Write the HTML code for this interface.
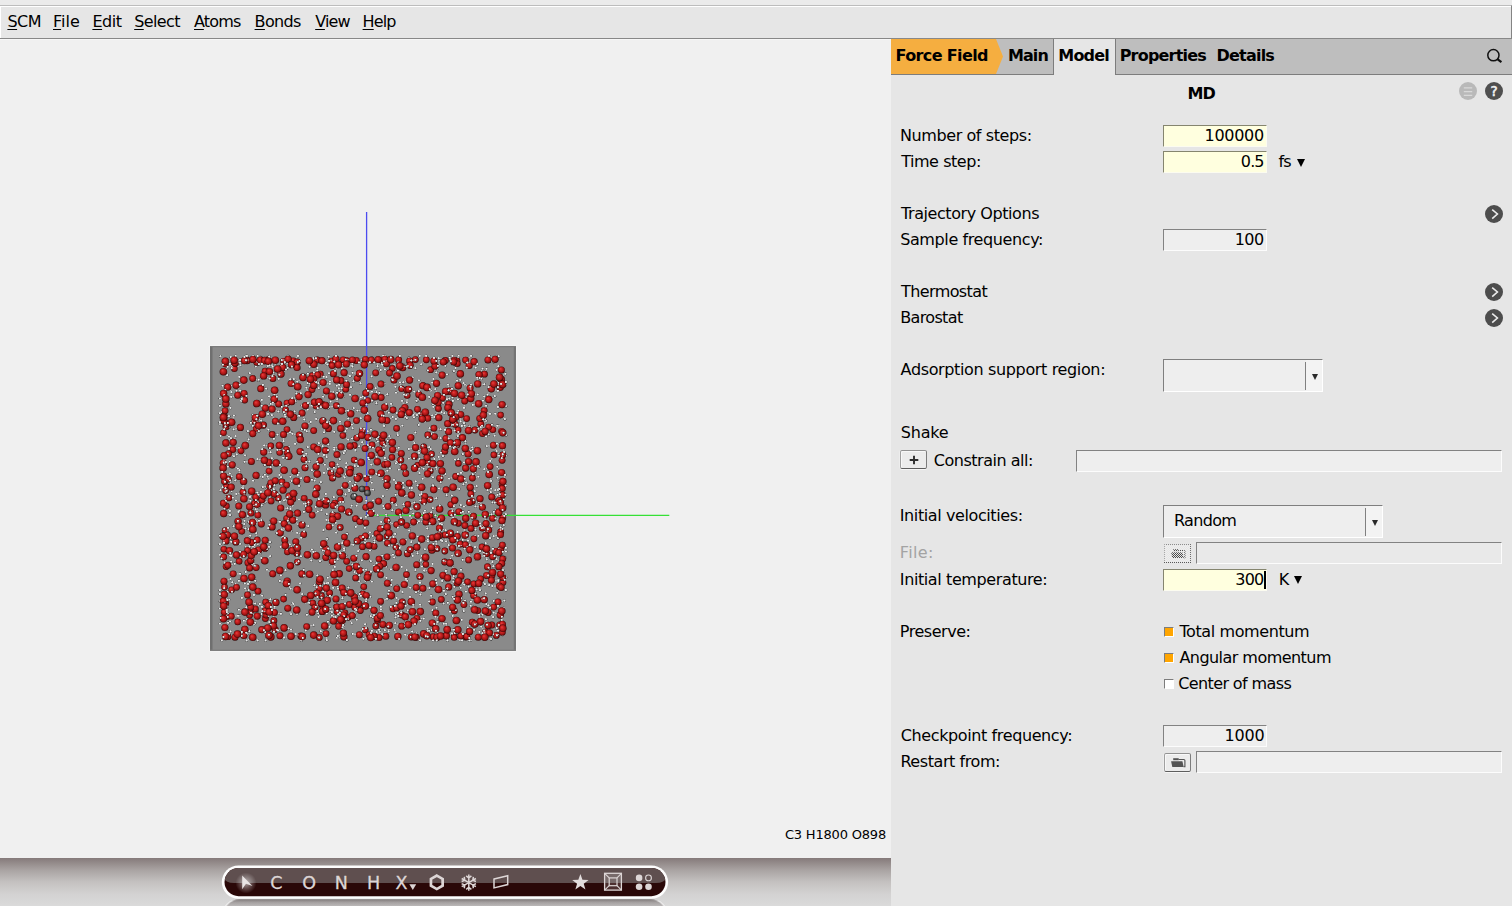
<!DOCTYPE html>
<html lang="en">
<head>
<meta charset="utf-8">
<title>AMSinput - Force Field MD</title>
<style>
html,body{margin:0;padding:0;}
body{width:1512px;height:906px;overflow:hidden;position:relative;background:#ebebeb;
  font-family:"DejaVu Sans","Liberation Sans",sans-serif;font-size:16px;color:#000;line-height:19px;}
.abs{position:absolute;}
/* menu bar */
#menubar{position:absolute;left:0;top:5px;width:1511px;height:32px;background:#e6e6e6;border-top:1px solid #bdbdbd;border-bottom:1px solid #888888;border-right:1px solid #848484;box-shadow:inset 1px 1px 0 #ffffff;box-sizing:content-box;}
#menubar span{position:absolute;top:6px;white-space:nowrap;}
#menubar u{text-decoration:underline;text-underline-offset:2px;text-decoration-thickness:1px;}
/* viewer */
#viewer{position:absolute;left:0;top:39px;width:891px;height:819px;background:#f0f0f0;box-shadow:inset 0 1px 0 #f7f7f7;}
#bottombar{position:absolute;left:0;top:858px;width:891px;height:48px;background:linear-gradient(#857a7a 0%,#a9a3a2 25%,#c4c1c0 50%,#d3d2d2 75%,#dadada 100%);}
#fm{position:absolute;right:5px;top:786px;font-size:13px;white-space:nowrap;}
/* right panel */
#panel{position:absolute;left:891px;top:39px;width:621px;height:867px;background:#e6e6e6;}
#tabbar{position:absolute;left:891px;top:39px;width:621px;height:35px;background:#bebebe;border-bottom:1px solid #7d7d7d;}
#ff{position:absolute;left:0;top:0;width:112px;height:35px;background:#f5ae40;clip-path:polygon(0 0,105px 0,112px 17.5px,105px 35px,0 35px);font-weight:bold;}
#ff span{position:absolute;left:4.5px;top:7px;white-space:nowrap;}
.tab{position:absolute;top:0;height:35px;font-weight:bold;white-space:nowrap;box-sizing:border-box;}
.tab.sel{background:#e6e6e6;height:36px;}
.tab span{position:absolute;top:7px;}
.lbl{position:absolute;left:900px;white-space:nowrap;}
.dis{color:#a3a3a3;}
.inp{position:absolute;left:1163px;width:102px;height:20px;border:1px solid;border-color:#828282 #fcfcfc #fcfcfc #828282;background:#eeeeee;}
.inp.y{background:#ffffdf;border-color:#85856f #fcfcf0 #fcfcf0 #85856f;}
.inp span{position:absolute;right:2px;top:-0.5px;white-space:nowrap;}
.txt{position:absolute;white-space:nowrap;}
.combo{position:absolute;left:1163px;height:31px;border:1px solid;border-color:#7f7f7f #ffffff #ffffff #7f7f7f;background:#eeeeee;}
.combo i{position:absolute;right:16px;top:2px;bottom:1px;width:1px;background:#808080;}
.combo b{position:absolute;right:0;top:0;bottom:0;width:16px;background:#f3f3f3;}
.combo em{position:absolute;right:4.5px;top:14px;width:0;height:0;border-left:3.8px solid transparent;border-right:3.8px solid transparent;border-top:6.2px solid #2a2a2a;}
.combo span{position:absolute;left:11px;top:5px;white-space:nowrap;}
.btn{position:absolute;width:25px;height:17px;border:1px solid;border-color:#929292 #7c7c7c #5e5e5e #a0a0a0;border-radius:2px;background:#ececec;box-shadow:inset 1px 1px 0 #f8f8f8,0 1px 0 #f6f6f6,-1px 0 0 #ededed;}
.cb{position:absolute;left:1164px;width:8px;height:8px;border:1px solid;border-color:#7c7c7c #ffffff #ffffff #7c7c7c;background:#ffa500;}
.cb.off{background:#ffffff;}
.go{position:absolute;left:1485px;width:18px;height:18px;}
.dd{position:absolute;width:0;height:0;border-left:4px solid transparent;border-right:4px solid transparent;border-top:8px solid #000;}
</style>
</head>
<body>
<div id="menubar">
  <span id="m1" style="left:7.4px;letter-spacing:-0.45px"><u>S</u>CM</span>
  <span id="m2" style="left:53.0px;letter-spacing:0.06px"><u>F</u>ile</span>
  <span id="m3" style="left:92.4px;letter-spacing:-0.42px"><u>E</u>dit</span>
  <span id="m4" style="left:134.2px;letter-spacing:-0.60px"><u>S</u>elect</span>
  <span id="m5" style="left:194.0px;letter-spacing:-0.84px"><u>A</u>toms</span>
  <span id="m6" style="left:254.6px;letter-spacing:-0.67px"><u>B</u>onds</span>
  <span id="m7" style="left:315.2px;letter-spacing:-0.90px"><u>V</u>iew</span>
  <span id="m8" style="left:362.6px;letter-spacing:-0.90px"><u>H</u>elp</span>
</div>

<div id="viewer">
  <!--MOLECULE-->
<svg id="mol" class="abs" style="left:0;top:0" width="891" height="819" viewBox="0 39 891 819">
<defs><radialGradient id="og" cx="0.5" cy="0.5" r="0.52" fx="0.36" fy="0.33"><stop offset="0" stop-color="#e84040"/><stop offset="0.35" stop-color="#cc2323"/><stop offset="0.7" stop-color="#a01515"/><stop offset="0.9" stop-color="#5a0808"/><stop offset="1" stop-color="#1e0202"/></radialGradient><radialGradient id="hg" cx="0.5" cy="0.5" r="0.55" fx="0.36" fy="0.33"><stop offset="0" stop-color="#f4f4f4"/><stop offset="0.5" stop-color="#dcdcdc"/><stop offset="0.8" stop-color="#8a8a8a"/><stop offset="1" stop-color="#1a1a1a"/></radialGradient><radialGradient id="cg" cx="0.5" cy="0.5" r="0.52" fx="0.36" fy="0.33"><stop offset="0" stop-color="#9a9a9a"/><stop offset="0.5" stop-color="#5a5a5a"/><stop offset="1" stop-color="#161616"/></radialGradient></defs>
<rect x="209.5" y="345.5" width="307" height="306" fill="#f8f8f8"/>
<rect x="210" y="346" width="306" height="305" fill="#8a8a8a"/>
<rect x="210" y="346" width="2.5" height="305" fill="#6f6f6f"/>
<rect x="513.8" y="346" width="2.2" height="305" fill="#747474"/>
<rect x="210" y="346" width="306" height="1.2" fill="#7b7b7b"/>
<rect x="210" y="649.6" width="306" height="1.4" fill="#7e7e7e"/>
<path d="M366.6 212V515.5" stroke="#4c4cf0" stroke-width="1.3" fill="none"/>
<path d="M366.6 515.4H669.3" stroke="#35e035" stroke-width="1.2" fill="none"/>
<path d="M331.6 361L335 360.8M331.6 361L330.1 358.8M382.7 443.1L384.2 444.5M382.7 443.1L380.2 441M363.8 586.8L363.2 588.9M363.8 586.8L361.5 584.1M366.7 478.8L369.3 480.8M366.7 478.8L368.4 475.9M315.9 406.1L315.3 409.2M315.9 406.1L315.6 406.9M457 360.9L457.9 358.5M457 360.9L454.7 362.8M225.3 364.1L228.7 364.9M225.3 364.1L225.2 362.2M361.2 538.2L363.2 536.6M361.2 538.2L358.5 539.4M407.2 395.5L407.1 399M407.2 395.5L407.6 394.6M337.1 611.7L335.7 610.4M337.1 611.7L334.5 613.7M283.5 361.2L286.8 360.6M283.5 361.2L283.5 363.7M354.2 460.1L356.9 460M354.2 460.1L354.6 463.2M332.2 464.6L330 466.9M332.2 464.6L334.9 464.6M279.7 452.5L280.3 452.9M279.7 452.5L280.9 449.3M336.3 362.4L333.2 363.9M336.3 362.4L337.2 361.3M362.8 593.9L361.3 594M362.8 593.9L362.4 590.7M393 608.9L394.7 606M393 608.9L395.4 611.2M407.8 504.4L411.2 503.5M407.8 504.4L407.9 506.1M457 445L459.8 443M457 445L456 446M454.4 636.5L456.3 636.1M454.4 636.5L453.9 633.2M442.5 398.1L446 398.4M442.5 398.1L441.7 401.1M292.9 498.9L292.8 502.3M292.9 498.9L291 498.6M239.1 561.3L240.3 558M239.1 561.3L239.6 562.3M304.2 498.3L304.2 501.1M304.2 498.3L301.6 498.9M241.8 531.3L241.6 527.8M241.8 531.3L242 532.2M287 429.5L289.3 431.2M287 429.5L286.3 431.6M225.8 603.3L222.9 602.4M225.8 603.3L226.6 604.9M329 527L328.7 523.6M329 527L326.2 528.6M497.9 501.2L497.3 498.5M497.9 501.2L500.8 500.4M401.6 388.8L398.9 390.8M401.6 388.8L400.9 385.7M454.2 637.5L452.9 635.3M454.2 637.5L457.2 638.7M467.5 581.9L468.9 585M467.5 581.9L464 582.4M492.8 429.7L493.7 432.8M492.8 429.7L495.7 427.8M457.3 363.7L457.6 360.6M457.3 363.7L456.5 365.9M430.3 470.9L428.9 467.7M430.3 470.9L427.8 473.2M391.9 457.4L389 459.1M391.9 457.4L394.5 459.7M340.7 499.8L343.1 497.5M340.7 499.8L341.9 500.9M396.6 428.4L399.6 427.1M396.6 428.4L397.3 431.9M367.8 400.5L370.1 400.5M367.8 400.5L369.8 401M500.6 415.1L498 414.5M500.6 415.1L502.8 417.2M425.8 564.4L423.2 562.9M425.8 564.4L425.2 567.8M342.9 435.6L345.6 437.6M342.9 435.6L344.2 433.5M344.4 537L345.8 535.4M344.4 537L343.4 540.1M349.2 568.6L350.8 567.8M349.2 568.6L350.9 566.6M493.9 454.9L492.1 457.9M493.9 454.9L496.5 455.3M416.9 618.2L420.4 618.4M416.9 618.2L416.4 614.8M268.4 359.6L270.5 359.6M268.4 359.6L268.3 362.9M270.8 445.9L270.4 447.1M270.8 445.9L267.5 445.7M395.9 547.3L398.2 545.6M395.9 547.3L392.8 546M396.6 524.6L393.2 523.6M396.6 524.6L397.9 524.5M365.3 630L365.2 627.2M365.3 630L363.6 632.5M226.8 616.7L224.2 614.4M226.8 616.7L227.3 616.8M226.4 506.1L228.2 508.6M226.4 506.1L226.3 503.4M312.7 603.1L312.9 602.3M312.7 603.1L309.3 602.9M286.4 449.4L285 450M286.4 449.4L283.7 448M234.4 368.7L237.4 367M234.4 368.7L232.2 366.4M406.7 525.5L408.1 526.1M406.7 525.5L408 528.1M392.3 368.4L394 367M392.3 368.4L393.4 366.6M287 403L286.5 406.4M287 403L290.4 402.6M387 536.2L386.8 535.1M387 536.2L389.4 534.2M346.3 360.3L344.7 362.1M346.3 360.3L345.3 361.9M237.7 621.9L238.6 618.9M237.7 621.9L238.1 621.4M249.6 615.3L248.5 612.1M249.6 615.3L248.4 617.4M458.4 463.4L456.7 461.5M458.4 463.4L458.4 461.4M458.1 429.9L460 428M458.1 429.9L458.1 433.1M482.3 528.2L483 527.7M482.3 528.2L484.1 531.1M250.5 611.8L248.9 613M250.5 611.8L253.9 611.5M223.5 432.8L226.3 434.7M223.5 432.8L222.1 434.4M500.8 549.3L500.5 549.9M500.8 549.3L503.4 550.5M379 559.1L381.4 561.2M379 559.1L380.7 557.4M246.5 359.5L243.4 359.7M246.5 359.5L246.4 357.7M369 634.7L366.2 636.8M369 634.7L367.6 631.5M223.9 549.2L222.1 552.1M223.9 549.2L222 546.7M502 484.3L500.1 487.2M502 484.3L500.8 482.9M283.6 599.1L284.6 597M283.6 599.1L284.6 597.5M502.7 559L500.5 556.4M502.7 559L504 558.4M366.7 489.4L370 489.5M366.7 489.4L366.7 491.6M256.8 362.4L258.6 359.7M256.8 362.4L256.4 364.5M430.6 369.7L434.1 369.1M430.6 369.7L429.3 370.1M471 528.4L473.5 527.1M471 528.4L469 530.4M396.7 608L396.3 611.3M396.7 608L393.8 607.5M438.4 408.5L437.4 411.6M438.4 408.5L435.8 406.4M466.6 418.6L465.3 420.9M466.6 418.6L463.8 417.8M360.3 610.5L357.2 608.9M360.3 610.5L362.5 608M485.6 632.1L483.4 629.4M485.6 632.1L483.6 634.9M285.6 409.8L285.6 413.2M285.6 409.8L286.1 409.7M348.1 617.3L344.8 618.3M348.1 617.3L349.9 620.3M340.6 395.3L339.8 391.9M340.6 395.3L342.1 396.1M372.1 444.9L370 445.1M372.1 444.9L375 443.3M226.2 566.5L226.3 567.6M226.2 566.5L228.7 564.1M472.3 622.2L474.8 623.4M472.3 622.2L470 624.9M464.7 401L464.4 404.5M464.7 401L462.5 399.7M381.2 397.5L378.9 394.9M381.2 397.5L384.3 395.9M254.9 421.2L253.9 418.2M254.9 421.2L253.9 423.6M287.2 452.8L288.1 449.9M287.2 452.8L287.6 451.9M387.1 556.8L386.2 559.7M387.1 556.8L390.1 555.8M434.5 436.6L437.6 437.5M434.5 436.6L433.7 433.5M380.6 601.4L383.9 600.1M380.6 601.4L380.8 604.1M272.2 434.5L274.9 434.6M272.2 434.5L273.1 436.7M491.9 575.6L490.2 575.1M491.9 575.6L491 572.9M426.3 359.8L423.8 362.1M426.3 359.8L426.3 357.9M356.7 438.1L354.7 438.3M356.7 438.1L354.5 438.4M306.7 626.6L310.1 625.9M306.7 626.6L306.3 628.6M284.8 540.2L283.6 538.7M284.8 540.2L287.3 542.4M319.3 588.6L320.1 591.5M319.3 588.6L316.9 587M484.5 374.2L485.5 371.6M484.5 374.2L482.9 376.5M319.3 637.4L322.2 636M319.3 637.4L316.7 635.9M445.4 360.5L442.1 359.4M445.4 360.5L445.4 363.2M460.2 544L461.5 542M460.2 544L457.2 545.3M320.3 460.4L322.2 457.7M320.3 460.4L322.6 462.6M313.7 430.6L310.2 431M313.7 430.6L314.3 430.4M269.1 471.1L267 472.9M269.1 471.1L269.2 467.9M458.4 523.3L456.1 520.8M458.4 523.3L461.1 521.6M320.3 374.1L323.5 375.7M320.3 374.1L318.4 376.2M282 481.9L283 485.3M282 481.9L279 481.9M502.9 582.4L504.5 579.9M502.9 582.4L500.7 581.1M343.1 359.8L343 362.6M343.1 359.8L339.8 359M501.6 431.3L499.5 428.6M501.6 431.3L502.3 431M329.6 592.9L326.5 592.1M329.6 592.9L328.8 594.7M243 492.1L239.7 493.1M243 492.1L242.7 489.8M265.1 371.2L267 371.8M265.1 371.2L267.4 370.4M271.1 500.9L267.8 501.2M271.1 500.9L270.6 499.2M430.2 515.8L430.4 519.2M430.2 515.8L430.7 514.1M484.2 410.6L485.2 408.2M484.2 410.6L487.1 412.3M231.2 616.2L234.7 616M231.2 616.2L230.6 618.9M380.6 574.8L381.2 571.5M380.6 574.8L383.6 576.4M223.4 503.2L224.9 500M223.4 503.2L225.9 505.3M232.8 449.6L236 448.6M232.8 449.6L233.3 449.7M336.4 405.7L333 406.4M336.4 405.7L336.9 402.5M344.9 613L346.4 616.1M344.9 613L341.6 613.7M464.9 525.5L464.5 528.9M464.9 525.5L461.8 524.4M269.6 486.1L266.3 486.6M269.6 486.1L271.1 489.3M502.8 455L504.4 455.4M502.8 455L499.6 454M356.5 420.6L358.7 419.5M356.5 420.6L354.2 422.7M330.9 473.2L331.1 473.2M330.9 473.2L327.5 473.1M499.4 586.2L495.9 586.1M499.4 586.2L500.4 582.8M415.4 359.6L417.6 357.8M415.4 359.6L412.2 358.7M256.2 567.6L255.8 566.8M256.2 567.6L254 565.5M496.3 635.4L494.6 634.9M496.3 635.4L498 632.4M465.6 360.1L467 363.2M465.6 360.1L468.4 358.1M475 430L472.2 428.3M475 430L477.2 427.5M457.4 536.4L457.5 534.2M457.4 536.4L454.9 538.7M312.2 515.1L315.1 513.4M312.2 515.1L312.8 515.6M265.7 602.2L265.9 603.4M265.7 602.2L264.7 605M241 450.8L243.1 453.1M241 450.8L238.9 452.7M457.2 583.2L455.8 585M457.2 583.2L459 585.5M480.6 578.9L482.8 581.6M480.6 578.9L479.3 579.5M428.5 462.4L426.5 460.2M428.5 462.4L431.4 462.7M396.7 588.6L397 587.3M396.7 588.6L399.7 590.4M454.1 360.3L452.3 360M454.1 360.3L453.3 358.2" stroke="#d84040" stroke-width="0.8" fill="none"/>
<path d="M335 360.8L338.4 360.7M330.1 358.8L328.7 356.7M384.2 444.5L385.8 445.9M380.2 441L377.7 439M363.2 588.9L362.7 591.1M361.5 584.1L359.3 581.5M369.3 480.8L371.8 482.8M368.4 475.9L370 472.9M315.3 409.2L314.7 412.2M315.6 406.9L315.3 407.7M457.9 358.5L458.7 356M454.7 362.8L452.3 364.6M228.7 364.9L232.1 365.7M225.2 362.2L225 360.3M363.2 536.6L365.3 535M358.5 539.4L355.8 540.7M407.1 399L406.9 402.5M407.6 394.6L407.9 393.6M335.7 610.4L334.4 609.1M334.5 613.7L331.9 615.7M286.8 360.6L290.2 360M283.5 363.7L283.6 366.2M356.9 460L359.6 459.8M354.6 463.2L354.9 466.2M330 466.9L327.8 469.2M334.9 464.6L337.7 464.5M280.3 452.9L280.9 453.2M280.9 449.3L282.1 446.1M333.2 363.9L330.1 365.5M337.2 361.3L338 360.2M361.3 594L359.7 594.1M362.4 590.7L361.9 587.4M394.7 606L396.5 603M395.4 611.2L397.9 613.4M411.2 503.5L414.5 502.6M407.9 506.1L407.9 507.8M459.8 443L462.6 441M456 446L455 446.9M456.3 636.1L458.1 635.8M453.9 633.2L453.5 629.9M446 398.4L449.4 398.6M441.7 401.1L440.8 404.2M292.8 502.3L292.7 505.8M291 498.6L289.1 498.3M240.3 558L241.5 554.8M239.6 562.3L240.1 563.3M304.2 501.1L304.2 503.8M301.6 498.9L299.1 499.6M241.6 527.8L241.3 524.3M242 532.2L242.2 533.1M289.3 431.2L291.7 432.9M286.3 431.6L285.6 433.8M222.9 602.4L220 601.4M226.6 604.9L227.4 606.5M328.7 523.6L328.3 520.3M326.2 528.6L323.5 530.2M497.3 498.5L496.8 495.7M500.8 500.4L503.7 499.6M398.9 390.8L396.1 392.8M400.9 385.7L400.1 382.5M452.9 635.3L451.6 633.1M457.2 638.7L460.1 640M468.9 585L470.3 588.1M464 582.4L460.6 582.8M493.7 432.8L494.7 435.8M495.7 427.8L498.7 426M457.6 360.6L458 357.5M456.5 365.9L455.6 368.1M428.9 467.7L427.4 464.6M427.8 473.2L425.2 475.5M389 459.1L386.2 460.9M394.5 459.7L397.1 462M343.1 497.5L345.6 495.3M341.9 500.9L343.2 502M399.6 427.1L402.5 425.7M397.3 431.9L397.9 435.3M370.1 400.5L372.4 400.4M369.8 401L371.7 401.4M498 414.5L495.4 413.8M502.8 417.2L505 419.2M423.2 562.9L420.7 561.4M425.2 567.8L424.6 571.2M345.6 437.6L348.3 439.7M344.2 433.5L345.5 431.3M345.8 535.4L347.2 533.9M343.4 540.1L342.3 543.2M350.8 567.8L352.4 567.1M350.9 566.6L352.5 564.6M492.1 457.9L490.4 461M496.5 455.3L499.2 455.8M420.4 618.4L423.8 618.7M416.4 614.8L415.8 611.4M270.5 359.6L272.6 359.6M268.3 362.9L268.1 366.3M270.4 447.1L270 448.3M267.5 445.7L264.3 445.5M398.2 545.6L400.5 544M392.8 546L389.7 544.7M393.2 523.6L389.9 522.6M397.9 524.5L399.2 524.5M365.2 627.2L365.2 624.4M363.6 632.5L362 635M224.2 614.4L221.6 612.1M227.3 616.8L227.7 617M228.2 508.6L230 511.1M226.3 503.4L226.2 500.8M312.9 602.3L313.1 601.5M309.3 602.9L305.9 602.7M285 450L283.7 450.5M283.7 448L281 446.6M237.4 367L240.5 365.3M232.2 366.4L230 364M408.1 526.1L409.5 526.7M408 528.1L409.3 530.6M394 367L395.7 365.6M393.4 366.6L394.5 364.7M286.5 406.4L286 409.9M290.4 402.6L293.7 402.2M386.8 535.1L386.6 534M389.4 534.2L391.9 532.2M344.7 362.1L343.2 364M345.3 361.9L344.4 363.5M238.6 618.9L239.6 615.9M238.1 621.4L238.4 620.8M248.5 612.1L247.4 608.9M248.4 617.4L247.1 619.5M456.7 461.5L455.1 459.6M458.4 461.4L458.4 459.4M460 428L462 426.1M458.1 433.1L458 436.3M483 527.7L483.8 527.1M484.1 531.1L486 533.9M248.9 613L247.4 614.1M253.9 611.5L257.2 611.3M226.3 434.7L229.1 436.7M222.1 434.4L220.6 436M500.5 549.9L500.2 550.5M503.4 550.5L506 551.6M381.4 561.2L383.8 563.2M380.7 557.4L382.4 555.8M243.4 359.7L240.2 359.9M246.4 357.7L246.3 356M366.2 636.8L363.5 638.9M367.6 631.5L366.2 628.3M222.1 552.1L220.2 555M222 546.7L220 544.3M500.1 487.2L498.2 490.1M500.8 482.9L499.6 481.5M284.6 597L285.6 594.9M284.6 597.5L285.6 595.8M500.5 556.4L498.2 553.8M504 558.4L505.3 557.8M370 489.5L373.3 489.7M366.7 491.6L366.7 493.7M258.6 359.7L260.4 357M256.4 364.5L255.9 366.6M434.1 369.1L437.5 368.6M429.3 370.1L427.9 370.5M473.5 527.1L476 525.9M469 530.4L467 532.4M396.3 611.3L395.9 614.5M393.8 607.5L390.9 607M437.4 411.6L436.3 414.7M435.8 406.4L433.1 404.2M465.3 420.9L464.1 423.2M463.8 417.8L461 417M357.2 608.9L354 607.4M362.5 608L364.7 605.5M483.4 629.4L481.3 626.7M483.6 634.9L481.7 637.7M285.6 413.2L285.6 416.6M286.1 409.7L286.6 409.7M344.8 618.3L341.4 619.2M349.9 620.3L351.7 623.3M339.8 391.9L338.9 388.5M342.1 396.1L343.5 396.8M370 445.1L367.9 445.3M375 443.3L377.9 441.6M226.3 567.6L226.5 568.7M228.7 564.1L231.3 561.7M474.8 623.4L477.3 624.5M470 624.9L467.8 627.6M464.4 404.5L464.1 408M462.5 399.7L460.2 398.5M378.9 394.9L376.6 392.3M384.3 395.9L387.4 394.4M253.9 418.2L252.8 415.1M253.9 423.6L252.9 425.9M288.1 449.9L288.9 447M287.6 451.9L287.9 451.1M386.2 559.7L385.2 562.5M390.1 555.8L393.1 554.8M437.6 437.5L440.7 438.3M433.7 433.5L433 430.4M383.9 600.1L387.2 598.9M380.8 604.1L380.9 606.8M274.9 434.6L277.6 434.7M273.1 436.7L274 438.9M490.2 575.1L488.4 574.7M491 572.9L490 570.2M423.8 362.1L421.3 364.4M426.3 357.9L426.3 356M354.7 438.3L352.7 438.4M354.5 438.4L352.2 438.6M310.1 625.9L313.6 625.2M306.3 628.6L305.8 630.6M283.6 538.7L282.4 537.2M287.3 542.4L289.9 544.5M320.1 591.5L320.8 594.4M316.9 587L314.5 585.4M485.5 371.6L486.6 368.9M482.9 376.5L481.4 378.7M322.2 636L325.1 634.6M316.7 635.9L314 634.3M442.1 359.4L438.8 358.4M445.4 363.2L445.4 365.9M461.5 542L462.8 540M457.2 545.3L454.2 546.7M322.2 457.7L324.1 455.1M322.6 462.6L324.9 464.8M310.2 431L306.8 431.4M314.3 430.4L315 430.1M267 472.9L264.9 474.8M269.2 467.9L269.3 464.7M456.1 520.8L453.7 518.2M461.1 521.6L463.8 519.9M323.5 375.7L326.6 377.2M318.4 376.2L316.5 378.2M283 485.3L284.1 488.6M279 481.9L276 481.8M504.5 579.9L506 577.5M500.7 581.1L498.5 579.9M343 362.6L342.9 365.5M339.8 359L336.4 358.1M499.5 428.6L497.4 425.9M502.3 431L503.1 430.7M326.5 592.1L323.4 591.3M328.8 594.7L328.1 596.6M239.7 493.1L236.4 494.1M242.7 489.8L242.4 487.5M267 371.8L269 372.4M267.4 370.4L269.7 369.5M267.8 501.2L264.6 501.6M270.6 499.2L270.1 497.5M430.4 519.2L430.6 522.6M430.7 514.1L431.3 512.4M485.2 408.2L486.2 405.9M487.1 412.3L490.1 414M234.7 616L238.2 615.9M230.6 618.9L230 621.6M381.2 571.5L381.8 568.1M383.6 576.4L386.6 578M224.9 500L226.5 496.9M225.9 505.3L228.4 507.5M236 448.6L239.1 447.7M233.3 449.7L233.8 449.9M333 406.4L329.6 407M336.9 402.5L337.3 399.3M346.4 616.1L347.8 619.3M341.6 613.7L338.3 614.3M464.5 528.9L464 532.3M461.8 524.4L458.7 523.3M266.3 486.6L262.9 487.2M271.1 489.3L272.5 492.4M504.4 455.4L506 455.7M499.6 454L496.4 452.9M358.7 419.5L360.9 418.4M354.2 422.7L351.9 424.7M331.1 473.2L331.3 473.2M327.5 473.1L324.1 473M495.9 586.1L492.4 586.1M500.4 582.8L501.3 579.4M417.6 357.8L419.8 356M412.2 358.7L409 357.8M255.8 566.8L255.4 566M254 565.5L251.8 563.4M494.6 634.9L493 634.4M498 632.4L499.7 629.5M467 363.2L468.4 366.2M468.4 358.1L471.2 356M472.2 428.3L469.4 426.6M477.2 427.5L479.3 425.1M457.5 534.2L457.6 532M454.9 538.7L452.4 541M315.1 513.4L317.9 511.6M312.8 515.6L313.4 516M265.9 603.4L266 604.6M264.7 605L263.8 607.8M243.1 453.1L245.2 455.5M238.9 452.7L236.8 454.5M455.8 585L454.4 586.9M459 585.5L460.7 587.9M482.8 581.6L485 584.2M479.3 579.5L478 580M426.5 460.2L424.4 458M431.4 462.7L434.2 463M397 587.3L397.3 585.9M399.7 590.4L402.6 592.2M452.3 360L450.5 359.6M453.3 358.2L452.5 356" stroke="#d8d8d8" stroke-width="0.7" fill="none"/>
<g fill="url(#hg)"><circle cx="362.7" cy="591.1" r="1.3"/><circle cx="371.8" cy="482.8" r="1.3"/><circle cx="315.3" cy="407.7" r="1.3"/><circle cx="458.7" cy="356" r="1.3"/><circle cx="452.3" cy="364.6" r="1.3"/><circle cx="225" cy="360.3" r="1.3"/><circle cx="365.3" cy="535" r="1.3"/><circle cx="355.8" cy="540.7" r="1.3"/><circle cx="334.4" cy="609.1" r="1.3"/><circle cx="290.2" cy="360" r="1.3"/><circle cx="354.9" cy="466.2" r="1.3"/><circle cx="327.8" cy="469.2" r="1.3"/><circle cx="337.7" cy="464.5" r="1.3"/><circle cx="280.9" cy="453.2" r="1.3"/><circle cx="361.9" cy="587.4" r="1.3"/><circle cx="396.5" cy="603" r="1.3"/><circle cx="407.9" cy="507.8" r="1.3"/><circle cx="458.1" cy="635.8" r="1.3"/><circle cx="292.7" cy="505.8" r="1.3"/><circle cx="240.1" cy="563.3" r="1.3"/><circle cx="304.2" cy="503.8" r="1.3"/><circle cx="242.2" cy="533.1" r="1.3"/><circle cx="291.7" cy="432.9" r="1.3"/><circle cx="328.3" cy="520.3" r="1.3"/><circle cx="323.5" cy="530.2" r="1.3"/><circle cx="496.8" cy="495.7" r="1.3"/><circle cx="396.1" cy="392.8" r="1.3"/><circle cx="400.1" cy="382.5" r="1.3"/><circle cx="470.3" cy="588.1" r="1.3"/><circle cx="458" cy="357.5" r="1.3"/><circle cx="455.6" cy="368.1" r="1.3"/><circle cx="386.2" cy="460.9" r="1.3"/><circle cx="345.6" cy="495.3" r="1.3"/><circle cx="402.5" cy="425.7" r="1.3"/><circle cx="371.7" cy="401.4" r="1.3"/><circle cx="495.4" cy="413.8" r="1.3"/><circle cx="505" cy="419.2" r="1.3"/><circle cx="420.7" cy="561.4" r="1.3"/><circle cx="348.3" cy="439.7" r="1.3"/><circle cx="347.2" cy="533.9" r="1.3"/><circle cx="342.3" cy="543.2" r="1.3"/><circle cx="352.4" cy="567.1" r="1.3"/><circle cx="268.1" cy="366.3" r="1.3"/><circle cx="264.3" cy="445.5" r="1.3"/><circle cx="399.2" cy="524.5" r="1.3"/><circle cx="365.2" cy="624.4" r="1.3"/><circle cx="362" cy="635" r="1.3"/><circle cx="313.1" cy="601.5" r="1.3"/><circle cx="281" cy="446.6" r="1.3"/><circle cx="409.5" cy="526.7" r="1.3"/><circle cx="394.5" cy="364.7" r="1.3"/><circle cx="386.6" cy="534" r="1.3"/><circle cx="344.4" cy="363.5" r="1.3"/><circle cx="238.4" cy="620.8" r="1.3"/><circle cx="458.4" cy="459.4" r="1.3"/><circle cx="462" cy="426.1" r="1.3"/><circle cx="458" cy="436.3" r="1.3"/><circle cx="486" cy="533.9" r="1.3"/><circle cx="229.1" cy="436.7" r="1.3"/><circle cx="506" cy="551.6" r="1.3"/><circle cx="382.4" cy="555.8" r="1.3"/><circle cx="240.2" cy="359.9" r="1.3"/><circle cx="499.6" cy="481.5" r="1.3"/><circle cx="285.6" cy="595.8" r="1.3"/><circle cx="505.3" cy="557.8" r="1.3"/><circle cx="373.3" cy="489.7" r="1.3"/><circle cx="260.4" cy="357" r="1.3"/><circle cx="255.9" cy="366.6" r="1.3"/><circle cx="395.9" cy="614.5" r="1.3"/><circle cx="436.3" cy="414.7" r="1.3"/><circle cx="461" cy="417" r="1.3"/><circle cx="286.6" cy="409.7" r="1.3"/><circle cx="343.5" cy="396.8" r="1.3"/><circle cx="226.5" cy="568.7" r="1.3"/><circle cx="477.3" cy="624.5" r="1.3"/><circle cx="460.2" cy="398.5" r="1.3"/><circle cx="288.9" cy="447" r="1.3"/><circle cx="380.9" cy="606.8" r="1.3"/><circle cx="277.6" cy="434.7" r="1.3"/><circle cx="490" cy="570.2" r="1.3"/><circle cx="352.7" cy="438.4" r="1.3"/><circle cx="282.4" cy="537.2" r="1.3"/><circle cx="289.9" cy="544.5" r="1.3"/><circle cx="320.8" cy="594.4" r="1.3"/><circle cx="314.5" cy="585.4" r="1.3"/><circle cx="462.8" cy="540" r="1.3"/><circle cx="454.2" cy="546.7" r="1.3"/><circle cx="324.1" cy="455.1" r="1.3"/><circle cx="315" cy="430.1" r="1.3"/><circle cx="264.9" cy="474.8" r="1.3"/><circle cx="269.3" cy="464.7" r="1.3"/><circle cx="463.8" cy="519.9" r="1.3"/><circle cx="276" cy="481.8" r="1.3"/><circle cx="328.1" cy="596.6" r="1.3"/><circle cx="269.7" cy="369.5" r="1.3"/><circle cx="270.1" cy="497.5" r="1.3"/><circle cx="490.1" cy="414" r="1.3"/><circle cx="230" cy="621.6" r="1.3"/><circle cx="228.4" cy="507.5" r="1.3"/><circle cx="233.8" cy="449.9" r="1.3"/><circle cx="337.3" cy="399.3" r="1.3"/><circle cx="458.7" cy="523.3" r="1.3"/><circle cx="262.9" cy="487.2" r="1.3"/><circle cx="506" cy="455.7" r="1.3"/><circle cx="496.4" cy="452.9" r="1.3"/><circle cx="360.9" cy="418.4" r="1.3"/><circle cx="351.9" cy="424.7" r="1.3"/><circle cx="331.3" cy="473.2" r="1.3"/><circle cx="419.8" cy="356" r="1.3"/><circle cx="409" cy="357.8" r="1.3"/><circle cx="251.8" cy="563.4" r="1.3"/><circle cx="479.3" cy="425.1" r="1.3"/><circle cx="457.6" cy="532" r="1.3"/><circle cx="452.4" cy="541" r="1.3"/><circle cx="313.4" cy="516" r="1.3"/><circle cx="266" cy="604.6" r="1.3"/><circle cx="245.2" cy="455.5" r="1.3"/><circle cx="454.4" cy="586.9" r="1.3"/><circle cx="478" cy="580" r="1.3"/><circle cx="424.4" cy="458" r="1.3"/><circle cx="434.2" cy="463" r="1.3"/><circle cx="397.3" cy="585.9" r="1.3"/><circle cx="450.5" cy="359.6" r="1.3"/></g>
<g fill="url(#og)"><circle cx="331.6" cy="361" r="3.3"/><circle cx="382.7" cy="443.1" r="3.3"/><circle cx="363.8" cy="586.8" r="3.3"/><circle cx="366.7" cy="478.8" r="3.3"/><circle cx="315.9" cy="406.1" r="3.3"/><circle cx="457" cy="360.9" r="3.3"/><circle cx="225.3" cy="364.1" r="3.3"/><circle cx="361.2" cy="538.2" r="3.3"/><circle cx="407.2" cy="395.5" r="3.3"/><circle cx="337.1" cy="611.7" r="3.3"/><circle cx="283.5" cy="361.2" r="3.3"/><circle cx="354.2" cy="460.1" r="3.3"/><circle cx="332.2" cy="464.6" r="3.3"/><circle cx="279.7" cy="452.5" r="3.3"/><circle cx="336.3" cy="362.4" r="3.3"/><circle cx="362.8" cy="593.9" r="3.3"/><circle cx="393" cy="608.9" r="3.3"/><circle cx="407.8" cy="504.4" r="3.3"/><circle cx="457" cy="445" r="3.3"/><circle cx="454.4" cy="636.5" r="3.3"/><circle cx="442.5" cy="398.1" r="3.3"/><circle cx="292.9" cy="498.9" r="3.3"/><circle cx="239.1" cy="561.3" r="3.3"/><circle cx="304.2" cy="498.3" r="3.3"/><circle cx="241.8" cy="531.3" r="3.3"/><circle cx="287" cy="429.5" r="3.3"/><circle cx="225.8" cy="603.3" r="3.3"/><circle cx="329" cy="527" r="3.3"/><circle cx="497.9" cy="501.2" r="3.3"/><circle cx="401.6" cy="388.8" r="3.3"/><circle cx="454.2" cy="637.5" r="3.3"/><circle cx="467.5" cy="581.9" r="3.3"/><circle cx="492.8" cy="429.7" r="3.3"/><circle cx="457.3" cy="363.7" r="3.3"/><circle cx="430.3" cy="470.9" r="3.3"/><circle cx="391.9" cy="457.4" r="3.3"/><circle cx="340.7" cy="499.8" r="3.3"/><circle cx="396.6" cy="428.4" r="3.3"/><circle cx="367.8" cy="400.5" r="3.3"/><circle cx="500.6" cy="415.1" r="3.3"/><circle cx="425.8" cy="564.4" r="3.3"/><circle cx="342.9" cy="435.6" r="3.3"/><circle cx="344.4" cy="537" r="3.3"/><circle cx="349.2" cy="568.6" r="3.3"/><circle cx="493.9" cy="454.9" r="3.3"/><circle cx="416.9" cy="618.2" r="3.3"/><circle cx="268.4" cy="359.6" r="3.3"/><circle cx="270.8" cy="445.9" r="3.3"/><circle cx="395.9" cy="547.3" r="3.3"/><circle cx="396.6" cy="524.6" r="3.3"/><circle cx="365.3" cy="630" r="3.3"/><circle cx="226.8" cy="616.7" r="3.3"/><circle cx="226.4" cy="506.1" r="3.3"/><circle cx="312.7" cy="603.1" r="3.3"/><circle cx="286.4" cy="449.4" r="3.3"/><circle cx="234.4" cy="368.7" r="3.3"/><circle cx="406.7" cy="525.5" r="3.3"/><circle cx="392.3" cy="368.4" r="3.3"/><circle cx="287" cy="403" r="3.3"/><circle cx="387" cy="536.2" r="3.3"/><circle cx="346.3" cy="360.3" r="3.3"/><circle cx="237.7" cy="621.9" r="3.3"/><circle cx="249.6" cy="615.3" r="3.3"/><circle cx="458.4" cy="463.4" r="3.3"/><circle cx="458.1" cy="429.9" r="3.3"/><circle cx="482.3" cy="528.2" r="3.3"/><circle cx="250.5" cy="611.8" r="3.3"/><circle cx="223.5" cy="432.8" r="3.3"/><circle cx="500.8" cy="549.3" r="3.3"/><circle cx="379" cy="559.1" r="3.3"/><circle cx="246.5" cy="359.5" r="3.3"/><circle cx="369" cy="634.7" r="3.3"/><circle cx="223.9" cy="549.2" r="3.3"/><circle cx="502" cy="484.3" r="3.3"/><circle cx="283.6" cy="599.1" r="3.3"/><circle cx="502.7" cy="559" r="3.4"/><circle cx="366.7" cy="489.4" r="3.4"/><circle cx="256.8" cy="362.4" r="3.4"/><circle cx="430.6" cy="369.7" r="3.4"/><circle cx="471" cy="528.4" r="3.4"/><circle cx="396.7" cy="608" r="3.4"/><circle cx="438.4" cy="408.5" r="3.4"/><circle cx="466.6" cy="418.6" r="3.4"/><circle cx="360.3" cy="610.5" r="3.4"/><circle cx="485.6" cy="632.1" r="3.4"/><circle cx="285.6" cy="409.8" r="3.4"/><circle cx="348.1" cy="617.3" r="3.4"/><circle cx="340.6" cy="395.3" r="3.4"/><circle cx="372.1" cy="444.9" r="3.4"/><circle cx="226.2" cy="566.5" r="3.4"/><circle cx="472.3" cy="622.2" r="3.4"/><circle cx="464.7" cy="401" r="3.4"/><circle cx="381.2" cy="397.5" r="3.4"/><circle cx="254.9" cy="421.2" r="3.4"/><circle cx="287.2" cy="452.8" r="3.4"/><circle cx="387.1" cy="556.8" r="3.4"/><circle cx="434.5" cy="436.6" r="3.4"/><circle cx="380.6" cy="601.4" r="3.4"/><circle cx="272.2" cy="434.5" r="3.4"/><circle cx="491.9" cy="575.6" r="3.4"/><circle cx="426.3" cy="359.8" r="3.4"/><circle cx="356.7" cy="438.1" r="3.4"/><circle cx="306.7" cy="626.6" r="3.4"/><circle cx="284.8" cy="540.2" r="3.4"/><circle cx="319.3" cy="588.6" r="3.4"/><circle cx="484.5" cy="374.2" r="3.4"/><circle cx="319.3" cy="637.4" r="3.4"/><circle cx="445.4" cy="360.5" r="3.4"/><circle cx="460.2" cy="544" r="3.4"/><circle cx="320.3" cy="460.4" r="3.4"/><circle cx="313.7" cy="430.6" r="3.4"/><circle cx="269.1" cy="471.1" r="3.4"/><circle cx="458.4" cy="523.3" r="3.4"/><circle cx="320.3" cy="374.1" r="3.4"/><circle cx="282" cy="481.9" r="3.4"/><circle cx="502.9" cy="582.4" r="3.4"/><circle cx="343.1" cy="359.8" r="3.4"/><circle cx="501.6" cy="431.3" r="3.4"/><circle cx="329.6" cy="592.9" r="3.4"/><circle cx="243" cy="492.1" r="3.4"/><circle cx="265.1" cy="371.2" r="3.4"/><circle cx="271.1" cy="500.9" r="3.4"/><circle cx="430.2" cy="515.8" r="3.4"/><circle cx="484.2" cy="410.6" r="3.4"/><circle cx="231.2" cy="616.2" r="3.4"/><circle cx="380.6" cy="574.8" r="3.4"/><circle cx="223.4" cy="503.2" r="3.4"/><circle cx="232.8" cy="449.6" r="3.4"/><circle cx="336.4" cy="405.7" r="3.4"/><circle cx="344.9" cy="613" r="3.4"/><circle cx="464.9" cy="525.5" r="3.4"/><circle cx="269.6" cy="486.1" r="3.4"/><circle cx="502.8" cy="455" r="3.4"/><circle cx="356.5" cy="420.6" r="3.4"/><circle cx="330.9" cy="473.2" r="3.4"/><circle cx="499.4" cy="586.2" r="3.4"/><circle cx="415.4" cy="359.6" r="3.4"/><circle cx="256.2" cy="567.6" r="3.4"/><circle cx="496.3" cy="635.4" r="3.4"/><circle cx="465.6" cy="360.1" r="3.4"/><circle cx="475" cy="430" r="3.4"/><circle cx="457.4" cy="536.4" r="3.4"/><circle cx="312.2" cy="515.1" r="3.4"/><circle cx="265.7" cy="602.2" r="3.4"/><circle cx="241" cy="450.8" r="3.4"/><circle cx="457.2" cy="583.2" r="3.4"/><circle cx="480.6" cy="578.9" r="3.4"/><circle cx="428.5" cy="462.4" r="3.4"/><circle cx="396.7" cy="588.6" r="3.4"/><circle cx="454.1" cy="360.3" r="3.4"/></g>
<g fill="url(#hg)"><circle cx="338.4" cy="360.7" r="1.3"/><circle cx="328.7" cy="356.7" r="1.3"/><circle cx="385.8" cy="445.9" r="1.3"/><circle cx="377.7" cy="439" r="1.3"/><circle cx="359.3" cy="581.5" r="1.3"/><circle cx="370" cy="472.9" r="1.3"/><circle cx="314.7" cy="412.2" r="1.3"/><circle cx="232.1" cy="365.7" r="1.3"/><circle cx="406.9" cy="402.5" r="1.3"/><circle cx="407.9" cy="393.6" r="1.3"/><circle cx="331.9" cy="615.7" r="1.3"/><circle cx="283.6" cy="366.2" r="1.3"/><circle cx="359.6" cy="459.8" r="1.3"/><circle cx="282.1" cy="446.1" r="1.3"/><circle cx="330.1" cy="365.5" r="1.3"/><circle cx="338" cy="360.2" r="1.3"/><circle cx="359.7" cy="594.1" r="1.3"/><circle cx="397.9" cy="613.4" r="1.3"/><circle cx="414.5" cy="502.6" r="1.3"/><circle cx="462.6" cy="441" r="1.3"/><circle cx="455" cy="446.9" r="1.3"/><circle cx="453.5" cy="629.9" r="1.3"/><circle cx="449.4" cy="398.6" r="1.3"/><circle cx="440.8" cy="404.2" r="1.3"/><circle cx="289.1" cy="498.3" r="1.3"/><circle cx="241.5" cy="554.8" r="1.3"/><circle cx="299.1" cy="499.6" r="1.3"/><circle cx="241.3" cy="524.3" r="1.3"/><circle cx="285.6" cy="433.8" r="1.3"/><circle cx="220" cy="601.4" r="1.3"/><circle cx="227.4" cy="606.5" r="1.3"/><circle cx="503.7" cy="499.6" r="1.3"/><circle cx="451.6" cy="633.1" r="1.3"/><circle cx="460.1" cy="640" r="1.3"/><circle cx="460.6" cy="582.8" r="1.3"/><circle cx="494.7" cy="435.8" r="1.3"/><circle cx="498.7" cy="426" r="1.3"/><circle cx="427.4" cy="464.6" r="1.3"/><circle cx="425.2" cy="475.5" r="1.3"/><circle cx="397.1" cy="462" r="1.3"/><circle cx="343.2" cy="502" r="1.3"/><circle cx="397.9" cy="435.3" r="1.3"/><circle cx="372.4" cy="400.4" r="1.3"/><circle cx="424.6" cy="571.2" r="1.3"/><circle cx="345.5" cy="431.3" r="1.3"/><circle cx="352.5" cy="564.6" r="1.3"/><circle cx="490.4" cy="461" r="1.3"/><circle cx="499.2" cy="455.8" r="1.3"/><circle cx="423.8" cy="618.7" r="1.3"/><circle cx="415.8" cy="611.4" r="1.3"/><circle cx="272.6" cy="359.6" r="1.3"/><circle cx="270" cy="448.3" r="1.3"/><circle cx="400.5" cy="544" r="1.3"/><circle cx="389.7" cy="544.7" r="1.3"/><circle cx="389.9" cy="522.6" r="1.3"/><circle cx="221.6" cy="612.1" r="1.3"/><circle cx="227.7" cy="617" r="1.3"/><circle cx="230" cy="511.1" r="1.3"/><circle cx="226.2" cy="500.8" r="1.3"/><circle cx="305.9" cy="602.7" r="1.3"/><circle cx="283.7" cy="450.5" r="1.3"/><circle cx="240.5" cy="365.3" r="1.3"/><circle cx="230" cy="364" r="1.3"/><circle cx="409.3" cy="530.6" r="1.3"/><circle cx="395.7" cy="365.6" r="1.3"/><circle cx="286" cy="409.9" r="1.3"/><circle cx="293.7" cy="402.2" r="1.3"/><circle cx="391.9" cy="532.2" r="1.3"/><circle cx="343.2" cy="364" r="1.3"/><circle cx="239.6" cy="615.9" r="1.3"/><circle cx="247.4" cy="608.9" r="1.3"/><circle cx="247.1" cy="619.5" r="1.3"/><circle cx="455.1" cy="459.6" r="1.3"/><circle cx="483.8" cy="527.1" r="1.3"/><circle cx="247.4" cy="614.1" r="1.3"/><circle cx="257.2" cy="611.3" r="1.3"/><circle cx="220.6" cy="436" r="1.3"/><circle cx="500.2" cy="550.5" r="1.3"/><circle cx="383.8" cy="563.2" r="1.3"/><circle cx="246.3" cy="356" r="1.3"/><circle cx="363.5" cy="638.9" r="1.3"/><circle cx="366.2" cy="628.3" r="1.3"/><circle cx="220.2" cy="555" r="1.3"/><circle cx="220" cy="544.3" r="1.3"/><circle cx="498.2" cy="490.1" r="1.3"/><circle cx="285.6" cy="594.9" r="1.3"/><circle cx="498.2" cy="553.8" r="1.3"/><circle cx="366.7" cy="493.7" r="1.3"/><circle cx="437.5" cy="368.6" r="1.3"/><circle cx="427.9" cy="370.5" r="1.3"/><circle cx="476" cy="525.9" r="1.3"/><circle cx="467" cy="532.4" r="1.3"/><circle cx="390.9" cy="607" r="1.3"/><circle cx="433.1" cy="404.2" r="1.3"/><circle cx="464.1" cy="423.2" r="1.3"/><circle cx="354" cy="607.4" r="1.3"/><circle cx="364.7" cy="605.5" r="1.3"/><circle cx="481.3" cy="626.7" r="1.3"/><circle cx="481.7" cy="637.7" r="1.3"/><circle cx="285.6" cy="416.6" r="1.3"/><circle cx="341.4" cy="619.2" r="1.3"/><circle cx="351.7" cy="623.3" r="1.3"/><circle cx="338.9" cy="388.5" r="1.3"/><circle cx="367.9" cy="445.3" r="1.3"/><circle cx="377.9" cy="441.6" r="1.3"/><circle cx="231.3" cy="561.7" r="1.3"/><circle cx="467.8" cy="627.6" r="1.3"/><circle cx="464.1" cy="408" r="1.3"/><circle cx="376.6" cy="392.3" r="1.3"/><circle cx="387.4" cy="394.4" r="1.3"/><circle cx="252.8" cy="415.1" r="1.3"/><circle cx="252.9" cy="425.9" r="1.3"/><circle cx="287.9" cy="451.1" r="1.3"/><circle cx="385.2" cy="562.5" r="1.3"/><circle cx="393.1" cy="554.8" r="1.3"/><circle cx="440.7" cy="438.3" r="1.3"/><circle cx="433" cy="430.4" r="1.3"/><circle cx="387.2" cy="598.9" r="1.3"/><circle cx="274" cy="438.9" r="1.3"/><circle cx="488.4" cy="574.7" r="1.3"/><circle cx="421.3" cy="364.4" r="1.3"/><circle cx="426.3" cy="356" r="1.3"/><circle cx="352.2" cy="438.6" r="1.3"/><circle cx="313.6" cy="625.2" r="1.3"/><circle cx="305.8" cy="630.6" r="1.3"/><circle cx="486.6" cy="368.9" r="1.3"/><circle cx="481.4" cy="378.7" r="1.3"/><circle cx="325.1" cy="634.6" r="1.3"/><circle cx="314" cy="634.3" r="1.3"/><circle cx="438.8" cy="358.4" r="1.3"/><circle cx="445.4" cy="365.9" r="1.3"/><circle cx="324.9" cy="464.8" r="1.3"/><circle cx="306.8" cy="431.4" r="1.3"/><circle cx="453.7" cy="518.2" r="1.3"/><circle cx="326.6" cy="377.2" r="1.3"/><circle cx="316.5" cy="378.2" r="1.3"/><circle cx="284.1" cy="488.6" r="1.3"/><circle cx="506" cy="577.5" r="1.3"/><circle cx="498.5" cy="579.9" r="1.3"/><circle cx="342.9" cy="365.5" r="1.3"/><circle cx="336.4" cy="358.1" r="1.3"/><circle cx="497.4" cy="425.9" r="1.3"/><circle cx="503.1" cy="430.7" r="1.3"/><circle cx="323.4" cy="591.3" r="1.3"/><circle cx="236.4" cy="494.1" r="1.3"/><circle cx="242.4" cy="487.5" r="1.3"/><circle cx="269" cy="372.4" r="1.3"/><circle cx="264.6" cy="501.6" r="1.3"/><circle cx="430.6" cy="522.6" r="1.3"/><circle cx="431.3" cy="512.4" r="1.3"/><circle cx="486.2" cy="405.9" r="1.3"/><circle cx="238.2" cy="615.9" r="1.3"/><circle cx="381.8" cy="568.1" r="1.3"/><circle cx="386.6" cy="578" r="1.3"/><circle cx="226.5" cy="496.9" r="1.3"/><circle cx="239.1" cy="447.7" r="1.3"/><circle cx="329.6" cy="407" r="1.3"/><circle cx="347.8" cy="619.3" r="1.3"/><circle cx="338.3" cy="614.3" r="1.3"/><circle cx="464" cy="532.3" r="1.3"/><circle cx="272.5" cy="492.4" r="1.3"/><circle cx="324.1" cy="473" r="1.3"/><circle cx="492.4" cy="586.1" r="1.3"/><circle cx="501.3" cy="579.4" r="1.3"/><circle cx="255.4" cy="566" r="1.3"/><circle cx="493" cy="634.4" r="1.3"/><circle cx="499.7" cy="629.5" r="1.3"/><circle cx="468.4" cy="366.2" r="1.3"/><circle cx="471.2" cy="356" r="1.3"/><circle cx="469.4" cy="426.6" r="1.3"/><circle cx="317.9" cy="511.6" r="1.3"/><circle cx="263.8" cy="607.8" r="1.3"/><circle cx="236.8" cy="454.5" r="1.3"/><circle cx="460.7" cy="587.9" r="1.3"/><circle cx="485" cy="584.2" r="1.3"/><circle cx="402.6" cy="592.2" r="1.3"/><circle cx="452.5" cy="356" r="1.3"/></g>
<path d="M492.6 556.7L489.6 555.1M492.6 556.7L492.5 559.5M454.3 610.8L453.5 613.4M454.3 610.8L452.2 611.3M257.8 515.1L256.8 517.8M257.8 515.1L256.8 512.3M465.8 637L468.3 638.7M465.8 637L466.5 637.6M445.1 534.9L446.9 534.6M445.1 534.9L445.6 538.2M417.5 409.3L415.5 412.2M417.5 409.3L417 408.6M393.3 500.2L392.8 501.5M393.3 500.2L394.9 502.8M325.8 548.4L323.5 547.8M325.8 548.4L324.9 551.5M427.8 435L427.7 436.1M427.8 435L428.7 431.6M273.9 620.7L273.6 617.2M273.9 620.7L274.8 621.3M226.4 486.6L224.5 487M226.4 486.6L229.1 488.9M387.4 543.1L388.3 544.3M387.4 543.1L388.9 540M225.1 410.8L226.5 407.6M225.1 410.8L223.3 411.5M326 633.6L326.5 636.9M326 633.6L323.4 632.5M441.3 599.4L443.6 596.8M441.3 599.4L442.5 601.5M502.8 517.8L504.4 516.1M502.8 517.8L501.4 515.3M432.4 602L431.8 598.9M432.4 602L430.9 601.8M450.9 504.6L451.7 507.9M450.9 504.6L453.2 503.5M393 410L392.1 407M393 410L395.1 411.6M431.5 454.1L428.8 455.7M431.5 454.1L433 456.6M444.7 562L447.6 560.6M444.7 562L444.8 561M375.7 372.8L378.2 371.5M375.7 372.8L373.7 374.7M472.4 478L472.7 476.2M472.4 478L475.4 477.4M422.3 414.6L423.9 417.7M422.3 414.6L419.7 414.9M291.2 362.1L294.3 363.6M291.2 362.1L290 360.8M502.6 495L500.9 492.1M502.6 495L500 497.1M502.1 460.3L501.9 459.3M502.1 460.3L502.4 457.3M225.7 490.5L227.3 493.6M225.7 490.5L223.1 490.4M265.4 618.5L267.4 620.3M265.4 618.5L263.5 616.3M322.8 606.6L323.9 603.5M322.8 606.6L319.9 605.8M312.3 375.7L314.9 373.3M312.3 375.7L310.1 374.8M493.6 607.1L490.7 606.3M493.6 607.1L492.8 606.3M502.4 545.1L500.6 547.2M502.4 545.1L504.2 546.5M224.5 481.5L226.5 480.1M224.5 481.5L225 485M332.1 365.6L334.6 363.5M332.1 365.6L329.1 364.3M345.3 485.3L347.3 487.6M345.3 485.3L347.7 483.4M297.4 562.1L297.1 558.8M297.4 562.1L298 561.8M430 499.6L433.2 499M430 499.6L428.1 500.3M375.8 626L377.8 628.9M375.8 626L375.8 625.6M304 459.4L306.8 460.5M304 459.4L305.2 456.6M257.2 540L256.1 540.6M257.2 540L256.8 536.6M300.8 635.9L297.4 635.2M300.8 635.9L301.2 638.2M362.5 546.7L363.8 544.6M362.5 546.7L360.4 548.9M398.5 552.9L396.8 549.9M398.5 552.9L396.4 555.2M340.2 527.4L338.2 530.1M340.2 527.4L340 527.4M472.2 501.4L475.6 501.8M472.2 501.4L472.1 498.8M500.7 532L501.6 530.4M500.7 532L499.4 535.1M401.7 626.2L398.6 624.7M401.7 626.2L403.4 626M468.6 559.9L465.7 559.9M468.6 559.9L469.3 556.5M233.2 573.8L232 574M233.2 573.8L236.7 573.9M355.7 577.9L357.5 576.6M355.7 577.9L355.2 575.1M355.5 518.7L353.5 516M355.5 518.7L356.9 519.9M365.9 522.8L365.5 525.4M365.9 522.8L366 519.9M362.3 431.1L361.6 429.8M362.3 431.1L359.8 433.5M365.8 507.3L366.1 504.1M365.8 507.3L366.7 509.4M502.8 577.4L502.1 574.9M502.8 577.4L503.3 575.8M231.6 589.8L233.7 587.1M231.6 589.8L228.9 589.4M225.2 530.6L224.7 529.9M225.2 530.6L225.6 534M406.5 574.6L406.6 572.4M406.5 574.6L406.8 577.8M473.9 538.8L474.5 537.3M473.9 538.8L476.2 537.4M321.4 595.7L321 595.1M321.4 595.7L319.4 593.4M444.8 551L444.3 551.2M444.8 551L446.8 548.2M224.3 612.2L222.1 610.4M224.3 612.2L225.6 611.2M239.3 476.7L239.4 473.5M239.3 476.7L237.4 478.6M228.2 479.2L225.2 477.3M228.2 479.2L229.9 477.8M265 548.4L262.6 550.9M265 548.4L265.9 548.8M371.8 472.1L374.5 473.1M371.8 472.1L371.3 474.8M247.5 594.9L246.4 591.7M247.5 594.9L244.7 596.5M482.5 433.6L484.3 435.1M482.5 433.6L481.6 430.5M293.2 360.8L290.2 359.5M293.2 360.8L295.7 358.5M389.5 373L391.3 375.1M389.5 373L387.3 371.3M354.3 445.5L354.8 448.1M354.3 445.5L356.8 445.9M228 636.7L227.8 635.5M228 636.7L229.3 634.1M417.7 465.5L418.6 462.2M417.7 465.5L420.7 467.1M470.9 493.9L472.9 492.6M470.9 493.9L472.2 497.1M405.8 473.5L405.3 472.1M405.8 473.5L405.8 470.7M334.9 503.2L334.5 500.2M334.9 503.2L337.7 502.6M312 389.6L310.6 386.4M312 389.6L315.4 388.9M463.9 604.6L464.5 602.7M463.9 604.6L463.8 607.9M251.6 542.5L254.7 543.3M251.6 542.5L250.3 540M490.1 466.6L487.3 468M490.1 466.6L489.8 467.6M252.7 378.5L251.3 376M252.7 378.5L255.6 379.5M382 360.2L383.5 358.1M382 360.2L379 359.4M236.5 587.3L234.5 584.9M236.5 587.3L234.3 589.5M244.7 400.1L244.5 396.6M244.7 400.1L243 400.5M482.1 547L483.1 549.8M482.1 547L478.6 547.1M417.8 515.3L420.9 514.3M417.8 515.3L415.5 514.4M413.6 522L415.6 522.4M413.6 522L411.9 519M346.7 561.3L346.3 558.4M346.7 561.3L349.2 560.5M433.9 428.2L437.3 428.8M433.9 428.2L432.6 431.2M229.1 497.8L227.4 494.7M229.1 497.8L231 497.8M339.9 492.4L342.8 493.4M339.9 492.4L341 490M224.5 587.1L226.3 589.5M224.5 587.1L222.3 588.6M486.6 553.7L483.4 552.5M486.6 553.7L486.7 556.6M303.7 534.5L303.9 533M303.7 534.5L300.5 533.7M223.7 557L224.4 560M223.7 557L222.7 557.7M345.7 389.2L343.6 390.9M345.7 389.2L348.4 388.3M286.6 485.1L289.3 483.1M286.6 485.1L284 484.4M227.9 565.2L227.1 565.7M227.9 565.2L231.3 564.5M387 520.6L386.1 519.8M387 520.6L386.7 517.7M477.8 610.6L480 612.5M477.8 610.6L476 608.6M455.7 476.5L456.8 475.3M455.7 476.5L452.4 477.6M401.8 615L403.8 617.9M401.8 615L398.7 616.2M473.9 583.9L471.3 585.3M473.9 583.9L474.3 586M488.7 427.1L490.3 426M488.7 427.1L488.6 430.6M247.6 550.5L246.8 548.9M247.6 550.5L250.5 548.9M258 591.2L256.1 593.2M258 591.2L260.2 593.5M460.7 636L460.2 636.4M460.7 636L461.4 638.3M480.8 423.9L483.5 422.4M480.8 423.9L479.7 426.4M287.4 551.8L290.3 550.4M287.4 551.8L287.2 550.4M248 562.8L249.2 559.7M248 562.8L250.3 563.8M365.5 359.4L367.8 359.1M365.5 359.4L362.3 359.5M482.4 507.3L478.9 506.9M482.4 507.3L483.1 509.8M423.7 447.1L426.5 447.2M423.7 447.1L421.2 448.9M333.4 373.7L333.3 370.5M333.4 373.7L331.3 373.6M400.7 460.1L401.5 457.3M400.7 460.1L398.3 461.8M270.9 482.9L269.3 479.8M270.9 482.9L270.4 484.4M294.8 471.3L292.7 474.1M294.8 471.3L296.8 472M235 637.2L232 635.6M235 637.2L236.6 635.2M452.5 548L455.2 550.2M452.5 548L453.7 544.9M450.4 535.6L453.2 537.7M450.4 535.6L449.4 535.1M309.2 502.4L307.4 503M309.2 502.4L307.5 504.3M254.5 503.5L256.4 502.3M254.5 503.5L256.8 505.5M502.2 488.6L503.9 491.6M502.2 488.6L498.8 489.4M275.2 629.6L273.8 629M275.2 629.6L273.8 627.2M432.3 537.7L430.3 537.1M432.3 537.7L430 538.9M478.3 637.2L481.5 638.5M478.3 637.2L478.9 634.6M325.8 557.4L323 559.3M325.8 557.4L325.3 554.3M384.6 464.5L384.8 461.3M384.6 464.5L387.1 466.4M251 513.1L249.4 514.7M251 513.1L249.5 509.9M465.4 544.8L462.2 545.4M465.4 544.8L467.5 545M275.3 480.7L274.9 483.1M275.3 480.7L278.2 479M382.9 624.4L381.1 627.1M382.9 624.4L382.3 624.1M362.9 402.9L360.2 401.4M362.9 402.9L363.9 400.5M257.3 504.6L260.1 504M257.3 504.6L257.1 508.1M238.8 506.1L237.4 503.4M238.8 506.1L239 508.6M381.9 438.1L383.1 441.4M381.9 438.1L379.3 438.7M501.2 587.4L503.6 588.7M501.2 587.4L499.3 590.1M251.4 461.4L251.5 460.5M251.4 461.4L248 461.7M451.1 513.3L452.2 515.6M451.1 513.3L453 514M378.6 501.3L380.9 498.8M378.6 501.3L375.9 500.9M386.9 420.5L384.3 418.5M386.9 420.5L389.9 418.8M322.5 404.6L323.9 405M322.5 404.6L325.2 405M377 533.6L374.8 534.8M377 533.6L377.7 530.3M491.4 580.2L490.3 582.7M491.4 580.2L494.9 580.6M501.4 369.9L499.9 368.1M501.4 369.9L499 370M491.8 625.1L490.6 626.3M491.8 625.1L489.5 626.3M444.7 451.2L443.9 453.7M444.7 451.2L442.9 452M307 479.6L304.1 479M307 479.6L309.6 479.7M297.3 362.1L298.2 365.4M297.3 362.1L298.4 361.6" stroke="#d84040" stroke-width="0.8" fill="none"/>
<path d="M489.6 555.1L486.5 553.5M492.5 559.5L492.3 562.4M453.5 613.4L452.7 616M452.2 611.3L450.1 611.7M256.8 517.8L255.8 520.5M256.8 512.3L255.7 509.4M468.3 638.7L470.7 640.5M466.5 637.6L467.2 638.2M446.9 534.6L448.8 534.3M445.6 538.2L446.2 541.5M415.5 412.2L413.5 415M417 408.6L416.6 407.9M392.8 501.5L392.3 502.7M394.9 502.8L396.5 505.3M323.5 547.8L321.1 547.1M324.9 551.5L324 554.7M427.7 436.1L427.6 437.2M428.7 431.6L429.6 428.3M273.6 617.2L273.4 613.8M274.8 621.3L275.8 622M224.5 487L222.6 487.3M229.1 488.9L231.7 491.1M388.3 544.3L389.2 545.5M388.9 540L390.5 536.9M226.5 407.6L227.9 404.5M223.3 411.5L221.4 412.2M326.5 636.9L326.9 640.3M323.4 632.5L320.9 631.4M443.6 596.8L445.9 594.2M442.5 601.5L443.7 603.6M504.4 516.1L506 514.3M501.4 515.3L500.1 512.8M431.8 598.9L431.3 595.9M430.9 601.8L429.3 601.5M451.7 507.9L452.5 511.3M453.2 503.5L455.5 502.4M392.1 407L391.2 404M395.1 411.6L397.1 413.3M428.8 455.7L426 457.3M433 456.6L434.5 459.1M447.6 560.6L450.5 559.2M444.8 561L444.9 560.1M378.2 371.5L380.8 370.1M373.7 374.7L371.7 376.5M472.7 476.2L472.9 474.4M475.4 477.4L478.5 476.8M423.9 417.7L425.5 420.8M419.7 414.9L417.1 415.2M294.3 363.6L297.3 365.2M290 360.8L288.7 359.6M500.9 492.1L499.3 489.1M500 497.1L497.5 499.2M501.9 459.3L501.8 458.2M502.4 457.3L502.8 454.4M227.3 493.6L228.9 496.6M223.1 490.4L220.5 490.3M267.4 620.3L269.4 622.2M263.5 616.3L261.7 614.2M323.9 603.5L325.1 600.3M319.9 605.8L317 605.1M314.9 373.3L317.4 370.9M310.1 374.8L307.9 373.8M490.7 606.3L487.8 605.4M492.8 606.3L492 605.4M500.6 547.2L498.7 549.4M504.2 546.5L506 548M226.5 480.1L228.5 478.6M225 485L225.5 488.4M334.6 363.5L337 361.5M329.1 364.3L326.1 363.1M347.3 487.6L349.2 489.9M347.7 483.4L350 481.6M297.1 558.8L296.9 555.5M298 561.8L298.6 561.4M433.2 499L436.4 498.4M428.1 500.3L426.2 501M377.8 628.9L379.8 631.7M375.8 625.6L375.7 625.2M306.8 460.5L309.5 461.6M305.2 456.6L306.4 453.8M256.1 540.6L254.9 541.1M256.8 536.6L256.3 533.2M297.4 635.2L294 634.4M301.2 638.2L301.5 640.5M363.8 544.6L365 542.6M360.4 548.9L358.3 551.2M396.8 549.9L395 546.9M396.4 555.2L394.3 557.5M338.2 530.1L336.2 532.7M340 527.4L339.7 527.5M475.6 501.8L479 502.2M472.1 498.8L472 496.1M501.6 530.4L502.5 528.9M499.4 535.1L498.1 538.2M398.6 624.7L395.4 623.3M403.4 626L405.1 625.9M465.7 559.9L462.7 559.9M469.3 556.5L469.9 553.1M232 574L230.7 574.2M236.7 573.9L240.2 573.9M357.5 576.6L359.4 575.4M355.2 575.1L354.7 572.3M353.5 516L351.4 513.4M356.9 519.9L358.4 521.1M365.5 525.4L365 527.9M366 519.9L366.1 516.9M361.6 429.8L360.9 428.5M359.8 433.5L357.3 435.9M366.1 504.1L366.4 500.8M366.7 509.4L367.6 511.5M502.1 574.9L501.3 572.3M503.3 575.8L503.8 574.1M233.7 587.1L235.8 584.4M228.9 589.4L226.1 589M224.7 529.9L224.3 529.3M225.6 534L226 537.5M406.6 572.4L406.7 570.2M406.8 577.8L407.1 580.9M474.5 537.3L475.2 535.7M476.2 537.4L478.5 536M321 595.1L320.6 594.6M319.4 593.4L317.3 591M444.3 551.2L443.8 551.5M446.8 548.2L448.7 545.3M222.1 610.4L220 608.6M225.6 611.2L227 610.1M239.4 473.5L239.5 470.3M237.4 478.6L235.4 480.5M225.2 477.3L222.2 475.5M229.9 477.8L231.7 476.5M262.6 550.9L260.2 553.5M265.9 548.8L266.9 549.2M374.5 473.1L377.1 474.1M371.3 474.8L370.7 477.5M246.4 591.7L245.2 588.5M244.7 596.5L242 598M484.3 435.1L486.2 436.6M481.6 430.5L480.8 427.3M290.2 359.5L287.2 358.2M295.7 358.5L298.1 356.1M391.3 375.1L393 377.2M387.3 371.3L385 369.5M354.8 448.1L355.3 450.8M356.8 445.9L359.3 446.4M227.8 635.5L227.7 634.2M229.3 634.1L230.7 631.5M418.6 462.2L419.5 458.8M420.7 467.1L423.7 468.8M472.9 492.6L474.8 491.3M472.2 497.1L473.6 500.3M405.3 472.1L404.7 470.7M405.8 470.7L405.8 468M334.5 500.2L334 497.3M337.7 502.6L340.5 502M310.6 386.4L309.2 383.3M315.4 388.9L318.8 388.3M464.5 602.7L465.2 600.7M463.8 607.9L463.8 611.2M254.7 543.3L257.9 544M250.3 540L249.1 537.5M487.3 468L484.4 469.3M489.8 467.6L489.5 468.6M251.3 376L249.9 373.4M255.6 379.5L258.5 380.4M383.5 358.1L384.9 356M379 359.4L376 358.6M234.5 584.9L232.4 582.4M234.3 589.5L232.1 591.7M244.5 396.6L244.4 393.2M243 400.5L241.3 400.9M483.1 549.8L484.2 552.6M478.6 547.1L475.1 547.2M420.9 514.3L424 513.2M415.5 514.4L413.3 513.6M415.6 522.4L417.5 522.8M411.9 519L410.1 516M346.3 558.4L346 555.5M349.2 560.5L351.7 559.7M437.3 428.8L440.7 429.4M432.6 431.2L431.3 434.2M227.4 494.7L225.6 491.7M231 497.8L232.9 497.7M342.8 493.4L345.6 494.4M341 490L342.1 487.6M226.3 589.5L228 591.9M222.3 588.6L220 590.2M483.4 552.5L480.2 551.2M486.7 556.6L486.8 559.5M303.9 533L304.2 531.5M300.5 533.7L297.3 533M224.4 560L225.2 563.1M222.7 557.7L221.6 558.5M343.6 390.9L341.4 392.6M348.4 388.3L351.1 387.3M289.3 483.1L291.9 481.2M284 484.4L281.3 483.7M227.1 565.7L226.3 566.3M231.3 564.5L234.8 563.9M386.1 519.8L385.2 518.9M386.7 517.7L386.3 514.7M480 612.5L482.3 614.3M476 608.6L474.3 606.7M456.8 475.3L458 474.1M452.4 477.6L449.2 478.7M403.8 617.9L405.8 620.7M398.7 616.2L395.6 617.5M471.3 585.3L468.7 586.7M474.3 586L474.6 588.2M490.3 426L492 424.8M488.6 430.6L488.5 434M246.8 548.9L245.9 547.4M250.5 548.9L253.5 547.3M256.1 593.2L254.1 595.1M260.2 593.5L262.3 595.8M460.2 636.4L459.7 636.8M461.4 638.3L462.2 640.5M483.5 422.4L486.1 420.9M479.7 426.4L478.5 428.8M290.3 550.4L293.2 549.1M287.2 550.4L287.1 549M249.2 559.7L250.4 556.6M250.3 563.8L252.6 564.8M367.8 359.1L370.1 358.8M362.3 359.5L359.2 359.6M478.9 506.9L475.5 506.5M483.1 509.8L483.9 512.2M426.5 447.2L429.3 447.3M421.2 448.9L418.8 450.7M333.3 370.5L333.1 367.3M331.3 373.6L329.1 373.4M401.5 457.3L402.3 454.5M398.3 461.8L395.9 463.5M269.3 479.8L267.7 476.7M270.4 484.4L270 486M292.7 474.1L290.5 476.9M296.8 472L298.8 472.7M232 635.6L229 634M236.6 635.2L238.2 633.2M455.2 550.2L457.9 552.3M453.7 544.9L454.9 541.8M453.2 537.7L456 539.7M449.4 535.1L448.4 534.5M307.4 503L305.7 503.6M307.5 504.3L305.8 506.3M256.4 502.3L258.3 501.1M256.8 505.5L259 507.4M503.9 491.6L505.5 494.7M498.8 489.4L495.4 490.3M273.8 629L272.3 628.4M273.8 627.2L272.3 624.9M430.3 537.1L428.3 536.5M430 538.9L427.8 540.1M481.5 638.5L484.7 639.7M478.9 634.6L479.5 632M323 559.3L320.1 561.2M325.3 554.3L324.8 551.2M384.8 461.3L385 458.1M387.1 466.4L389.6 468.2M249.4 514.7L247.8 516.4M249.5 509.9L248 506.8M462.2 545.4L459 546M467.5 545L469.7 545.2M274.9 483.1L274.5 485.4M278.2 479L281.2 477.3M381.1 627.1L379.2 629.9M382.3 624.1L381.6 623.8M360.2 401.4L357.5 399.9M363.9 400.5L364.8 398.1M260.1 504L262.9 503.4M257.1 508.1L256.9 511.6M237.4 503.4L236 500.6M239 508.6L239.2 511.1M383.1 441.4L384.3 444.6M379.3 438.7L376.8 439.2M503.6 588.7L506 590.1M499.3 590.1L497.4 592.9M251.5 460.5L251.5 459.6M248 461.7L244.6 461.9M452.2 515.6L453.3 518M453 514L454.9 514.7M380.9 498.8L383.1 496.3M375.9 500.9L373.2 500.5M384.3 418.5L381.8 416.5M389.9 418.8L392.8 417.1M323.9 405L325.4 405.4M325.2 405L327.8 405.4M374.8 534.8L372.7 536M377.7 530.3L378.4 527M490.3 582.7L489.3 585.2M494.9 580.6L498.4 581M499.9 368.1L498.4 366.3M499 370L496.6 370M490.6 626.3L489.4 627.4M489.5 626.3L487.2 627.5M443.9 453.7L443.1 456.2M442.9 452L441 452.7M304.1 479L301.2 478.3M309.6 479.7L312.1 479.9M298.2 365.4L299.2 368.7M298.4 361.6L299.5 361.2" stroke="#d8d8d8" stroke-width="0.7" fill="none"/>
<g fill="url(#hg)"><circle cx="452.7" cy="616" r="1.3"/><circle cx="470.7" cy="640.5" r="1.3"/><circle cx="446.2" cy="541.5" r="1.3"/><circle cx="416.6" cy="407.9" r="1.3"/><circle cx="396.5" cy="505.3" r="1.3"/><circle cx="324" cy="554.7" r="1.3"/><circle cx="275.8" cy="622" r="1.3"/><circle cx="221.4" cy="412.2" r="1.3"/><circle cx="500.1" cy="512.8" r="1.3"/><circle cx="431.3" cy="595.9" r="1.3"/><circle cx="434.5" cy="459.1" r="1.3"/><circle cx="444.9" cy="560.1" r="1.3"/><circle cx="380.8" cy="370.1" r="1.3"/><circle cx="371.7" cy="376.5" r="1.3"/><circle cx="478.5" cy="476.8" r="1.3"/><circle cx="417.1" cy="415.2" r="1.3"/><circle cx="297.3" cy="365.2" r="1.3"/><circle cx="288.7" cy="359.6" r="1.3"/><circle cx="497.5" cy="499.2" r="1.3"/><circle cx="502.8" cy="454.4" r="1.3"/><circle cx="220.5" cy="490.3" r="1.3"/><circle cx="269.4" cy="622.2" r="1.3"/><circle cx="261.7" cy="614.2" r="1.3"/><circle cx="325.1" cy="600.3" r="1.3"/><circle cx="492" cy="605.4" r="1.3"/><circle cx="349.2" cy="489.9" r="1.3"/><circle cx="296.9" cy="555.5" r="1.3"/><circle cx="306.4" cy="453.8" r="1.3"/><circle cx="336.2" cy="532.7" r="1.3"/><circle cx="479" cy="502.2" r="1.3"/><circle cx="462.7" cy="559.9" r="1.3"/><circle cx="230.7" cy="574.2" r="1.3"/><circle cx="354.7" cy="572.3" r="1.3"/><circle cx="365" cy="527.9" r="1.3"/><circle cx="366.1" cy="516.9" r="1.3"/><circle cx="366.4" cy="500.8" r="1.3"/><circle cx="367.6" cy="511.5" r="1.3"/><circle cx="501.3" cy="572.3" r="1.3"/><circle cx="235.8" cy="584.4" r="1.3"/><circle cx="226.1" cy="589" r="1.3"/><circle cx="475.2" cy="535.7" r="1.3"/><circle cx="317.3" cy="591" r="1.3"/><circle cx="231.7" cy="476.5" r="1.3"/><circle cx="370.7" cy="477.5" r="1.3"/><circle cx="245.2" cy="588.5" r="1.3"/><circle cx="287.2" cy="358.2" r="1.3"/><circle cx="298.1" cy="356.1" r="1.3"/><circle cx="393" cy="377.2" r="1.3"/><circle cx="385" cy="369.5" r="1.3"/><circle cx="355.3" cy="450.8" r="1.3"/><circle cx="230.7" cy="631.5" r="1.3"/><circle cx="405.8" cy="468" r="1.3"/><circle cx="340.5" cy="502" r="1.3"/><circle cx="465.2" cy="600.7" r="1.3"/><circle cx="463.8" cy="611.2" r="1.3"/><circle cx="257.9" cy="544" r="1.3"/><circle cx="249.1" cy="537.5" r="1.3"/><circle cx="489.5" cy="468.6" r="1.3"/><circle cx="249.9" cy="373.4" r="1.3"/><circle cx="258.5" cy="380.4" r="1.3"/><circle cx="232.4" cy="582.4" r="1.3"/><circle cx="417.5" cy="522.8" r="1.3"/><circle cx="351.7" cy="559.7" r="1.3"/><circle cx="431.3" cy="434.2" r="1.3"/><circle cx="342.1" cy="487.6" r="1.3"/><circle cx="228" cy="591.9" r="1.3"/><circle cx="297.3" cy="533" r="1.3"/><circle cx="225.2" cy="563.1" r="1.3"/><circle cx="291.9" cy="481.2" r="1.3"/><circle cx="281.3" cy="483.7" r="1.3"/><circle cx="226.3" cy="566.3" r="1.3"/><circle cx="385.2" cy="518.9" r="1.3"/><circle cx="395.6" cy="617.5" r="1.3"/><circle cx="474.6" cy="588.2" r="1.3"/><circle cx="245.9" cy="547.4" r="1.3"/><circle cx="254.1" cy="595.1" r="1.3"/><circle cx="459.7" cy="636.8" r="1.3"/><circle cx="486.1" cy="420.9" r="1.3"/><circle cx="478.5" cy="428.8" r="1.3"/><circle cx="293.2" cy="549.1" r="1.3"/><circle cx="250.4" cy="556.6" r="1.3"/><circle cx="483.9" cy="512.2" r="1.3"/><circle cx="333.1" cy="367.3" r="1.3"/><circle cx="298.8" cy="472.7" r="1.3"/><circle cx="454.9" cy="541.8" r="1.3"/><circle cx="305.8" cy="506.3" r="1.3"/><circle cx="259" cy="507.4" r="1.3"/><circle cx="272.3" cy="628.4" r="1.3"/><circle cx="427.8" cy="540.1" r="1.3"/><circle cx="484.7" cy="639.7" r="1.3"/><circle cx="385" cy="458.1" r="1.3"/><circle cx="389.6" cy="468.2" r="1.3"/><circle cx="381.6" cy="623.8" r="1.3"/><circle cx="357.5" cy="399.9" r="1.3"/><circle cx="262.9" cy="503.4" r="1.3"/><circle cx="236" cy="500.6" r="1.3"/><circle cx="239.2" cy="511.1" r="1.3"/><circle cx="384.3" cy="444.6" r="1.3"/><circle cx="506" cy="590.1" r="1.3"/><circle cx="251.5" cy="459.6" r="1.3"/><circle cx="453.3" cy="518" r="1.3"/><circle cx="325.4" cy="405.4" r="1.3"/><circle cx="372.7" cy="536" r="1.3"/><circle cx="378.4" cy="527" r="1.3"/><circle cx="496.6" cy="370" r="1.3"/><circle cx="487.2" cy="627.5" r="1.3"/><circle cx="443.1" cy="456.2" r="1.3"/><circle cx="301.2" cy="478.3" r="1.3"/><circle cx="312.1" cy="479.9" r="1.3"/><circle cx="299.2" cy="368.7" r="1.3"/></g>
<g fill="url(#og)"><circle cx="492.6" cy="556.7" r="3.4"/><circle cx="454.3" cy="610.8" r="3.4"/><circle cx="257.8" cy="515.1" r="3.4"/><circle cx="465.8" cy="637" r="3.4"/><circle cx="445.1" cy="534.9" r="3.4"/><circle cx="417.5" cy="409.3" r="3.4"/><circle cx="393.3" cy="500.2" r="3.4"/><circle cx="325.8" cy="548.4" r="3.4"/><circle cx="427.8" cy="435" r="3.4"/><circle cx="273.9" cy="620.7" r="3.4"/><circle cx="226.4" cy="486.6" r="3.4"/><circle cx="387.4" cy="543.1" r="3.4"/><circle cx="225.1" cy="410.8" r="3.4"/><circle cx="326" cy="633.6" r="3.4"/><circle cx="441.3" cy="599.4" r="3.4"/><circle cx="502.8" cy="517.8" r="3.4"/><circle cx="432.4" cy="602" r="3.4"/><circle cx="450.9" cy="504.6" r="3.4"/><circle cx="393" cy="410" r="3.4"/><circle cx="431.5" cy="454.1" r="3.4"/><circle cx="444.7" cy="562" r="3.4"/><circle cx="375.7" cy="372.8" r="3.4"/><circle cx="472.4" cy="478" r="3.4"/><circle cx="422.3" cy="414.6" r="3.4"/><circle cx="291.2" cy="362.1" r="3.4"/><circle cx="502.6" cy="495" r="3.4"/><circle cx="502.1" cy="460.3" r="3.4"/><circle cx="225.7" cy="490.5" r="3.4"/><circle cx="265.4" cy="618.5" r="3.4"/><circle cx="322.8" cy="606.6" r="3.4"/><circle cx="312.3" cy="375.7" r="3.4"/><circle cx="493.6" cy="607.1" r="3.4"/><circle cx="502.4" cy="545.1" r="3.4"/><circle cx="224.5" cy="481.5" r="3.4"/><circle cx="332.1" cy="365.6" r="3.4"/><circle cx="345.3" cy="485.3" r="3.4"/><circle cx="297.4" cy="562.1" r="3.4"/><circle cx="430" cy="499.6" r="3.4"/><circle cx="375.8" cy="626" r="3.4"/><circle cx="304" cy="459.4" r="3.4"/><circle cx="257.2" cy="540" r="3.4"/><circle cx="300.8" cy="635.9" r="3.4"/><circle cx="362.5" cy="546.7" r="3.4"/><circle cx="398.5" cy="552.9" r="3.4"/><circle cx="340.2" cy="527.4" r="3.4"/><circle cx="472.2" cy="501.4" r="3.4"/><circle cx="500.7" cy="532" r="3.4"/><circle cx="401.7" cy="626.2" r="3.4"/><circle cx="468.6" cy="559.9" r="3.4"/><circle cx="233.2" cy="573.8" r="3.4"/><circle cx="355.7" cy="577.9" r="3.4"/><circle cx="355.5" cy="518.7" r="3.4"/><circle cx="365.9" cy="522.8" r="3.4"/><circle cx="362.3" cy="431.1" r="3.4"/><circle cx="365.8" cy="507.3" r="3.4"/><circle cx="502.8" cy="577.4" r="3.4"/><circle cx="231.6" cy="589.8" r="3.4"/><circle cx="225.2" cy="530.6" r="3.4"/><circle cx="406.5" cy="574.6" r="3.4"/><circle cx="473.9" cy="538.8" r="3.4"/><circle cx="321.4" cy="595.7" r="3.4"/><circle cx="444.8" cy="551" r="3.4"/><circle cx="224.3" cy="612.2" r="3.4"/><circle cx="239.3" cy="476.7" r="3.4"/><circle cx="228.2" cy="479.2" r="3.4"/><circle cx="265" cy="548.4" r="3.4"/><circle cx="371.8" cy="472.1" r="3.4"/><circle cx="247.5" cy="594.9" r="3.4"/><circle cx="482.5" cy="433.6" r="3.4"/><circle cx="293.2" cy="360.8" r="3.4"/><circle cx="389.5" cy="373" r="3.4"/><circle cx="354.3" cy="445.5" r="3.4"/><circle cx="228" cy="636.7" r="3.4"/><circle cx="417.7" cy="465.5" r="3.4"/><circle cx="470.9" cy="493.9" r="3.4"/><circle cx="405.8" cy="473.5" r="3.4"/><circle cx="334.9" cy="503.2" r="3.4"/><circle cx="312" cy="389.6" r="3.4"/><circle cx="463.9" cy="604.6" r="3.4"/><circle cx="251.6" cy="542.5" r="3.4"/><circle cx="490.1" cy="466.6" r="3.4"/><circle cx="252.7" cy="378.5" r="3.4"/><circle cx="382" cy="360.2" r="3.4"/><circle cx="236.5" cy="587.3" r="3.4"/><circle cx="244.7" cy="400.1" r="3.4"/><circle cx="482.1" cy="547" r="3.4"/><circle cx="417.8" cy="515.3" r="3.4"/><circle cx="413.6" cy="522" r="3.4"/><circle cx="346.7" cy="561.3" r="3.4"/><circle cx="433.9" cy="428.2" r="3.4"/><circle cx="229.1" cy="497.8" r="3.4"/><circle cx="339.9" cy="492.4" r="3.4"/><circle cx="224.5" cy="587.1" r="3.4"/><circle cx="486.6" cy="553.7" r="3.4"/><circle cx="303.7" cy="534.5" r="3.4"/><circle cx="223.7" cy="557" r="3.4"/><circle cx="345.7" cy="389.2" r="3.4"/><circle cx="286.6" cy="485.1" r="3.4"/><circle cx="227.9" cy="565.2" r="3.4"/><circle cx="387" cy="520.6" r="3.4"/><circle cx="477.8" cy="610.6" r="3.4"/><circle cx="455.7" cy="476.5" r="3.4"/><circle cx="401.8" cy="615" r="3.4"/><circle cx="473.9" cy="583.9" r="3.4"/><circle cx="488.7" cy="427.1" r="3.4"/><circle cx="247.6" cy="550.5" r="3.4"/><circle cx="258" cy="591.2" r="3.4"/><circle cx="460.7" cy="636" r="3.4"/><circle cx="480.8" cy="423.9" r="3.4"/><circle cx="287.4" cy="551.8" r="3.4"/><circle cx="248" cy="562.8" r="3.5"/><circle cx="365.5" cy="359.4" r="3.5"/><circle cx="482.4" cy="507.3" r="3.5"/><circle cx="423.7" cy="447.1" r="3.5"/><circle cx="333.4" cy="373.7" r="3.5"/><circle cx="400.7" cy="460.1" r="3.5"/><circle cx="270.9" cy="482.9" r="3.5"/><circle cx="294.8" cy="471.3" r="3.5"/><circle cx="235" cy="637.2" r="3.5"/><circle cx="452.5" cy="548" r="3.5"/><circle cx="450.4" cy="535.6" r="3.5"/><circle cx="309.2" cy="502.4" r="3.5"/><circle cx="254.5" cy="503.5" r="3.5"/><circle cx="502.2" cy="488.6" r="3.5"/><circle cx="275.2" cy="629.6" r="3.5"/><circle cx="432.3" cy="537.7" r="3.5"/><circle cx="478.3" cy="637.2" r="3.5"/><circle cx="325.8" cy="557.4" r="3.5"/><circle cx="384.6" cy="464.5" r="3.5"/><circle cx="251" cy="513.1" r="3.5"/><circle cx="465.4" cy="544.8" r="3.5"/><circle cx="275.3" cy="480.7" r="3.5"/><circle cx="382.9" cy="624.4" r="3.5"/><circle cx="362.9" cy="402.9" r="3.5"/><circle cx="257.3" cy="504.6" r="3.5"/><circle cx="238.8" cy="506.1" r="3.5"/><circle cx="381.9" cy="438.1" r="3.5"/><circle cx="501.2" cy="587.4" r="3.5"/><circle cx="251.4" cy="461.4" r="3.5"/><circle cx="451.1" cy="513.3" r="3.5"/><circle cx="378.6" cy="501.3" r="3.5"/><circle cx="386.9" cy="420.5" r="3.5"/><circle cx="322.5" cy="404.6" r="3.5"/><circle cx="377" cy="533.6" r="3.5"/><circle cx="491.4" cy="580.2" r="3.5"/><circle cx="501.4" cy="369.9" r="3.5"/><circle cx="491.8" cy="625.1" r="3.5"/><circle cx="444.7" cy="451.2" r="3.5"/><circle cx="307" cy="479.6" r="3.5"/><circle cx="297.3" cy="362.1" r="3.5"/></g>
<g fill="url(#hg)"><circle cx="486.5" cy="553.5" r="1.3"/><circle cx="492.3" cy="562.4" r="1.3"/><circle cx="450.1" cy="611.7" r="1.3"/><circle cx="255.8" cy="520.5" r="1.3"/><circle cx="255.7" cy="509.4" r="1.3"/><circle cx="467.2" cy="638.2" r="1.3"/><circle cx="448.8" cy="534.3" r="1.3"/><circle cx="413.5" cy="415" r="1.3"/><circle cx="392.3" cy="502.7" r="1.3"/><circle cx="321.1" cy="547.1" r="1.3"/><circle cx="427.6" cy="437.2" r="1.3"/><circle cx="429.6" cy="428.3" r="1.3"/><circle cx="273.4" cy="613.8" r="1.3"/><circle cx="222.6" cy="487.3" r="1.3"/><circle cx="231.7" cy="491.1" r="1.3"/><circle cx="389.2" cy="545.5" r="1.3"/><circle cx="390.5" cy="536.9" r="1.3"/><circle cx="227.9" cy="404.5" r="1.3"/><circle cx="326.9" cy="640.3" r="1.3"/><circle cx="320.9" cy="631.4" r="1.3"/><circle cx="445.9" cy="594.2" r="1.3"/><circle cx="443.7" cy="603.6" r="1.3"/><circle cx="506" cy="514.3" r="1.3"/><circle cx="429.3" cy="601.5" r="1.3"/><circle cx="452.5" cy="511.3" r="1.3"/><circle cx="455.5" cy="502.4" r="1.3"/><circle cx="391.2" cy="404" r="1.3"/><circle cx="397.1" cy="413.3" r="1.3"/><circle cx="426" cy="457.3" r="1.3"/><circle cx="450.5" cy="559.2" r="1.3"/><circle cx="472.9" cy="474.4" r="1.3"/><circle cx="425.5" cy="420.8" r="1.3"/><circle cx="499.3" cy="489.1" r="1.3"/><circle cx="501.8" cy="458.2" r="1.3"/><circle cx="228.9" cy="496.6" r="1.3"/><circle cx="317" cy="605.1" r="1.3"/><circle cx="317.4" cy="370.9" r="1.3"/><circle cx="307.9" cy="373.8" r="1.3"/><circle cx="487.8" cy="605.4" r="1.3"/><circle cx="498.7" cy="549.4" r="1.3"/><circle cx="506" cy="548" r="1.3"/><circle cx="228.5" cy="478.6" r="1.3"/><circle cx="225.5" cy="488.4" r="1.3"/><circle cx="337" cy="361.5" r="1.3"/><circle cx="326.1" cy="363.1" r="1.3"/><circle cx="350" cy="481.6" r="1.3"/><circle cx="298.6" cy="561.4" r="1.3"/><circle cx="436.4" cy="498.4" r="1.3"/><circle cx="426.2" cy="501" r="1.3"/><circle cx="379.8" cy="631.7" r="1.3"/><circle cx="375.7" cy="625.2" r="1.3"/><circle cx="309.5" cy="461.6" r="1.3"/><circle cx="254.9" cy="541.1" r="1.3"/><circle cx="256.3" cy="533.2" r="1.3"/><circle cx="294" cy="634.4" r="1.3"/><circle cx="301.5" cy="640.5" r="1.3"/><circle cx="365" cy="542.6" r="1.3"/><circle cx="358.3" cy="551.2" r="1.3"/><circle cx="395" cy="546.9" r="1.3"/><circle cx="394.3" cy="557.5" r="1.3"/><circle cx="339.7" cy="527.5" r="1.3"/><circle cx="472" cy="496.1" r="1.3"/><circle cx="502.5" cy="528.9" r="1.3"/><circle cx="498.1" cy="538.2" r="1.3"/><circle cx="395.4" cy="623.3" r="1.3"/><circle cx="405.1" cy="625.9" r="1.3"/><circle cx="469.9" cy="553.1" r="1.3"/><circle cx="240.2" cy="573.9" r="1.3"/><circle cx="359.4" cy="575.4" r="1.3"/><circle cx="351.4" cy="513.4" r="1.3"/><circle cx="358.4" cy="521.1" r="1.3"/><circle cx="360.9" cy="428.5" r="1.3"/><circle cx="357.3" cy="435.9" r="1.3"/><circle cx="503.8" cy="574.1" r="1.3"/><circle cx="224.3" cy="529.3" r="1.3"/><circle cx="226" cy="537.5" r="1.3"/><circle cx="406.7" cy="570.2" r="1.3"/><circle cx="407.1" cy="580.9" r="1.3"/><circle cx="478.5" cy="536" r="1.3"/><circle cx="320.6" cy="594.6" r="1.3"/><circle cx="443.8" cy="551.5" r="1.3"/><circle cx="448.7" cy="545.3" r="1.3"/><circle cx="220" cy="608.6" r="1.3"/><circle cx="227" cy="610.1" r="1.3"/><circle cx="239.5" cy="470.3" r="1.3"/><circle cx="235.4" cy="480.5" r="1.3"/><circle cx="222.2" cy="475.5" r="1.3"/><circle cx="260.2" cy="553.5" r="1.3"/><circle cx="266.9" cy="549.2" r="1.3"/><circle cx="377.1" cy="474.1" r="1.3"/><circle cx="242" cy="598" r="1.3"/><circle cx="486.2" cy="436.6" r="1.3"/><circle cx="480.8" cy="427.3" r="1.3"/><circle cx="359.3" cy="446.4" r="1.3"/><circle cx="227.7" cy="634.2" r="1.3"/><circle cx="419.5" cy="458.8" r="1.3"/><circle cx="423.7" cy="468.8" r="1.3"/><circle cx="474.8" cy="491.3" r="1.3"/><circle cx="473.6" cy="500.3" r="1.3"/><circle cx="404.7" cy="470.7" r="1.3"/><circle cx="334" cy="497.3" r="1.3"/><circle cx="309.2" cy="383.3" r="1.3"/><circle cx="318.8" cy="388.3" r="1.3"/><circle cx="484.4" cy="469.3" r="1.3"/><circle cx="384.9" cy="356" r="1.3"/><circle cx="376" cy="358.6" r="1.3"/><circle cx="232.1" cy="591.7" r="1.3"/><circle cx="244.4" cy="393.2" r="1.3"/><circle cx="241.3" cy="400.9" r="1.3"/><circle cx="484.2" cy="552.6" r="1.3"/><circle cx="475.1" cy="547.2" r="1.3"/><circle cx="424" cy="513.2" r="1.3"/><circle cx="413.3" cy="513.6" r="1.3"/><circle cx="410.1" cy="516" r="1.3"/><circle cx="346" cy="555.5" r="1.3"/><circle cx="440.7" cy="429.4" r="1.3"/><circle cx="225.6" cy="491.7" r="1.3"/><circle cx="232.9" cy="497.7" r="1.3"/><circle cx="345.6" cy="494.4" r="1.3"/><circle cx="220" cy="590.2" r="1.3"/><circle cx="480.2" cy="551.2" r="1.3"/><circle cx="486.8" cy="559.5" r="1.3"/><circle cx="304.2" cy="531.5" r="1.3"/><circle cx="221.6" cy="558.5" r="1.3"/><circle cx="341.4" cy="392.6" r="1.3"/><circle cx="351.1" cy="387.3" r="1.3"/><circle cx="234.8" cy="563.9" r="1.3"/><circle cx="386.3" cy="514.7" r="1.3"/><circle cx="482.3" cy="614.3" r="1.3"/><circle cx="474.3" cy="606.7" r="1.3"/><circle cx="458" cy="474.1" r="1.3"/><circle cx="449.2" cy="478.7" r="1.3"/><circle cx="405.8" cy="620.7" r="1.3"/><circle cx="468.7" cy="586.7" r="1.3"/><circle cx="492" cy="424.8" r="1.3"/><circle cx="488.5" cy="434" r="1.3"/><circle cx="253.5" cy="547.3" r="1.3"/><circle cx="262.3" cy="595.8" r="1.3"/><circle cx="462.2" cy="640.5" r="1.3"/><circle cx="287.1" cy="549" r="1.3"/><circle cx="252.6" cy="564.8" r="1.3"/><circle cx="370.1" cy="358.8" r="1.3"/><circle cx="359.2" cy="359.6" r="1.3"/><circle cx="475.5" cy="506.5" r="1.3"/><circle cx="429.3" cy="447.3" r="1.3"/><circle cx="418.8" cy="450.7" r="1.3"/><circle cx="329.1" cy="373.4" r="1.3"/><circle cx="402.3" cy="454.5" r="1.3"/><circle cx="395.9" cy="463.5" r="1.3"/><circle cx="267.7" cy="476.7" r="1.3"/><circle cx="270" cy="486" r="1.3"/><circle cx="290.5" cy="476.9" r="1.3"/><circle cx="229" cy="634" r="1.3"/><circle cx="238.2" cy="633.2" r="1.3"/><circle cx="457.9" cy="552.3" r="1.3"/><circle cx="456" cy="539.7" r="1.3"/><circle cx="448.4" cy="534.5" r="1.3"/><circle cx="305.7" cy="503.6" r="1.3"/><circle cx="258.3" cy="501.1" r="1.3"/><circle cx="505.5" cy="494.7" r="1.3"/><circle cx="495.4" cy="490.3" r="1.3"/><circle cx="272.3" cy="624.9" r="1.3"/><circle cx="428.3" cy="536.5" r="1.3"/><circle cx="479.5" cy="632" r="1.3"/><circle cx="320.1" cy="561.2" r="1.3"/><circle cx="324.8" cy="551.2" r="1.3"/><circle cx="247.8" cy="516.4" r="1.3"/><circle cx="248" cy="506.8" r="1.3"/><circle cx="459" cy="546" r="1.3"/><circle cx="469.7" cy="545.2" r="1.3"/><circle cx="274.5" cy="485.4" r="1.3"/><circle cx="281.2" cy="477.3" r="1.3"/><circle cx="379.2" cy="629.9" r="1.3"/><circle cx="364.8" cy="398.1" r="1.3"/><circle cx="256.9" cy="511.6" r="1.3"/><circle cx="376.8" cy="439.2" r="1.3"/><circle cx="497.4" cy="592.9" r="1.3"/><circle cx="244.6" cy="461.9" r="1.3"/><circle cx="454.9" cy="514.7" r="1.3"/><circle cx="383.1" cy="496.3" r="1.3"/><circle cx="373.2" cy="500.5" r="1.3"/><circle cx="381.8" cy="416.5" r="1.3"/><circle cx="392.8" cy="417.1" r="1.3"/><circle cx="327.8" cy="405.4" r="1.3"/><circle cx="489.3" cy="585.2" r="1.3"/><circle cx="498.4" cy="581" r="1.3"/><circle cx="498.4" cy="366.3" r="1.3"/><circle cx="489.4" cy="627.4" r="1.3"/><circle cx="441" cy="452.7" r="1.3"/><circle cx="299.5" cy="361.2" r="1.3"/></g>
<path d="M453.7 361.9L452.3 361.7M453.7 361.9L451.7 359.9M473.5 516.3L474 518.8M473.5 516.3L471.2 514.1M498 602L496 601.5M498 602L501.3 601.4M305 467.8L305.7 464.8M305 467.8L305.7 467.1M333.2 505.6L330.8 503.1M333.2 505.6L335.2 505.6M255.3 609L253.1 609.2M255.3 609L257.6 606.5M291.7 401.7L289 403.8M291.7 401.7L293.6 401.6M487.5 566.8L490 564.4M487.5 566.8L488.3 568.1M280 635.8L278.5 632.9M280 635.8L281.7 637.2M326.4 390.9L324.8 393.8M326.4 390.9L329.8 391.6M439.5 535.5L441.2 532.6M439.5 535.5L440.2 537.7M227.5 535L224 535.5M227.5 535L227.8 531.5M374 546.3L372 548.5M374 546.3L374.2 543.4M394 380.1L394.8 383.5M394 380.1L393 379.9M353.8 558.2L355.1 557M353.8 558.2L355.7 560.9M466.8 636.5L468.2 638.5M466.8 636.5L468.1 637.3M338.6 474.3L341.3 475.4M338.6 474.3L338.7 470.8M486.6 575.4L486.6 576.5M486.6 575.4L489.9 575.1M368.9 545.4L370.4 546.1M368.9 545.4L367.2 542.4M377.4 620.1L380.2 618.5M377.4 620.1L376.2 617.8M244.1 393.4L245.3 394.7M244.1 393.4L243 396.3M393.6 540.9L395.2 542.3M393.6 540.9L394.5 537.5M228.5 453.8L231.3 455.1M228.5 453.8L226.2 456.4M365.1 448.5L367.7 447.8M365.1 448.5L363.7 445.4M407.5 553.7L406.7 552.8M407.5 553.7L410.6 552.2M243.5 554.3L240.6 555.8M243.5 554.3L243.6 555.4M443.3 362L440.6 363.9M443.3 362L443 361.9M338.8 626.3L336.3 624M338.8 626.3L341.8 624.6M343.6 614.9L342.4 611.6M343.6 614.9L343.9 615.6M424.8 496.4L427.8 498.1M424.8 496.4L422.6 498.5M439.4 528.1L439.8 526.1M439.4 528.1L442.6 529.3M336 598.9L335.5 602.4M336 598.9L333 597.4M287.8 608.2L290.4 605.8M287.8 608.2L289.5 611.3M499.7 625L500.3 628.3M499.7 625L501.8 624.5M325.5 450.6L326.1 453.9M325.5 450.6L326.8 450.4M495.9 551.4L495.2 553.9M495.9 551.4L499.3 551.6M265.2 540.3L267.7 541.2M265.2 540.3L264.2 543.3M359.9 521.6L360.5 519.9M359.9 521.6L357.9 524.3M237.7 395.2L237.2 393M237.7 395.2L234.5 396.1M398.6 359.8L401 362.3M398.6 359.8L399.3 357.9M332.5 477.9L333.4 477.7M332.5 477.9L332.2 474.5M317.1 487.9L319 485.1M317.1 487.9L316.5 489.1M385.8 636.3L384.2 635.8M385.8 636.3L385.4 633.4M422.9 588.3L426.2 588.2M422.9 588.3L421.7 591.4M436.8 548.5L436.5 545M436.8 548.5L434.5 549.6M346.5 384.5L344.6 382.3M346.5 384.5L344 386.5M337 454.6L338.4 457M337 454.6L335.6 452.2M370.1 386.6L368.4 387.7M370.1 386.6L369.1 388.8M366.3 595.4L366.2 598.3M366.3 595.4L368.3 596.1M445.9 438.5L446.2 435.2M445.9 438.5L448.6 440.1M272.7 573.8L269.8 571.8M272.7 573.8L273.2 574.9M493.4 445.2L490.1 445.7M493.4 445.2L495 448.2M418.8 394.4L417.9 397.8M418.8 394.4L416.6 393.1M458.8 511.7L459.9 508.5M458.8 511.7L459.9 512.2M446.1 489.8L446.4 492.6M446.1 489.8L442.6 489.2M317.1 360.1L317.8 359.3M317.1 360.1L315.5 363.2M491.8 497L491.3 494.6M491.8 497L494.7 495.9M297 367.6L293.7 367.2M297 367.6L297.4 364.9M247.1 360.7L247.1 358.4M247.1 360.7L249.6 361.6M314.9 607.6L314 607.9M314.9 607.6L316.7 610.6M470.1 388.1L470.6 386.4M470.1 388.1L467.5 386.4M295.8 541.7L297.1 543.9M295.8 541.7L298.6 539.7M388 506.5L386.1 507.5M388 506.5L385.7 506.3M349.4 604.5L352.3 603.4M349.4 604.5L347.4 605.8M371.4 360L372.8 361.3M371.4 360L368.4 361.8M488.2 612.4L490.8 614.8M488.2 612.4L489.2 610M425.9 521.9L422.5 521.6M425.9 521.9L426.7 525.3M327.9 552.9L325.4 551.7M327.9 552.9L329.7 555.2M272.9 378.5L273.1 375.5M272.9 378.5L275.8 378.7M356.4 360.5L354.4 362.3M356.4 360.5L359.4 362.3M469.5 502.6L469.2 501.7M469.5 502.6L466.7 504.6M409.1 483.3L409.4 485.7M409.1 483.3L412.5 482.4M365.5 535.9L367.3 536.6M365.5 535.9L367.7 534.2M411.3 637L408.4 635.9M411.3 637L413.9 635.2M250.7 607.2L248.2 609.5M250.7 607.2L250.7 604.9M455.3 424.2L453.3 424.5M455.3 424.2L453.2 424.8M278.7 403.9L276.3 401.7M278.7 403.9L280.2 405.4M256.4 429L253.4 430.4M256.4 429L255.4 425.9M352.3 615.5L349.4 617.4M352.3 615.5L354.6 617.6M402.3 602L403 601.9M402.3 602L399.4 600M317.6 375L320.7 375.9M317.6 375L317.6 371.5M387.4 583.2L389.6 581.6M387.4 583.2L389.4 584.2M365.8 393.1L364.2 394.9M365.8 393.1L369 392.4M469.2 365.4L468 366.6M469.2 365.4L472.5 366.6M275.4 421.2L273.7 418.3M275.4 421.2L276.7 422.4M492.6 518.3L493.3 515.1M492.6 518.3L489.9 517.8M488 359.9L490.9 361M488 359.9L488.7 360.7M332.3 561.4L331.2 562.7M332.3 561.4L333.6 564.2M401.3 453.4L398.1 452.6M401.3 453.4L401 456.8M381 384.1L382.8 383.9M381 384.1L378.3 386.3M416.2 587.5L417.3 589.2M416.2 587.5L416.2 590M473.7 595.4L472.3 598.6M473.7 595.4L474.6 594.5M249.6 568L252.1 566.7M249.6 568L247.7 570M403.9 467.3L402.2 465.9M403.9 467.3L401.4 468.5M501.7 563.4L499.2 561.4M501.7 563.4L500.5 566.7M359.4 634.7L356.1 634.4M359.4 634.7L361.1 631.9M352.3 359.9L349.1 359.7M352.3 359.9L352.3 362.8M423.7 501.2L421.9 498.3M423.7 501.2L424.1 502.6M499.1 500.5L499.5 497.4M499.1 500.5L495.8 501.5M357.3 378.2L355.4 379.8M357.3 378.2L359 380.8M416.3 637.3L414.3 634.4M416.3 637.3L419.6 636.1M433.2 636.8L434.5 637.5M433.2 636.8L435.6 638M385 359.2L388.5 359.3M385 359.2L384.2 357.6M302.1 413.1L303.2 416.4M302.1 413.1L304.9 411.4M224.4 416.4L222.2 414.9M224.4 416.4L224.3 419.6M500.5 534.6L497.1 535.4M500.5 534.6L500.5 531.1M431.9 550.3L428.4 549.9M431.9 550.3L433.3 548.3M402.9 541.9L401.4 545M402.9 541.9L404.4 541M435.8 613.1L434.2 611.7M435.8 613.1L436.2 610.5M409.6 361L412.6 360.5M409.6 361L410.5 360.8M378.2 359.6L377.9 363M378.2 359.6L375 358.7M283.5 434.5L286.8 433.5M283.5 434.5L283.5 437.9M226.1 426.8L223 425.4M226.1 426.8L227.6 427.1M488.7 530.1L490.2 528.2M488.7 530.1L485.4 529.1M224 581.2L227.3 580.2M224 581.2L224.2 584.7M261.8 500L263.3 501.1M261.8 500L261.8 502.8M427.7 418.3L426.3 420M427.7 418.3L431 417.7M416.7 564.7L419.4 565.7M416.7 564.7L416.1 567.5M410.8 437.5L412.6 440.4M410.8 437.5L413.1 435.1M319.4 581.9L318 584.6M319.4 581.9L322.8 582.7M410.2 365.3L410.7 366.2M410.2 365.3L412.8 366.8M435 366.1L435.8 364.8M435 366.1L435.7 363.5M499 552.6L496 550.7M499 552.6L500.1 553.4M416.8 547.2L414.4 547.7M416.8 547.2L417.2 550.3M354.9 488.2L353.8 487.2M354.9 488.2L352.1 489.7M301.9 573.9L302.8 571.9M301.9 573.9L304.9 575.3M255.8 497.2L257.2 499.5M255.8 497.2L255.8 498.7M226 540.9L225.8 537.4M226 540.9L228.7 541.4M323.1 382.5L322 384.1M323.1 382.5L326.5 383.2M266.1 614.8L262.8 614.7M266.1 614.8L267.9 613M344.1 372.7L341.7 375.2M344.1 372.7L347.1 374.5M280.2 532.8L282.5 535.4M280.2 532.8L278.5 533M313.8 447L315.6 449.8M313.8 447L310.8 447.1M431.1 570.6L431.9 567.3M431.1 570.6L427.7 570.5M422.8 385.7L420.9 383.1M422.8 385.7L420.8 388.6M290.7 502.1L287.8 501.1M290.7 502.1L290.6 505.6M433.9 361L437.2 361M433.9 361L434 359.6M398.9 485L396.5 482.5M398.9 485L400.1 484.6M328.4 428.4L331.4 430.2M328.4 428.4L329.2 425.1M355.1 607.2L354.9 610.3M355.1 607.2L355.1 608.1M443 575.3L442.7 578.2M443 575.3L444.8 573.1M286.9 518.5L290.1 519.9M286.9 518.5L287.1 515.4M432.8 583.8L434.4 581.8M432.8 583.8L434.4 586.9M438.2 402.6L435.8 404.8M438.2 402.6L440.8 402.7M465.7 468.1L464.9 465.3M465.7 468.1L463.4 470.6M439.8 478.3L442.7 476.2M439.8 478.3L440.3 480.3M265.3 408.1L263.5 407M265.3 408.1L268.1 406M367.9 437.3L371.1 437.4M367.9 437.3L367.9 434.4M256.1 475.4L259.4 476.3M256.1 475.4L254.6 478.1M366.1 556.7L364 558.6M366.1 556.7L368.5 559" stroke="#d84040" stroke-width="0.8" fill="none"/>
<path d="M452.3 361.7L450.9 361.4M451.7 359.9L449.7 357.8M474 518.8L474.5 521.2M471.2 514.1L468.8 511.9M496 601.5L493.9 601.1M501.3 601.4L504.5 600.7M305.7 464.8L306.4 461.9M305.7 467.1L306.4 466.4M330.8 503.1L328.4 500.6M335.2 505.6L337.3 505.5M253.1 609.2L250.8 609.5M257.6 606.5L259.9 604.1M289 403.8L286.3 405.8M293.6 401.6L295.5 401.4M490 564.4L492.6 562.1M488.3 568.1L489 569.5M278.5 632.9L277.1 630M281.7 637.2L283.5 638.6M324.8 393.8L323.2 396.8M329.8 391.6L333.3 392.4M441.2 532.6L442.9 529.6M440.2 537.7L440.9 540M224 535.5L220.5 536M227.8 531.5L228.2 528M372 548.5L370.1 550.6M374.2 543.4L374.5 540.5M394.8 383.5L395.5 386.9M393 379.9L392 379.6M355.1 557L356.5 555.8M355.7 560.9L357.7 563.7M468.2 638.5L469.5 640.5M468.1 637.3L469.4 638.1M341.3 475.4L344.1 476.5M338.7 470.8L338.9 467.3M486.6 576.5L486.7 577.7M489.9 575.1L493.3 574.8M370.4 546.1L371.9 546.7M367.2 542.4L365.4 539.5M380.2 618.5L383 617M376.2 617.8L375 615.6M245.3 394.7L246.5 395.9M243 396.3L241.9 399.1M395.2 542.3L396.8 543.6M394.5 537.5L395.3 534.1M231.3 455.1L234.1 456.4M226.2 456.4L223.8 459M367.7 447.8L370.3 447M363.7 445.4L362.3 442.3M406.7 552.8L405.8 551.9M410.6 552.2L413.7 550.7M240.6 555.8L237.7 557.3M243.6 555.4L243.8 556.4M440.6 363.9L437.9 365.9M443 361.9L442.7 361.9M336.3 624L333.7 621.6M341.8 624.6L344.7 622.9M342.4 611.6L341.1 608.4M343.9 615.6L344.1 616.3M427.8 498.1L430.9 499.7M422.6 498.5L420.4 500.5M439.8 526.1L440.2 524M442.6 529.3L445.8 530.4M335.5 602.4L335 605.8M333 597.4L330 596M290.4 605.8L292.9 603.4M289.5 611.3L291.2 614.3M500.3 628.3L500.9 631.5M501.8 624.5L504 624M326.1 453.9L326.7 457.2M326.8 450.4L328.2 450.2M495.2 553.9L494.6 556.3M499.3 551.6L502.8 551.8M267.7 541.2L270.2 542.2M264.2 543.3L263.2 546.3M360.5 519.9L361.1 518.2M357.9 524.3L355.9 527M237.2 393L236.6 390.8M234.5 396.1L231.3 397M401 362.3L403.5 364.9M399.3 357.9L399.9 356M333.4 477.7L334.3 477.6M332.2 474.5L331.9 471.2M319 485.1L321 482.2M316.5 489.1L315.9 490.3M384.2 635.8L382.5 635.3M385.4 633.4L384.9 630.4M426.2 588.2L429.5 588.1M421.7 591.4L420.5 594.6M436.5 545L436.3 541.5M434.5 549.6L432.2 550.8M344.6 382.3L342.8 380.1M344 386.5L341.6 388.5M338.4 457L339.9 459.4M335.6 452.2L334.3 449.9M368.4 387.7L366.8 388.9M369.1 388.8L368 390.9M366.2 598.3L366.1 601.3M368.3 596.1L370.4 596.8M446.2 435.2L446.5 431.9M448.6 440.1L451.4 441.8M269.8 571.8L267 569.8M273.2 574.9L273.7 575.9M490.1 445.7L486.8 446.3M495 448.2L496.7 451.2M417.9 397.8L417 401.2M416.6 393.1L414.4 391.7M459.9 508.5L460.9 505.2M459.9 512.2L461 512.8M446.4 492.6L446.7 495.4M442.6 489.2L439.2 488.5M317.8 359.3L318.6 358.5M315.5 363.2L313.9 366.3M491.3 494.6L490.9 492.3M494.7 495.9L497.6 494.9M293.7 367.2L290.5 366.9M297.4 364.9L297.8 362.2M247.1 358.4L247 356M249.6 361.6L252.1 362.6M314 607.9L313.1 608.1M316.7 610.6L318.4 613.5M470.6 386.4L471.2 384.7M467.5 386.4L464.8 384.7M297.1 543.9L298.4 546.1M298.6 539.7L301.4 537.8M386.1 507.5L384.2 508.5M385.7 506.3L383.4 506.1M352.3 603.4L355.2 602.3M347.4 605.8L345.4 607.2M372.8 361.3L374.3 362.5M368.4 361.8L365.4 363.5M490.8 614.8L493.3 617.2M489.2 610L490.2 607.6M422.5 521.6L419.1 521.4M426.7 525.3L427.4 528.6M325.4 551.7L322.9 550.5M329.7 555.2L331.5 557.4M273.1 375.5L273.4 372.5M275.8 378.7L278.8 378.9M354.4 362.3L352.4 364.1M359.4 362.3L362.4 364.1M469.2 501.7L468.9 500.8M466.7 504.6L464 506.6M409.4 485.7L409.7 488.1M412.5 482.4L415.8 481.5M367.3 536.6L369.2 537.4M367.7 534.2L370 532.5M408.4 635.9L405.4 634.8M413.9 635.2L416.4 633.5M248.2 609.5L245.7 611.8M250.7 604.9L250.7 602.7M453.3 424.5L451.4 424.9M453.2 424.8L451 425.4M276.3 401.7L274 399.6M280.2 405.4L281.8 406.9M253.4 430.4L250.3 431.7M255.4 425.9L254.5 422.8M349.4 617.4L346.5 619.3M354.6 617.6L356.8 619.8M403 601.9L403.7 601.9M399.4 600L396.6 598M320.7 375.9L323.8 376.8M317.6 371.5L317.6 368M389.6 581.6L391.8 580M389.4 584.2L391.4 585.1M364.2 394.9L362.6 396.8M369 392.4L372.1 391.7M468 366.6L466.8 367.7M472.5 366.6L475.8 367.7M273.7 418.3L272 415.3M276.7 422.4L277.9 423.6M493.3 515.1L493.9 511.9M489.9 517.8L487.3 517.3M490.9 361L493.7 362.1M488.7 360.7L489.3 361.4M331.2 562.7L330.1 563.9M333.6 564.2L334.9 567M398.1 452.6L394.9 451.7M401 456.8L400.7 460.2M382.8 383.9L384.6 383.8M378.3 386.3L375.7 388.4M417.3 589.2L418.4 590.9M416.2 590L416.1 592.4M472.3 598.6L471 601.8M474.6 594.5L475.5 593.6M252.1 566.7L254.7 565.5M247.7 570L245.8 572.1M402.2 465.9L400.4 464.5M401.4 468.5L398.9 469.7M499.2 561.4L496.6 559.3M500.5 566.7L499.3 569.9M356.1 634.4L352.8 634M361.1 631.9L362.7 629.1M349.1 359.7L345.9 359.6M352.3 362.8L352.3 365.8M421.9 498.3L420 495.3M424.1 502.6L424.4 504M499.5 497.4L499.9 494.3M495.8 501.5L492.6 502.5M355.4 379.8L353.5 381.4M359 380.8L360.6 383.4M414.3 634.4L412.3 631.6M419.6 636.1L422.9 634.9M434.5 637.5L435.7 638.3M435.6 638L438 639.3M388.5 359.3L392 359.3M384.2 357.6L383.3 356M303.2 416.4L304.4 419.6M304.9 411.4L307.8 409.7M222.2 414.9L220 413.4M224.3 419.6L224.2 422.8M497.1 535.4L493.7 536.3M500.5 531.1L500.6 527.6M428.4 549.9L425 549.4M433.3 548.3L434.6 546.3M401.4 545L399.8 548M404.4 541L405.9 540M434.2 611.7L432.5 610.3M436.2 610.5L436.6 607.8M412.6 360.5L415.5 359.9M410.5 360.8L411.4 360.5M377.9 363L377.6 366.4M375 358.7L371.8 357.8M286.8 433.5L290.2 432.5M283.5 437.9L283.6 441.3M223 425.4L220 423.9M227.6 427.1L229.2 427.3M490.2 528.2L491.7 526.3M485.4 529.1L482 528.1M227.3 580.2L230.6 579.1M224.2 584.7L224.3 588.2M263.3 501.1L264.8 502.3M261.8 502.8L261.8 505.5M426.3 420L425 421.7M431 417.7L434.4 417.1M419.4 565.7L422.1 566.6M416.1 567.5L415.5 570.2M412.6 440.4L414.5 443.3M413.1 435.1L415.5 432.6M318 584.6L316.7 587.4M322.8 582.7L326.2 583.4M410.7 366.2L411.3 367.1M412.8 366.8L415.5 368.3M435.8 364.8L436.6 363.5M435.7 363.5L436.4 361M496 550.7L493.1 548.9M500.1 553.4L501.2 554.1M414.4 547.7L412.1 548.2M417.2 550.3L417.6 553.5M353.8 487.2L352.6 486.1M352.1 489.7L349.3 491.2M302.8 571.9L303.7 569.9M304.9 575.3L308 576.7M257.2 499.5L258.6 501.9M255.8 498.7L255.9 500.2M225.8 537.4L225.6 533.9M228.7 541.4L231.4 541.9M322 384.1L321 385.6M326.5 383.2L329.9 384M262.8 614.7L259.4 614.5M267.9 613L269.6 611.3M341.7 375.2L339.3 377.7M347.1 374.5L350.1 376.2M282.5 535.4L284.8 538M278.5 533L276.9 533.2M315.6 449.8L317.4 452.7M310.8 447.1L307.9 447.3M431.9 567.3L432.6 564M427.7 570.5L424.2 570.5M420.9 383.1L419 380.5M420.8 388.6L418.8 391.4M287.8 501.1L284.9 500.1M290.6 505.6L290.6 509.1M437.2 361L440.5 360.9M434 359.6L434.1 358.1M396.5 482.5L394.1 480M400.1 484.6L401.3 484.1M331.4 430.2L334.4 432M329.2 425.1L330 421.9M354.9 610.3L354.8 613.3M355.1 608.1L355.2 609M442.7 578.2L442.3 581.1M444.8 573.1L446.6 570.9M290.1 519.9L293.3 521.3M287.1 515.4L287.3 512.2M434.4 581.8L436 579.9M434.4 586.9L436 590M435.8 404.8L433.4 407M440.8 402.7L443.4 402.9M464.9 465.3L464.1 462.5M463.4 470.6L461.1 473M442.7 476.2L445.5 474.1M440.3 480.3L440.7 482.3M263.5 407L261.7 405.8M268.1 406L270.8 403.9M371.1 437.4L374.2 437.4M367.9 434.4L367.8 431.4M259.4 476.3L262.8 477.1M254.6 478.1L253.2 480.8M364 558.6L361.9 560.5M368.5 559L370.9 561.3" stroke="#d8d8d8" stroke-width="0.7" fill="none"/>
<g fill="url(#hg)"><circle cx="449.7" cy="357.8" r="1.3"/><circle cx="474.5" cy="521.2" r="1.3"/><circle cx="468.8" cy="511.9" r="1.3"/><circle cx="493.9" cy="601.1" r="1.3"/><circle cx="504.5" cy="600.7" r="1.3"/><circle cx="306.4" cy="461.9" r="1.3"/><circle cx="250.8" cy="609.5" r="1.3"/><circle cx="259.9" cy="604.1" r="1.3"/><circle cx="286.3" cy="405.8" r="1.3"/><circle cx="295.5" cy="401.4" r="1.3"/><circle cx="489" cy="569.5" r="1.3"/><circle cx="277.1" cy="630" r="1.3"/><circle cx="283.5" cy="638.6" r="1.3"/><circle cx="323.2" cy="396.8" r="1.3"/><circle cx="442.9" cy="529.6" r="1.3"/><circle cx="440.9" cy="540" r="1.3"/><circle cx="370.1" cy="550.6" r="1.3"/><circle cx="374.5" cy="540.5" r="1.3"/><circle cx="357.7" cy="563.7" r="1.3"/><circle cx="469.5" cy="640.5" r="1.3"/><circle cx="486.7" cy="577.7" r="1.3"/><circle cx="371.9" cy="546.7" r="1.3"/><circle cx="375" cy="615.6" r="1.3"/><circle cx="241.9" cy="399.1" r="1.3"/><circle cx="396.8" cy="543.6" r="1.3"/><circle cx="362.3" cy="442.3" r="1.3"/><circle cx="237.7" cy="557.3" r="1.3"/><circle cx="442.7" cy="361.9" r="1.3"/><circle cx="344.7" cy="622.9" r="1.3"/><circle cx="445.8" cy="530.4" r="1.3"/><circle cx="504" cy="624" r="1.3"/><circle cx="326.7" cy="457.2" r="1.3"/><circle cx="494.6" cy="556.3" r="1.3"/><circle cx="263.2" cy="546.3" r="1.3"/><circle cx="236.6" cy="390.8" r="1.3"/><circle cx="331.9" cy="471.2" r="1.3"/><circle cx="315.9" cy="490.3" r="1.3"/><circle cx="384.9" cy="630.4" r="1.3"/><circle cx="432.2" cy="550.8" r="1.3"/><circle cx="341.6" cy="388.5" r="1.3"/><circle cx="366.8" cy="388.9" r="1.3"/><circle cx="370.4" cy="596.8" r="1.3"/><circle cx="273.7" cy="575.9" r="1.3"/><circle cx="460.9" cy="505.2" r="1.3"/><circle cx="318.6" cy="358.5" r="1.3"/><circle cx="490.9" cy="492.3" r="1.3"/><circle cx="297.8" cy="362.2" r="1.3"/><circle cx="252.1" cy="362.6" r="1.3"/><circle cx="313.1" cy="608.1" r="1.3"/><circle cx="464.8" cy="384.7" r="1.3"/><circle cx="301.4" cy="537.8" r="1.3"/><circle cx="383.4" cy="506.1" r="1.3"/><circle cx="490.2" cy="607.6" r="1.3"/><circle cx="273.4" cy="372.5" r="1.3"/><circle cx="409.7" cy="488.1" r="1.3"/><circle cx="369.2" cy="537.4" r="1.3"/><circle cx="245.7" cy="611.8" r="1.3"/><circle cx="250.7" cy="602.7" r="1.3"/><circle cx="451" cy="425.4" r="1.3"/><circle cx="254.5" cy="422.8" r="1.3"/><circle cx="356.8" cy="619.8" r="1.3"/><circle cx="323.8" cy="376.8" r="1.3"/><circle cx="391.8" cy="580" r="1.3"/><circle cx="493.9" cy="511.9" r="1.3"/><circle cx="489.3" cy="361.4" r="1.3"/><circle cx="330.1" cy="563.9" r="1.3"/><circle cx="400.7" cy="460.2" r="1.3"/><circle cx="384.6" cy="383.8" r="1.3"/><circle cx="418.4" cy="590.9" r="1.3"/><circle cx="398.9" cy="469.7" r="1.3"/><circle cx="345.9" cy="359.6" r="1.3"/><circle cx="499.9" cy="494.3" r="1.3"/><circle cx="492.6" cy="502.5" r="1.3"/><circle cx="360.6" cy="383.4" r="1.3"/><circle cx="438" cy="639.3" r="1.3"/><circle cx="383.3" cy="356" r="1.3"/><circle cx="307.8" cy="409.7" r="1.3"/><circle cx="220" cy="413.4" r="1.3"/><circle cx="224.2" cy="422.8" r="1.3"/><circle cx="405.9" cy="540" r="1.3"/><circle cx="432.5" cy="610.3" r="1.3"/><circle cx="415.5" cy="359.9" r="1.3"/><circle cx="371.8" cy="357.8" r="1.3"/><circle cx="229.2" cy="427.3" r="1.3"/><circle cx="264.8" cy="502.3" r="1.3"/><circle cx="425" cy="421.7" r="1.3"/><circle cx="434.4" cy="417.1" r="1.3"/><circle cx="422.1" cy="566.6" r="1.3"/><circle cx="415.5" cy="368.3" r="1.3"/><circle cx="436.6" cy="363.5" r="1.3"/><circle cx="501.2" cy="554.1" r="1.3"/><circle cx="417.6" cy="553.5" r="1.3"/><circle cx="349.3" cy="491.2" r="1.3"/><circle cx="308" cy="576.7" r="1.3"/><circle cx="258.6" cy="501.9" r="1.3"/><circle cx="231.4" cy="541.9" r="1.3"/><circle cx="321" cy="385.6" r="1.3"/><circle cx="317.4" cy="452.7" r="1.3"/><circle cx="307.9" cy="447.3" r="1.3"/><circle cx="440.5" cy="360.9" r="1.3"/><circle cx="401.3" cy="484.1" r="1.3"/><circle cx="354.8" cy="613.3" r="1.3"/><circle cx="442.3" cy="581.1" r="1.3"/><circle cx="446.6" cy="570.9" r="1.3"/><circle cx="287.3" cy="512.2" r="1.3"/><circle cx="436" cy="579.9" r="1.3"/><circle cx="464.1" cy="462.5" r="1.3"/><circle cx="461.1" cy="473" r="1.3"/><circle cx="367.8" cy="431.4" r="1.3"/><circle cx="253.2" cy="480.8" r="1.3"/><circle cx="370.9" cy="561.3" r="1.3"/></g>
<g fill="url(#og)"><circle cx="453.7" cy="361.9" r="3.5"/><circle cx="473.5" cy="516.3" r="3.5"/><circle cx="498" cy="602" r="3.5"/><circle cx="305" cy="467.8" r="3.5"/><circle cx="333.2" cy="505.6" r="3.5"/><circle cx="255.3" cy="609" r="3.5"/><circle cx="291.7" cy="401.7" r="3.5"/><circle cx="487.5" cy="566.8" r="3.5"/><circle cx="280" cy="635.8" r="3.5"/><circle cx="326.4" cy="390.9" r="3.5"/><circle cx="439.5" cy="535.5" r="3.5"/><circle cx="227.5" cy="535" r="3.5"/><circle cx="374" cy="546.3" r="3.5"/><circle cx="394" cy="380.1" r="3.5"/><circle cx="353.8" cy="558.2" r="3.5"/><circle cx="466.8" cy="636.5" r="3.5"/><circle cx="338.6" cy="474.3" r="3.5"/><circle cx="486.6" cy="575.4" r="3.5"/><circle cx="368.9" cy="545.4" r="3.5"/><circle cx="377.4" cy="620.1" r="3.5"/><circle cx="244.1" cy="393.4" r="3.5"/><circle cx="393.6" cy="540.9" r="3.5"/><circle cx="228.5" cy="453.8" r="3.5"/><circle cx="365.1" cy="448.5" r="3.5"/><circle cx="407.5" cy="553.7" r="3.5"/><circle cx="243.5" cy="554.3" r="3.5"/><circle cx="443.3" cy="362" r="3.5"/><circle cx="338.8" cy="626.3" r="3.5"/><circle cx="343.6" cy="614.9" r="3.5"/><circle cx="424.8" cy="496.4" r="3.5"/><circle cx="439.4" cy="528.1" r="3.5"/><circle cx="336" cy="598.9" r="3.5"/><circle cx="287.8" cy="608.2" r="3.5"/><circle cx="499.7" cy="625" r="3.5"/><circle cx="325.5" cy="450.6" r="3.5"/><circle cx="495.9" cy="551.4" r="3.5"/><circle cx="265.2" cy="540.3" r="3.5"/><circle cx="359.9" cy="521.6" r="3.5"/><circle cx="237.7" cy="395.2" r="3.5"/><circle cx="398.6" cy="359.8" r="3.5"/><circle cx="332.5" cy="477.9" r="3.5"/><circle cx="317.1" cy="487.9" r="3.5"/><circle cx="385.8" cy="636.3" r="3.5"/><circle cx="422.9" cy="588.3" r="3.5"/><circle cx="436.8" cy="548.5" r="3.5"/><circle cx="346.5" cy="384.5" r="3.5"/><circle cx="337" cy="454.6" r="3.5"/><circle cx="370.1" cy="386.6" r="3.5"/><circle cx="366.3" cy="595.4" r="3.5"/><circle cx="445.9" cy="438.5" r="3.5"/><circle cx="272.7" cy="573.8" r="3.5"/><circle cx="493.4" cy="445.2" r="3.5"/><circle cx="418.8" cy="394.4" r="3.5"/><circle cx="458.8" cy="511.7" r="3.5"/><circle cx="446.1" cy="489.8" r="3.5"/><circle cx="317.1" cy="360.1" r="3.5"/><circle cx="491.8" cy="497" r="3.5"/><circle cx="297" cy="367.6" r="3.5"/><circle cx="247.1" cy="360.7" r="3.5"/><circle cx="314.9" cy="607.6" r="3.5"/><circle cx="470.1" cy="388.1" r="3.5"/><circle cx="295.8" cy="541.7" r="3.5"/><circle cx="388" cy="506.5" r="3.5"/><circle cx="349.4" cy="604.5" r="3.5"/><circle cx="371.4" cy="360" r="3.5"/><circle cx="488.2" cy="612.4" r="3.5"/><circle cx="425.9" cy="521.9" r="3.5"/><circle cx="327.9" cy="552.9" r="3.5"/><circle cx="272.9" cy="378.5" r="3.5"/><circle cx="356.4" cy="360.5" r="3.5"/><circle cx="469.5" cy="502.6" r="3.5"/><circle cx="409.1" cy="483.3" r="3.5"/><circle cx="365.5" cy="535.9" r="3.5"/><circle cx="411.3" cy="637" r="3.5"/><circle cx="250.7" cy="607.2" r="3.5"/><circle cx="455.3" cy="424.2" r="3.5"/><circle cx="278.7" cy="403.9" r="3.5"/><circle cx="256.4" cy="429" r="3.5"/><circle cx="352.3" cy="615.5" r="3.5"/><circle cx="402.3" cy="602" r="3.5"/><circle cx="317.6" cy="375" r="3.5"/><circle cx="387.4" cy="583.2" r="3.5"/><circle cx="365.8" cy="393.1" r="3.5"/><circle cx="469.2" cy="365.4" r="3.5"/><circle cx="275.4" cy="421.2" r="3.5"/><circle cx="492.6" cy="518.3" r="3.5"/><circle cx="488" cy="359.9" r="3.5"/><circle cx="332.3" cy="561.4" r="3.5"/><circle cx="401.3" cy="453.4" r="3.5"/><circle cx="381" cy="384.1" r="3.5"/><circle cx="416.2" cy="587.5" r="3.5"/><circle cx="473.7" cy="595.4" r="3.5"/><circle cx="249.6" cy="568" r="3.5"/><circle cx="403.9" cy="467.3" r="3.5"/><circle cx="501.7" cy="563.4" r="3.5"/><circle cx="359.4" cy="634.7" r="3.5"/><circle cx="352.3" cy="359.9" r="3.5"/><circle cx="423.7" cy="501.2" r="3.5"/><circle cx="499.1" cy="500.5" r="3.5"/><circle cx="357.3" cy="378.2" r="3.5"/><circle cx="416.3" cy="637.3" r="3.5"/><circle cx="433.2" cy="636.8" r="3.5"/><circle cx="385" cy="359.2" r="3.5"/><circle cx="302.1" cy="413.1" r="3.5"/><circle cx="224.4" cy="416.4" r="3.5"/><circle cx="500.5" cy="534.6" r="3.5"/><circle cx="431.9" cy="550.3" r="3.5"/><circle cx="402.9" cy="541.9" r="3.5"/><circle cx="435.8" cy="613.1" r="3.5"/><circle cx="409.6" cy="361" r="3.5"/><circle cx="378.2" cy="359.6" r="3.5"/><circle cx="283.5" cy="434.5" r="3.5"/><circle cx="226.1" cy="426.8" r="3.5"/><circle cx="488.7" cy="530.1" r="3.5"/><circle cx="224" cy="581.2" r="3.5"/><circle cx="261.8" cy="500" r="3.5"/><circle cx="427.7" cy="418.3" r="3.5"/><circle cx="416.7" cy="564.7" r="3.5"/><circle cx="410.8" cy="437.5" r="3.6"/><circle cx="319.4" cy="581.9" r="3.6"/><circle cx="410.2" cy="365.3" r="3.6"/><circle cx="435" cy="366.1" r="3.6"/><circle cx="499" cy="552.6" r="3.6"/><circle cx="416.8" cy="547.2" r="3.6"/><circle cx="354.9" cy="488.2" r="3.6"/><circle cx="301.9" cy="573.9" r="3.6"/><circle cx="255.8" cy="497.2" r="3.6"/><circle cx="226" cy="540.9" r="3.6"/><circle cx="323.1" cy="382.5" r="3.6"/><circle cx="266.1" cy="614.8" r="3.6"/><circle cx="344.1" cy="372.7" r="3.6"/><circle cx="280.2" cy="532.8" r="3.6"/><circle cx="313.8" cy="447" r="3.6"/><circle cx="431.1" cy="570.6" r="3.6"/><circle cx="422.8" cy="385.7" r="3.6"/><circle cx="290.7" cy="502.1" r="3.6"/><circle cx="433.9" cy="361" r="3.6"/><circle cx="398.9" cy="485" r="3.6"/><circle cx="328.4" cy="428.4" r="3.6"/><circle cx="355.1" cy="607.2" r="3.6"/><circle cx="443" cy="575.3" r="3.6"/><circle cx="286.9" cy="518.5" r="3.6"/><circle cx="432.8" cy="583.8" r="3.6"/><circle cx="438.2" cy="402.6" r="3.6"/><circle cx="465.7" cy="468.1" r="3.6"/><circle cx="439.8" cy="478.3" r="3.6"/><circle cx="265.3" cy="408.1" r="3.6"/><circle cx="367.9" cy="437.3" r="3.6"/><circle cx="256.1" cy="475.4" r="3.6"/><circle cx="366.1" cy="556.7" r="3.6"/></g>
<g fill="url(#hg)"><circle cx="450.9" cy="361.4" r="1.3"/><circle cx="306.4" cy="466.4" r="1.3"/><circle cx="328.4" cy="500.6" r="1.3"/><circle cx="337.3" cy="505.5" r="1.3"/><circle cx="492.6" cy="562.1" r="1.3"/><circle cx="333.3" cy="392.4" r="1.3"/><circle cx="220.5" cy="536" r="1.3"/><circle cx="228.2" cy="528" r="1.3"/><circle cx="395.5" cy="386.9" r="1.3"/><circle cx="392" cy="379.6" r="1.3"/><circle cx="356.5" cy="555.8" r="1.3"/><circle cx="469.4" cy="638.1" r="1.3"/><circle cx="344.1" cy="476.5" r="1.3"/><circle cx="338.9" cy="467.3" r="1.3"/><circle cx="493.3" cy="574.8" r="1.3"/><circle cx="365.4" cy="539.5" r="1.3"/><circle cx="383" cy="617" r="1.3"/><circle cx="246.5" cy="395.9" r="1.3"/><circle cx="395.3" cy="534.1" r="1.3"/><circle cx="234.1" cy="456.4" r="1.3"/><circle cx="223.8" cy="459" r="1.3"/><circle cx="370.3" cy="447" r="1.3"/><circle cx="405.8" cy="551.9" r="1.3"/><circle cx="413.7" cy="550.7" r="1.3"/><circle cx="243.8" cy="556.4" r="1.3"/><circle cx="437.9" cy="365.9" r="1.3"/><circle cx="333.7" cy="621.6" r="1.3"/><circle cx="341.1" cy="608.4" r="1.3"/><circle cx="344.1" cy="616.3" r="1.3"/><circle cx="430.9" cy="499.7" r="1.3"/><circle cx="420.4" cy="500.5" r="1.3"/><circle cx="440.2" cy="524" r="1.3"/><circle cx="335" cy="605.8" r="1.3"/><circle cx="330" cy="596" r="1.3"/><circle cx="292.9" cy="603.4" r="1.3"/><circle cx="291.2" cy="614.3" r="1.3"/><circle cx="500.9" cy="631.5" r="1.3"/><circle cx="328.2" cy="450.2" r="1.3"/><circle cx="502.8" cy="551.8" r="1.3"/><circle cx="270.2" cy="542.2" r="1.3"/><circle cx="361.1" cy="518.2" r="1.3"/><circle cx="355.9" cy="527" r="1.3"/><circle cx="231.3" cy="397" r="1.3"/><circle cx="403.5" cy="364.9" r="1.3"/><circle cx="399.9" cy="356" r="1.3"/><circle cx="334.3" cy="477.6" r="1.3"/><circle cx="321" cy="482.2" r="1.3"/><circle cx="382.5" cy="635.3" r="1.3"/><circle cx="429.5" cy="588.1" r="1.3"/><circle cx="420.5" cy="594.6" r="1.3"/><circle cx="436.3" cy="541.5" r="1.3"/><circle cx="342.8" cy="380.1" r="1.3"/><circle cx="339.9" cy="459.4" r="1.3"/><circle cx="334.3" cy="449.9" r="1.3"/><circle cx="368" cy="390.9" r="1.3"/><circle cx="366.1" cy="601.3" r="1.3"/><circle cx="446.5" cy="431.9" r="1.3"/><circle cx="451.4" cy="441.8" r="1.3"/><circle cx="267" cy="569.8" r="1.3"/><circle cx="486.8" cy="446.3" r="1.3"/><circle cx="496.7" cy="451.2" r="1.3"/><circle cx="417" cy="401.2" r="1.3"/><circle cx="414.4" cy="391.7" r="1.3"/><circle cx="461" cy="512.8" r="1.3"/><circle cx="446.7" cy="495.4" r="1.3"/><circle cx="439.2" cy="488.5" r="1.3"/><circle cx="313.9" cy="366.3" r="1.3"/><circle cx="497.6" cy="494.9" r="1.3"/><circle cx="290.5" cy="366.9" r="1.3"/><circle cx="247" cy="356" r="1.3"/><circle cx="318.4" cy="613.5" r="1.3"/><circle cx="471.2" cy="384.7" r="1.3"/><circle cx="298.4" cy="546.1" r="1.3"/><circle cx="384.2" cy="508.5" r="1.3"/><circle cx="355.2" cy="602.3" r="1.3"/><circle cx="345.4" cy="607.2" r="1.3"/><circle cx="374.3" cy="362.5" r="1.3"/><circle cx="365.4" cy="363.5" r="1.3"/><circle cx="493.3" cy="617.2" r="1.3"/><circle cx="419.1" cy="521.4" r="1.3"/><circle cx="427.4" cy="528.6" r="1.3"/><circle cx="322.9" cy="550.5" r="1.3"/><circle cx="331.5" cy="557.4" r="1.3"/><circle cx="278.8" cy="378.9" r="1.3"/><circle cx="352.4" cy="364.1" r="1.3"/><circle cx="362.4" cy="364.1" r="1.3"/><circle cx="468.9" cy="500.8" r="1.3"/><circle cx="464" cy="506.6" r="1.3"/><circle cx="415.8" cy="481.5" r="1.3"/><circle cx="370" cy="532.5" r="1.3"/><circle cx="405.4" cy="634.8" r="1.3"/><circle cx="416.4" cy="633.5" r="1.3"/><circle cx="451.4" cy="424.9" r="1.3"/><circle cx="274" cy="399.6" r="1.3"/><circle cx="281.8" cy="406.9" r="1.3"/><circle cx="250.3" cy="431.7" r="1.3"/><circle cx="346.5" cy="619.3" r="1.3"/><circle cx="403.7" cy="601.9" r="1.3"/><circle cx="396.6" cy="598" r="1.3"/><circle cx="317.6" cy="368" r="1.3"/><circle cx="391.4" cy="585.1" r="1.3"/><circle cx="362.6" cy="396.8" r="1.3"/><circle cx="372.1" cy="391.7" r="1.3"/><circle cx="466.8" cy="367.7" r="1.3"/><circle cx="475.8" cy="367.7" r="1.3"/><circle cx="272" cy="415.3" r="1.3"/><circle cx="277.9" cy="423.6" r="1.3"/><circle cx="487.3" cy="517.3" r="1.3"/><circle cx="493.7" cy="362.1" r="1.3"/><circle cx="334.9" cy="567" r="1.3"/><circle cx="394.9" cy="451.7" r="1.3"/><circle cx="375.7" cy="388.4" r="1.3"/><circle cx="416.1" cy="592.4" r="1.3"/><circle cx="471" cy="601.8" r="1.3"/><circle cx="475.5" cy="593.6" r="1.3"/><circle cx="254.7" cy="565.5" r="1.3"/><circle cx="245.8" cy="572.1" r="1.3"/><circle cx="400.4" cy="464.5" r="1.3"/><circle cx="496.6" cy="559.3" r="1.3"/><circle cx="499.3" cy="569.9" r="1.3"/><circle cx="352.8" cy="634" r="1.3"/><circle cx="362.7" cy="629.1" r="1.3"/><circle cx="352.3" cy="365.8" r="1.3"/><circle cx="420" cy="495.3" r="1.3"/><circle cx="424.4" cy="504" r="1.3"/><circle cx="353.5" cy="381.4" r="1.3"/><circle cx="412.3" cy="631.6" r="1.3"/><circle cx="422.9" cy="634.9" r="1.3"/><circle cx="435.7" cy="638.3" r="1.3"/><circle cx="392" cy="359.3" r="1.3"/><circle cx="304.4" cy="419.6" r="1.3"/><circle cx="493.7" cy="536.3" r="1.3"/><circle cx="500.6" cy="527.6" r="1.3"/><circle cx="425" cy="549.4" r="1.3"/><circle cx="434.6" cy="546.3" r="1.3"/><circle cx="399.8" cy="548" r="1.3"/><circle cx="436.6" cy="607.8" r="1.3"/><circle cx="411.4" cy="360.5" r="1.3"/><circle cx="377.6" cy="366.4" r="1.3"/><circle cx="290.2" cy="432.5" r="1.3"/><circle cx="283.6" cy="441.3" r="1.3"/><circle cx="220" cy="423.9" r="1.3"/><circle cx="491.7" cy="526.3" r="1.3"/><circle cx="482" cy="528.1" r="1.3"/><circle cx="230.6" cy="579.1" r="1.3"/><circle cx="224.3" cy="588.2" r="1.3"/><circle cx="261.8" cy="505.5" r="1.3"/><circle cx="415.5" cy="570.2" r="1.3"/><circle cx="414.5" cy="443.3" r="1.3"/><circle cx="415.5" cy="432.6" r="1.3"/><circle cx="316.7" cy="587.4" r="1.3"/><circle cx="326.2" cy="583.4" r="1.3"/><circle cx="411.3" cy="367.1" r="1.3"/><circle cx="436.4" cy="361" r="1.3"/><circle cx="493.1" cy="548.9" r="1.3"/><circle cx="412.1" cy="548.2" r="1.3"/><circle cx="352.6" cy="486.1" r="1.3"/><circle cx="303.7" cy="569.9" r="1.3"/><circle cx="255.9" cy="500.2" r="1.3"/><circle cx="225.6" cy="533.9" r="1.3"/><circle cx="329.9" cy="384" r="1.3"/><circle cx="259.4" cy="614.5" r="1.3"/><circle cx="269.6" cy="611.3" r="1.3"/><circle cx="339.3" cy="377.7" r="1.3"/><circle cx="350.1" cy="376.2" r="1.3"/><circle cx="284.8" cy="538" r="1.3"/><circle cx="276.9" cy="533.2" r="1.3"/><circle cx="432.6" cy="564" r="1.3"/><circle cx="424.2" cy="570.5" r="1.3"/><circle cx="419" cy="380.5" r="1.3"/><circle cx="418.8" cy="391.4" r="1.3"/><circle cx="284.9" cy="500.1" r="1.3"/><circle cx="290.6" cy="509.1" r="1.3"/><circle cx="434.1" cy="358.1" r="1.3"/><circle cx="394.1" cy="480" r="1.3"/><circle cx="334.4" cy="432" r="1.3"/><circle cx="330" cy="421.9" r="1.3"/><circle cx="355.2" cy="609" r="1.3"/><circle cx="293.3" cy="521.3" r="1.3"/><circle cx="436" cy="590" r="1.3"/><circle cx="433.4" cy="407" r="1.3"/><circle cx="443.4" cy="402.9" r="1.3"/><circle cx="445.5" cy="474.1" r="1.3"/><circle cx="440.7" cy="482.3" r="1.3"/><circle cx="261.7" cy="405.8" r="1.3"/><circle cx="270.8" cy="403.9" r="1.3"/><circle cx="374.2" cy="437.4" r="1.3"/><circle cx="262.8" cy="477.1" r="1.3"/><circle cx="361.9" cy="560.5" r="1.3"/></g>
<g fill="url(#cg)"><circle cx="354" cy="496.5" r="3.6"/><circle cx="367.5" cy="493" r="3.3"/><circle cx="362" cy="489" r="3.2"/></g>
<path d="M374 610.3L372.4 613.3M374 610.3L372.1 608.8M489.4 632.9L485.9 633.1M489.4 632.9L490.2 636M407.2 389.9L406.7 392.6M407.2 389.9L404 388.3M342.1 588.1L340.1 588.5M342.1 588.1L339.9 587.5M263.4 495.8L261 495.2M263.4 495.8L264.9 492.7M383.5 563.7L380.1 563.5M383.5 563.7L384.9 565.2M473.3 468.8L476.2 468M473.3 468.8L474.4 470.5M224.9 627.5L226.6 625.2M224.9 627.5L222.4 625.6M250.7 560.4L251 557M250.7 560.4L252.2 562M293.7 417.4L296.5 416.7M293.7 417.4L290.9 416.7M495.1 359.3L492.1 357.6M495.1 359.3L496.9 357.8M426.3 516.9L425.7 513.8M426.3 516.9L423.9 517.3M346.3 364L349.5 365.4M346.3 364L344.1 366.2M389.4 625.3L389 628.4M389.4 625.3L388.8 625.9M447.6 577.9L450.4 578M447.6 577.9L446.8 574.5M420 576.5L420.1 579.7M420 576.5L419.8 577M448.7 586.9L448.1 587.7M448.7 586.9L451.1 584.4M263.7 452.1L267.2 452.2M263.7 452.1L263 450.7M378.8 449.8L376 448.8M378.8 449.8L381.3 449.8M244.5 360.7L244.5 358.9M244.5 360.7L241.1 360.8M474.1 361.6L470.7 362.1M474.1 361.6L475.8 362.9M297.5 513.2L297.2 516.4M297.5 513.2L295.3 513.4M359.3 476.3L357.6 479.2M359.3 476.3L362.2 476.3M305.5 405.6L303.7 405.6M305.5 405.6L308.8 405.7M293 520.1L293.4 517.3M293 520.1L295.7 522.2M257.2 616.1L256.3 619.5M257.2 616.1L254.2 614.5M252.8 433.6L255.9 432.4M252.8 433.6L250.4 432.4M288.2 359.2L288.2 357.6M288.2 359.2L285 359.7M368.1 574.6L366.8 577.7M368.1 574.6L365.7 572.3M284.3 523.8L285.5 523.9M284.3 523.8L283.5 527M480 498.7L478.9 498.5M480 498.7L480.6 502.1M260.8 388.7L261.9 386.8M260.8 388.7L263.6 388.7M291.5 364.7L288.2 363.6M291.5 364.7L291.7 365.7M437.6 395.5L436.3 397.8M437.6 395.5L436.5 392.4M484.3 599.7L485.1 596.6M484.3 599.7L485.4 602M468.1 454L470.4 451.7M468.1 454L465.5 454.1M460.7 414.5L459.1 413.7M460.7 414.5L460.7 418M442.1 375.1L439.2 373.8M442.1 375.1L444.6 374.8M500.5 502.7L502.9 504.4M500.5 502.7L497.6 502.7M371.1 513.3L369.4 514.3M371.1 513.3L374.4 514.3M325.6 441.2L327 442.9M325.6 441.2L324.1 443.7M445.5 446.9L447.5 446.8M445.5 446.9L447.8 446.7M486 523.6L483.3 524.9M486 523.6L485.4 520.1M402.7 367.7L405.3 366.8M402.7 367.7L399.8 366.6M450.5 442.9L452.4 443.2M450.5 442.9L452.7 441.7M232.2 464.8L235.1 466.7M232.2 464.8L230.1 465.8M291.2 383.5L292.5 381.3M291.2 383.5L290.7 381.4M448.6 431.7L451.7 431.1M448.6 431.7L448.7 435.1M261.8 629.7L264.8 628.1M261.8 629.7L261.9 630M405.9 510.5L404.7 507.5M405.9 510.5L403.1 512.6M274.3 612.5L274.5 609.7M274.3 612.5L277.7 613.2M432.9 463.6L431 462.6M432.9 463.6L432.1 467M470.2 487.4L468.2 485M470.2 487.4L473.4 486.8M468.6 461.6L471.2 462.1M468.6 461.6L469.7 459M231.2 487.1L230.7 483.8M231.2 487.1L228.9 489M371.4 455.3L369.9 456.5M371.4 455.3L370.3 457.4M278.1 497.7L277.9 499M278.1 497.7L276.2 494.7M249.6 506.8L250 509.7M249.6 506.8L252.8 505.7M438.8 417.7L440.2 415M438.8 417.7L435.5 416.6M359.7 570.5L363 570.1M359.7 570.5L360 570.1M404.3 584.5L407.4 586.2M404.3 584.5L405.2 581.7M336.8 607.2L333.4 608.1M336.8 607.2L338.3 610M452.6 607.3L454.2 608.7M452.6 607.3L450.3 605.1M408.6 389.3L406.3 392M408.6 389.3L409.3 389.2M243.9 635.5L246.7 633.4M243.9 635.5L242.6 634.6M404.9 407.5L403.6 404.3M404.9 407.5L402.3 409.5M377.3 618.3L375.7 616.8M377.3 618.3L375.1 617.7M299.3 435.1L295.9 434.5M299.3 435.1L300.6 432.2M427.5 473.8L430.3 475.6M427.5 473.8L425.1 476.3M261.3 523.8L261.3 522.1M261.3 523.8L258 523.7M479.9 418.5L482.6 417M479.9 418.5L480.5 417.8M485.1 431.4L483.6 428.6M485.1 431.4L486.9 432.9M227.7 387.2L225.1 386.5M227.7 387.2L229.6 389.7M402.3 410.6L403.6 413.7M402.3 410.6L403.6 408.3M340.8 380.7L338.8 383.3M340.8 380.7L343.6 380.7M322 360.7L321.9 360.9M322 360.7L324.8 362.6M343.8 592.6L340.9 590.7M343.8 592.6L343.1 595.5M272.1 526.9L271.5 523.6M272.1 526.9L270.2 527.5M398.4 487L397.3 485.2M398.4 487L400.8 485M287.2 581L288.4 584.1M287.2 581L283.8 581M460.9 576.2L461.1 578.4M460.9 576.2L461 573M305 426L304.9 428M305 426L307.9 424M392.6 449.6L395.7 448.7M392.6 449.6L391 446.6M312.1 612.1L314.7 611.6M312.1 612.1L309.6 613.5M341.5 509L338.5 508M341.5 509L343.3 510.7M380.4 615.5L377.1 615.6M380.4 615.5L380.7 612.5M471.9 590.4L469 591M471.9 590.4L474.3 589.9M247.4 540.7L248.9 538.2M247.4 540.7L248.5 543.7M268.8 462.4L271.3 462.4M268.8 462.4L269.7 464.8M498.9 566.7L499.5 570.1M498.9 566.7L496.1 566.6M436.5 383.3L435 381.2M436.5 383.3L434.4 383.1M283.1 490.1L280.4 492.2M283.1 490.1L283.9 490.5M502 520.7L502.9 523M502 520.7L498.8 519.6M347.5 424L350.1 426.2M347.5 424L348 421.3M280.7 508L280.3 505M280.7 508L284.1 508.2M240.4 427.4L241.3 427.3M240.4 427.4L237.1 428.5M454.1 571.7L453.9 574M454.1 571.7L453.3 568.6M502.2 632.1L502.4 633.6M502.2 632.1L499.6 633.8M316.1 466.8L316.7 464.2M316.1 466.8L317 465.4M233.2 442.3L234.4 439.2M233.2 442.3L230 441.6M415.6 447.6L417.4 450.4M415.6 447.6L412.3 448.4M501.6 472.5L499.5 469.7M501.6 472.5L499.7 475.1M263.4 425.1L260.5 427M263.4 425.1L266 427.4M380.4 528.5L380.9 525.3M380.4 528.5L382.9 528.6M398.6 512L399.8 514.7M398.6 512L395.5 511.2M502.5 445.7L503.4 448.8M502.5 445.7L499.8 444.7M379 637.5L380.6 635.9M379 637.5L377.9 634.8M379.7 566.3L378.2 567.8M379.7 566.3L378.9 568.3M502.4 624.3L502.2 622.2M502.4 624.3L499.5 626.3M236.5 554.9L233.3 555.3M236.5 554.9L238.3 553.3M342.3 606.5L343.7 605M342.3 606.5L339.8 608.6M409.6 380.1L406.5 381.3M409.6 380.1L411.2 378.8M322.3 611.4L320.4 614.2M322.3 611.4L324.5 612.5M409.3 412.6L406.2 414.1M409.3 412.6L411.7 415M350.1 446.2L352.8 448.1M350.1 446.2L347.6 448.5M308.8 509.3L306.4 510.6M308.8 509.3L308.7 505.8M427 457.7L429.4 456.4M427 457.7L425.1 455M469.6 631.4L471.3 628.8M469.6 631.4L470.5 631.2M447.7 423.7L450.5 424.2M447.7 423.7L446.4 426.8M479 374.6L479.3 376.3M479 374.6L480.8 371.6M357.3 478.3L356.4 476.9M357.3 478.3L356.1 481.6M223.4 463.1L222.7 466.4M223.4 463.1L226.6 462.6M343.9 636.8L345.5 638.5M343.9 636.8L340.5 637.3M225.3 361.3L222.9 358.9M225.3 361.3L224.1 363M225.9 443L228.5 440.6M225.9 443L227.5 446M442 470.9L439.4 469.9M442 470.9L441.8 474.4M236.1 385.3L238.2 388M236.1 385.3L233.5 385.5M455.6 417.2L453.4 416.4M455.6 417.2L457 414.1M269.5 371.6L271 373.9M269.5 371.6L270.9 368.6M333.6 555.4L336.7 554.2M333.6 555.4L334.2 558.7M405.3 616.8L401.8 616.5M405.3 616.8L406.6 613.7M313.6 379L313.8 375.7M313.6 379L313.1 378.6M381.2 453.3L380.8 449.9M381.2 453.3L378.9 455M431.4 547.5L434.4 548.4M431.4 547.5L432.4 545.7M296.9 552.9L294.1 552.1M296.9 552.9L299 554.7M313.8 385.4L316.1 384.3M313.8 385.4L310.7 384.2M274.4 493.9L274.1 491.6M274.4 493.9L276.4 496.5M485.3 514.5L488.4 514.5M485.3 514.5L486 515.8M357.3 540.9L360.2 539M357.3 540.9L356.6 541.4M422.3 462.7L420.7 465.8M422.3 462.7L419.8 460.3M459 594.2L460.1 596.3M459 594.2L455.9 595.6M356.4 566.4L357.6 566.5M356.4 566.4L356.5 569.8M279.4 445.5L279.5 447.5M279.4 445.5L278.5 447.7M333 515.5L329.9 514.8M333 515.5L335.2 516.1M440.4 463.6L438.4 465.5M440.4 463.6L439.5 460.3M370.3 505.3L369.1 506.1M370.3 505.3L372 508.2M260.5 360L259 360.9M260.5 360L259.1 358M288.5 528L285.1 528.8M288.5 528L289.9 529.4M376.6 568.9L373.8 570.6M376.6 568.9L375.5 567.3M410.3 549.6L410.3 549.4M410.3 549.6L411.6 552.8" stroke="#d84040" stroke-width="0.8" fill="none"/>
<path d="M372.4 613.3L370.8 616.4M372.1 608.8L370.2 607.4M485.9 633.1L482.5 633.3M490.2 636L491 639.1M406.7 392.6L406.3 395.3M404 388.3L400.9 386.7M340.1 588.5L338.1 588.8M339.9 587.5L337.6 586.9M261 495.2L258.5 494.6M264.9 492.7L266.4 489.6M380.1 563.5L376.6 563.3M384.9 565.2L386.2 566.8M476.2 468L479.2 467.1M474.4 470.5L475.4 472.1M226.6 625.2L228.2 622.9M222.4 625.6L220 623.7M251 557L251.3 553.6M252.2 562L253.7 563.5M296.5 416.7L299.3 415.9M290.9 416.7L288.2 416M492.1 357.6L489.2 356M496.9 357.8L498.8 356.4M425.7 513.8L425 510.7M423.9 517.3L421.5 517.6M349.5 365.4L352.6 366.7M344.1 366.2L341.8 368.5M389 628.4L388.7 631.5M388.8 625.9L388.3 626.5M450.4 578L453.3 578.1M446.8 574.5L446 571.1M420.1 579.7L420.1 583M419.8 577L419.5 577.5M448.1 587.7L447.4 588.5M451.1 584.4L453.5 581.8M267.2 452.2L270.7 452.4M263 450.7L262.3 449.3M376 448.8L373.1 447.7M381.3 449.8L383.9 449.9M244.5 358.9L244.5 357.1M241.1 360.8L237.7 360.9M470.7 362.1L467.3 362.6M475.8 362.9L477.4 364.2M297.2 516.4L296.9 519.5M295.3 513.4L293.1 513.5M357.6 479.2L355.9 482.1M362.2 476.3L365.2 476.2M303.7 405.6L301.9 405.6M308.8 405.7L312.2 405.8M293.4 517.3L293.9 514.6M295.7 522.2L298.4 524.3M256.3 619.5L255.4 622.9M254.2 614.5L251.2 612.8M255.9 432.4L258.9 431.2M250.4 432.4L248 431.2M288.2 357.6L288.2 356M285 359.7L281.8 360.2M366.8 577.7L365.4 580.9M365.7 572.3L363.4 570M285.5 523.9L286.7 524.1M283.5 527L282.7 530.3M478.9 498.5L477.8 498.4M480.6 502.1L481.2 505.5M261.9 386.8L263 385M263.6 388.7L266.3 388.7M288.2 363.6L284.9 362.6M291.7 365.7L292 366.6M436.3 397.8L435.1 400M436.5 392.4L435.4 389.2M485.1 596.6L485.8 593.5M485.4 602L486.5 604.3M470.4 451.7L472.7 449.5M465.5 454.1L462.9 454.2M459.1 413.7L457.5 412.8M460.7 418L460.7 421.5M439.2 373.8L436.4 372.5M444.6 374.8L447.1 374.5M502.9 504.4L505.3 506.1M497.6 502.7L494.8 502.7M369.4 514.3L367.8 515.4M374.4 514.3L377.7 515.3M327 442.9L328.4 444.5M324.1 443.7L322.7 446.3M447.5 446.8L449.4 446.7M447.8 446.7L450.2 446.5M483.3 524.9L480.6 526.3M485.4 520.1L484.9 516.7M405.3 366.8L407.8 366M399.8 366.6L396.9 365.5M452.4 443.2L454.3 443.5M452.7 441.7L455 440.6M235.1 466.7L238 468.7M230.1 465.8L228 466.7M292.5 381.3L293.9 379.2M290.7 381.4L290.3 379.4M451.7 431.1L454.7 430.6M448.7 435.1L448.8 438.5M264.8 628.1L267.8 626.5M261.9 630L262 630.3M404.7 507.5L403.5 504.4M403.1 512.6L400.3 514.7M274.5 609.7L274.7 606.8M277.7 613.2L281 613.9M431 462.6L429.2 461.6M432.1 467L431.4 470.4M468.2 485L466.3 482.6M473.4 486.8L476.7 486.2M471.2 462.1L473.8 462.6M469.7 459L470.8 456.4M230.7 483.8L230.2 480.5M228.9 489L226.6 490.8M369.9 456.5L368.4 457.8M370.3 457.4L369.1 459.5M277.9 499L277.8 500.4M276.2 494.7L274.4 491.7M250 509.7L250.4 512.5M252.8 505.7L256.1 504.6M440.2 415L441.6 412.3M435.5 416.6L432.3 415.5M363 570.1L366.3 569.7M360 570.1L360.2 569.6M407.4 586.2L410.4 587.8M405.2 581.7L406.1 579M333.4 608.1L330 608.9M338.3 610L339.9 612.8M454.2 608.7L455.8 610.2M450.3 605.1L447.9 602.9M406.3 392L404.1 394.7M409.3 389.2L410.1 389.1M246.7 633.4L249.5 631.4M242.6 634.6L241.3 633.7M403.6 404.3L402.2 401M402.3 409.5L399.8 411.5M375.7 616.8L374.1 615.3M375.1 617.7L372.9 617.1M295.9 434.5L292.5 433.9M300.6 432.2L301.9 429.2M430.3 475.6L433.1 477.4M425.1 476.3L422.7 478.8M261.3 522.1L261.3 520.4M258 523.7L254.7 523.7M482.6 417L485.3 415.5M480.5 417.8L481.1 417.2M483.6 428.6L482.2 425.8M486.9 432.9L488.7 434.4M225.1 386.5L222.6 385.8M229.6 389.7L231.5 392.2M403.6 413.7L405 416.8M403.6 408.3L404.8 406M338.8 383.3L336.8 385.8M343.6 380.7L346.5 380.8M321.9 360.9L321.8 361.1M324.8 362.6L327.5 364.6M340.9 590.7L338.1 588.7M343.1 595.5L342.5 598.4M271.5 523.6L270.9 520.2M270.2 527.5L268.3 528.2M397.3 485.2L396.2 483.3M400.8 485L403.2 483M288.4 584.1L289.6 587.1M283.8 581L280.4 581M461.1 578.4L461.3 580.7M461 573L461.1 569.9M304.9 428L304.8 430M307.9 424L310.8 422.1M395.7 448.7L398.8 447.8M391 446.6L389.4 443.6M314.7 611.6L317.4 611.1M309.6 613.5L307 614.9M338.5 508L335.6 506.9M343.3 510.7L345 512.4M377.1 615.6L373.7 615.8M380.7 612.5L381 609.5M469 591L466 591.7M474.3 589.9L476.7 589.5M248.9 538.2L250.4 535.7M248.5 543.7L249.6 546.7M271.3 462.4L273.9 462.5M269.7 464.8L270.6 467.3M499.5 570.1L500.1 573.6M496.1 566.6L493.4 566.4M435 381.2L433.5 379.1M434.4 383.1L432.4 382.8M280.4 492.2L277.7 494.4M283.9 490.5L284.6 491M502.9 523L503.8 525.3M498.8 519.6L495.6 518.5M350.1 426.2L352.7 428.4M348 421.3L348.4 418.6M280.3 505L279.9 501.9M284.1 508.2L287.5 508.4M241.3 427.3L242.1 427.3M237.1 428.5L233.7 429.5M453.9 574L453.7 576.4M453.3 568.6L452.5 565.6M502.4 633.6L502.6 635M499.6 633.8L497 635.4M316.7 464.2L317.3 461.7M317 465.4L317.9 464.1M234.4 439.2L235.6 436.2M230 441.6L226.8 440.8M417.4 450.4L419.2 453.1M412.3 448.4L408.9 449.1M499.5 469.7L497.4 466.9M499.7 475.1L497.7 477.8M260.5 427L257.6 428.9M266 427.4L268.5 429.7M380.9 525.3L381.3 522.1M382.9 528.6L385.3 528.8M399.8 514.7L401 517.4M395.5 511.2L392.4 510.4M503.4 448.8L504.3 452M499.8 444.7L497 443.7M380.6 635.9L382.2 634.3M377.9 634.8L376.7 632.2M378.2 567.8L376.7 569.3M378.9 568.3L378.1 570.4M502.2 622.2L501.9 620.2M499.5 626.3L496.7 628.3M233.3 555.3L230.1 555.6M238.3 553.3L240.2 551.8M343.7 605L345.1 603.5M339.8 608.6L337.4 610.8M406.5 381.3L403.4 382.4M411.2 378.8L412.8 377.5M320.4 614.2L318.6 617M324.5 612.5L326.8 613.6M406.2 414.1L403.2 415.7M411.7 415L414.1 417.4M352.8 448.1L355.6 450M347.6 448.5L345.1 450.9M306.4 510.6L304 511.9M308.7 505.8L308.5 502.4M429.4 456.4L431.9 455M425.1 455L423.2 452.2M471.3 628.8L473 626.2M470.5 631.2L471.4 630.9M450.5 424.2L453.2 424.8M446.4 426.8L445.1 430M479.3 376.3L479.6 378.1M480.8 371.6L482.6 368.7M356.4 476.9L355.5 475.6M356.1 481.6L355 484.9M222.7 466.4L221.9 469.7M226.6 462.6L229.9 462M345.5 638.5L347 640.2M340.5 637.3L337.1 637.8M222.9 358.9L220.5 356.4M224.1 363L222.9 364.7M228.5 440.6L231.1 438.3M227.5 446L229.1 449M439.4 469.9L436.7 468.8M441.8 474.4L441.6 477.9M238.2 388L240.3 390.7M233.5 385.5L230.9 385.7M453.4 416.4L451.3 415.6M457 414.1L458.4 411.1M271 373.9L272.5 376.2M270.9 368.6L272.4 365.5M336.7 554.2L339.8 553.1M334.2 558.7L334.9 562M401.8 616.5L398.4 616.1M406.6 613.7L407.9 610.5M313.8 375.7L313.9 372.5M313.1 378.6L312.5 378.2M380.8 449.9L380.4 446.6M378.9 455L376.6 456.8M434.4 548.4L437.3 549.4M432.4 545.7L433.5 543.9M294.1 552.1L291.3 551.2M299 554.7L301.1 556.4M316.1 384.3L318.4 383.3M310.7 384.2L307.6 383.1M274.1 491.6L273.9 489.4M276.4 496.5L278.4 499.1M488.4 514.5L491.6 514.5M486 515.8L486.6 517.1M360.2 539L363.2 537.1M356.6 541.4L355.8 541.9M420.7 465.8L419 468.8M419.8 460.3L417.2 458M460.1 596.3L461.3 598.4M455.9 595.6L452.7 596.9M357.6 566.5L358.9 566.5M356.5 569.8L356.6 573.2M279.5 447.5L279.7 449.4M278.5 447.7L277.5 449.9M329.9 514.8L326.9 514.2M335.2 516.1L337.4 516.8M438.4 465.5L436.4 467.5M439.5 460.3L438.7 457M369.1 506.1L367.9 506.9M372 508.2L373.7 511M259 360.9L257.5 361.9M259.1 358L257.7 356M285.1 528.8L281.7 529.5M289.9 529.4L291.4 530.7M373.8 570.6L371 572.3M375.5 567.3L374.3 565.6M410.3 549.4L410.2 549.2M411.6 552.8L412.8 556" stroke="#d8d8d8" stroke-width="0.7" fill="none"/>
<g fill="url(#hg)"><circle cx="491" cy="639.1" r="1.3"/><circle cx="406.3" cy="395.3" r="1.3"/><circle cx="338.1" cy="588.8" r="1.3"/><circle cx="386.2" cy="566.8" r="1.3"/><circle cx="475.4" cy="472.1" r="1.3"/><circle cx="220" cy="623.7" r="1.3"/><circle cx="253.7" cy="563.5" r="1.3"/><circle cx="498.8" cy="356.4" r="1.3"/><circle cx="421.5" cy="517.6" r="1.3"/><circle cx="388.7" cy="631.5" r="1.3"/><circle cx="453.3" cy="578.1" r="1.3"/><circle cx="420.1" cy="583" r="1.3"/><circle cx="237.7" cy="360.9" r="1.3"/><circle cx="293.1" cy="513.5" r="1.3"/><circle cx="355.9" cy="482.1" r="1.3"/><circle cx="365.2" cy="476.2" r="1.3"/><circle cx="301.9" cy="405.6" r="1.3"/><circle cx="312.2" cy="405.8" r="1.3"/><circle cx="293.9" cy="514.6" r="1.3"/><circle cx="298.4" cy="524.3" r="1.3"/><circle cx="258.9" cy="431.2" r="1.3"/><circle cx="248" cy="431.2" r="1.3"/><circle cx="288.2" cy="356" r="1.3"/><circle cx="286.7" cy="524.1" r="1.3"/><circle cx="477.8" cy="498.4" r="1.3"/><circle cx="266.3" cy="388.7" r="1.3"/><circle cx="435.1" cy="400" r="1.3"/><circle cx="435.4" cy="389.2" r="1.3"/><circle cx="436.4" cy="372.5" r="1.3"/><circle cx="447.1" cy="374.5" r="1.3"/><circle cx="505.3" cy="506.1" r="1.3"/><circle cx="494.8" cy="502.7" r="1.3"/><circle cx="322.7" cy="446.3" r="1.3"/><circle cx="449.4" cy="446.7" r="1.3"/><circle cx="480.6" cy="526.3" r="1.3"/><circle cx="455" cy="440.6" r="1.3"/><circle cx="228" cy="466.7" r="1.3"/><circle cx="293.9" cy="379.2" r="1.3"/><circle cx="454.7" cy="430.6" r="1.3"/><circle cx="262" cy="630.3" r="1.3"/><circle cx="274.7" cy="606.8" r="1.3"/><circle cx="429.2" cy="461.6" r="1.3"/><circle cx="470.8" cy="456.4" r="1.3"/><circle cx="230.2" cy="480.5" r="1.3"/><circle cx="226.6" cy="490.8" r="1.3"/><circle cx="369.1" cy="459.5" r="1.3"/><circle cx="277.8" cy="500.4" r="1.3"/><circle cx="432.3" cy="415.5" r="1.3"/><circle cx="360.2" cy="569.6" r="1.3"/><circle cx="406.1" cy="579" r="1.3"/><circle cx="339.9" cy="612.8" r="1.3"/><circle cx="455.8" cy="610.2" r="1.3"/><circle cx="447.9" cy="602.9" r="1.3"/><circle cx="372.9" cy="617.1" r="1.3"/><circle cx="301.9" cy="429.2" r="1.3"/><circle cx="433.1" cy="477.4" r="1.3"/><circle cx="254.7" cy="523.7" r="1.3"/><circle cx="485.3" cy="415.5" r="1.3"/><circle cx="482.2" cy="425.8" r="1.3"/><circle cx="488.7" cy="434.4" r="1.3"/><circle cx="222.6" cy="385.8" r="1.3"/><circle cx="231.5" cy="392.2" r="1.3"/><circle cx="405" cy="416.8" r="1.3"/><circle cx="404.8" cy="406" r="1.3"/><circle cx="336.8" cy="385.8" r="1.3"/><circle cx="346.5" cy="380.8" r="1.3"/><circle cx="321.8" cy="361.1" r="1.3"/><circle cx="270.9" cy="520.2" r="1.3"/><circle cx="396.2" cy="483.3" r="1.3"/><circle cx="461.3" cy="580.7" r="1.3"/><circle cx="461.1" cy="569.9" r="1.3"/><circle cx="335.6" cy="506.9" r="1.3"/><circle cx="345" cy="512.4" r="1.3"/><circle cx="373.7" cy="615.8" r="1.3"/><circle cx="273.9" cy="462.5" r="1.3"/><circle cx="432.4" cy="382.8" r="1.3"/><circle cx="284.6" cy="491" r="1.3"/><circle cx="503.8" cy="525.3" r="1.3"/><circle cx="495.6" cy="518.5" r="1.3"/><circle cx="352.7" cy="428.4" r="1.3"/><circle cx="348.4" cy="418.6" r="1.3"/><circle cx="279.9" cy="501.9" r="1.3"/><circle cx="242.1" cy="427.3" r="1.3"/><circle cx="502.6" cy="635" r="1.3"/><circle cx="317.3" cy="461.7" r="1.3"/><circle cx="226.8" cy="440.8" r="1.3"/><circle cx="419.2" cy="453.1" r="1.3"/><circle cx="497.7" cy="477.8" r="1.3"/><circle cx="385.3" cy="528.8" r="1.3"/><circle cx="382.2" cy="634.3" r="1.3"/><circle cx="376.7" cy="569.3" r="1.3"/><circle cx="501.9" cy="620.2" r="1.3"/><circle cx="230.1" cy="555.6" r="1.3"/><circle cx="240.2" cy="551.8" r="1.3"/><circle cx="403.4" cy="382.4" r="1.3"/><circle cx="412.8" cy="377.5" r="1.3"/><circle cx="326.8" cy="613.6" r="1.3"/><circle cx="345.1" cy="450.9" r="1.3"/><circle cx="304" cy="511.9" r="1.3"/><circle cx="431.9" cy="455" r="1.3"/><circle cx="471.4" cy="630.9" r="1.3"/><circle cx="453.2" cy="424.8" r="1.3"/><circle cx="221.9" cy="469.7" r="1.3"/><circle cx="229.9" cy="462" r="1.3"/><circle cx="229.1" cy="449" r="1.3"/><circle cx="436.7" cy="468.8" r="1.3"/><circle cx="240.3" cy="390.7" r="1.3"/><circle cx="230.9" cy="385.7" r="1.3"/><circle cx="458.4" cy="411.1" r="1.3"/><circle cx="339.8" cy="553.1" r="1.3"/><circle cx="407.9" cy="610.5" r="1.3"/><circle cx="312.5" cy="378.2" r="1.3"/><circle cx="380.4" cy="446.6" r="1.3"/><circle cx="376.6" cy="456.8" r="1.3"/><circle cx="437.3" cy="549.4" r="1.3"/><circle cx="291.3" cy="551.2" r="1.3"/><circle cx="301.1" cy="556.4" r="1.3"/><circle cx="486.6" cy="517.1" r="1.3"/><circle cx="461.3" cy="598.4" r="1.3"/><circle cx="356.6" cy="573.2" r="1.3"/><circle cx="279.7" cy="449.4" r="1.3"/><circle cx="367.9" cy="506.9" r="1.3"/><circle cx="257.5" cy="361.9" r="1.3"/><circle cx="291.4" cy="530.7" r="1.3"/><circle cx="374.3" cy="565.6" r="1.3"/></g>
<g fill="url(#og)"><circle cx="374" cy="610.3" r="3.6"/><circle cx="489.4" cy="632.9" r="3.6"/><circle cx="407.2" cy="389.9" r="3.6"/><circle cx="342.1" cy="588.1" r="3.6"/><circle cx="263.4" cy="495.8" r="3.6"/><circle cx="383.5" cy="563.7" r="3.6"/><circle cx="473.3" cy="468.8" r="3.6"/><circle cx="224.9" cy="627.5" r="3.6"/><circle cx="250.7" cy="560.4" r="3.6"/><circle cx="293.7" cy="417.4" r="3.6"/><circle cx="495.1" cy="359.3" r="3.6"/><circle cx="426.3" cy="516.9" r="3.6"/><circle cx="346.3" cy="364" r="3.6"/><circle cx="389.4" cy="625.3" r="3.6"/><circle cx="447.6" cy="577.9" r="3.6"/><circle cx="420" cy="576.5" r="3.6"/><circle cx="448.7" cy="586.9" r="3.6"/><circle cx="263.7" cy="452.1" r="3.6"/><circle cx="378.8" cy="449.8" r="3.6"/><circle cx="244.5" cy="360.7" r="3.6"/><circle cx="474.1" cy="361.6" r="3.6"/><circle cx="297.5" cy="513.2" r="3.6"/><circle cx="359.3" cy="476.3" r="3.6"/><circle cx="305.5" cy="405.6" r="3.6"/><circle cx="293" cy="520.1" r="3.6"/><circle cx="257.2" cy="616.1" r="3.6"/><circle cx="252.8" cy="433.6" r="3.6"/><circle cx="288.2" cy="359.2" r="3.6"/><circle cx="368.1" cy="574.6" r="3.6"/><circle cx="284.3" cy="523.8" r="3.6"/><circle cx="480" cy="498.7" r="3.6"/><circle cx="260.8" cy="388.7" r="3.6"/><circle cx="291.5" cy="364.7" r="3.6"/><circle cx="437.6" cy="395.5" r="3.6"/><circle cx="484.3" cy="599.7" r="3.6"/><circle cx="468.1" cy="454" r="3.6"/><circle cx="460.7" cy="414.5" r="3.6"/><circle cx="442.1" cy="375.1" r="3.6"/><circle cx="500.5" cy="502.7" r="3.6"/><circle cx="371.1" cy="513.3" r="3.6"/><circle cx="325.6" cy="441.2" r="3.6"/><circle cx="445.5" cy="446.9" r="3.6"/><circle cx="486" cy="523.6" r="3.6"/><circle cx="402.7" cy="367.7" r="3.6"/><circle cx="450.5" cy="442.9" r="3.6"/><circle cx="232.2" cy="464.8" r="3.6"/><circle cx="291.2" cy="383.5" r="3.6"/><circle cx="448.6" cy="431.7" r="3.6"/><circle cx="261.8" cy="629.7" r="3.6"/><circle cx="405.9" cy="510.5" r="3.6"/><circle cx="274.3" cy="612.5" r="3.6"/><circle cx="432.9" cy="463.6" r="3.6"/><circle cx="470.2" cy="487.4" r="3.6"/><circle cx="468.6" cy="461.6" r="3.6"/><circle cx="231.2" cy="487.1" r="3.6"/><circle cx="371.4" cy="455.3" r="3.6"/><circle cx="278.1" cy="497.7" r="3.6"/><circle cx="249.6" cy="506.8" r="3.6"/><circle cx="438.8" cy="417.7" r="3.6"/><circle cx="359.7" cy="570.5" r="3.6"/><circle cx="404.3" cy="584.5" r="3.6"/><circle cx="336.8" cy="607.2" r="3.6"/><circle cx="452.6" cy="607.3" r="3.6"/><circle cx="408.6" cy="389.3" r="3.6"/><circle cx="243.9" cy="635.5" r="3.6"/><circle cx="404.9" cy="407.5" r="3.6"/><circle cx="377.3" cy="618.3" r="3.6"/><circle cx="299.3" cy="435.1" r="3.6"/><circle cx="427.5" cy="473.8" r="3.6"/><circle cx="261.3" cy="523.8" r="3.6"/><circle cx="479.9" cy="418.5" r="3.6"/><circle cx="485.1" cy="431.4" r="3.6"/><circle cx="227.7" cy="387.2" r="3.6"/><circle cx="402.3" cy="410.6" r="3.6"/><circle cx="340.8" cy="380.7" r="3.6"/><circle cx="322" cy="360.7" r="3.6"/><circle cx="343.8" cy="592.6" r="3.6"/><circle cx="272.1" cy="526.9" r="3.6"/><circle cx="398.4" cy="487" r="3.6"/><circle cx="287.2" cy="581" r="3.6"/><circle cx="460.9" cy="576.2" r="3.6"/><circle cx="305" cy="426" r="3.6"/><circle cx="392.6" cy="449.6" r="3.6"/><circle cx="312.1" cy="612.1" r="3.6"/><circle cx="341.5" cy="509" r="3.6"/><circle cx="380.4" cy="615.5" r="3.6"/><circle cx="471.9" cy="590.4" r="3.6"/><circle cx="247.4" cy="540.7" r="3.6"/><circle cx="268.8" cy="462.4" r="3.6"/><circle cx="498.9" cy="566.7" r="3.6"/><circle cx="436.5" cy="383.3" r="3.6"/><circle cx="283.1" cy="490.1" r="3.6"/><circle cx="502" cy="520.7" r="3.6"/><circle cx="347.5" cy="424" r="3.6"/><circle cx="280.7" cy="508" r="3.6"/><circle cx="240.4" cy="427.4" r="3.6"/><circle cx="454.1" cy="571.7" r="3.6"/><circle cx="502.2" cy="632.1" r="3.6"/><circle cx="316.1" cy="466.8" r="3.6"/><circle cx="233.2" cy="442.3" r="3.6"/><circle cx="415.6" cy="447.6" r="3.6"/><circle cx="501.6" cy="472.5" r="3.6"/><circle cx="263.4" cy="425.1" r="3.6"/><circle cx="380.4" cy="528.5" r="3.6"/><circle cx="398.6" cy="512" r="3.6"/><circle cx="502.5" cy="445.7" r="3.6"/><circle cx="379" cy="637.5" r="3.6"/><circle cx="379.7" cy="566.3" r="3.6"/><circle cx="502.4" cy="624.3" r="3.6"/><circle cx="236.5" cy="554.9" r="3.6"/><circle cx="342.3" cy="606.5" r="3.6"/><circle cx="409.6" cy="380.1" r="3.6"/><circle cx="322.3" cy="611.4" r="3.6"/><circle cx="409.3" cy="412.6" r="3.6"/><circle cx="350.1" cy="446.2" r="3.6"/><circle cx="308.8" cy="509.3" r="3.6"/><circle cx="427" cy="457.7" r="3.6"/><circle cx="469.6" cy="631.4" r="3.6"/><circle cx="447.7" cy="423.7" r="3.6"/><circle cx="479" cy="374.6" r="3.6"/><circle cx="357.3" cy="478.3" r="3.7"/><circle cx="223.4" cy="463.1" r="3.7"/><circle cx="343.9" cy="636.8" r="3.7"/><circle cx="225.3" cy="361.3" r="3.7"/><circle cx="225.9" cy="443" r="3.7"/><circle cx="442" cy="470.9" r="3.7"/><circle cx="236.1" cy="385.3" r="3.7"/><circle cx="455.6" cy="417.2" r="3.7"/><circle cx="269.5" cy="371.6" r="3.7"/><circle cx="333.6" cy="555.4" r="3.7"/><circle cx="405.3" cy="616.8" r="3.7"/><circle cx="313.6" cy="379" r="3.7"/><circle cx="381.2" cy="453.3" r="3.7"/><circle cx="431.4" cy="547.5" r="3.7"/><circle cx="296.9" cy="552.9" r="3.7"/><circle cx="313.8" cy="385.4" r="3.7"/><circle cx="274.4" cy="493.9" r="3.7"/><circle cx="485.3" cy="514.5" r="3.7"/><circle cx="357.3" cy="540.9" r="3.7"/><circle cx="422.3" cy="462.7" r="3.7"/><circle cx="459" cy="594.2" r="3.7"/><circle cx="356.4" cy="566.4" r="3.7"/><circle cx="279.4" cy="445.5" r="3.7"/><circle cx="333" cy="515.5" r="3.7"/><circle cx="440.4" cy="463.6" r="3.7"/><circle cx="370.3" cy="505.3" r="3.7"/><circle cx="260.5" cy="360" r="3.7"/><circle cx="288.5" cy="528" r="3.7"/><circle cx="376.6" cy="568.9" r="3.7"/><circle cx="410.3" cy="549.6" r="3.7"/></g>
<g fill="url(#hg)"><circle cx="370.8" cy="616.4" r="1.3"/><circle cx="370.2" cy="607.4" r="1.3"/><circle cx="482.5" cy="633.3" r="1.3"/><circle cx="400.9" cy="386.7" r="1.3"/><circle cx="337.6" cy="586.9" r="1.3"/><circle cx="258.5" cy="494.6" r="1.3"/><circle cx="266.4" cy="489.6" r="1.3"/><circle cx="376.6" cy="563.3" r="1.3"/><circle cx="479.2" cy="467.1" r="1.3"/><circle cx="228.2" cy="622.9" r="1.3"/><circle cx="251.3" cy="553.6" r="1.3"/><circle cx="299.3" cy="415.9" r="1.3"/><circle cx="288.2" cy="416" r="1.3"/><circle cx="489.2" cy="356" r="1.3"/><circle cx="425" cy="510.7" r="1.3"/><circle cx="352.6" cy="366.7" r="1.3"/><circle cx="341.8" cy="368.5" r="1.3"/><circle cx="388.3" cy="626.5" r="1.3"/><circle cx="446" cy="571.1" r="1.3"/><circle cx="419.5" cy="577.5" r="1.3"/><circle cx="447.4" cy="588.5" r="1.3"/><circle cx="453.5" cy="581.8" r="1.3"/><circle cx="270.7" cy="452.4" r="1.3"/><circle cx="262.3" cy="449.3" r="1.3"/><circle cx="373.1" cy="447.7" r="1.3"/><circle cx="383.9" cy="449.9" r="1.3"/><circle cx="244.5" cy="357.1" r="1.3"/><circle cx="467.3" cy="362.6" r="1.3"/><circle cx="477.4" cy="364.2" r="1.3"/><circle cx="296.9" cy="519.5" r="1.3"/><circle cx="255.4" cy="622.9" r="1.3"/><circle cx="251.2" cy="612.8" r="1.3"/><circle cx="281.8" cy="360.2" r="1.3"/><circle cx="365.4" cy="580.9" r="1.3"/><circle cx="363.4" cy="570" r="1.3"/><circle cx="282.7" cy="530.3" r="1.3"/><circle cx="481.2" cy="505.5" r="1.3"/><circle cx="263" cy="385" r="1.3"/><circle cx="284.9" cy="362.6" r="1.3"/><circle cx="292" cy="366.6" r="1.3"/><circle cx="485.8" cy="593.5" r="1.3"/><circle cx="486.5" cy="604.3" r="1.3"/><circle cx="472.7" cy="449.5" r="1.3"/><circle cx="462.9" cy="454.2" r="1.3"/><circle cx="457.5" cy="412.8" r="1.3"/><circle cx="460.7" cy="421.5" r="1.3"/><circle cx="367.8" cy="515.4" r="1.3"/><circle cx="377.7" cy="515.3" r="1.3"/><circle cx="328.4" cy="444.5" r="1.3"/><circle cx="450.2" cy="446.5" r="1.3"/><circle cx="484.9" cy="516.7" r="1.3"/><circle cx="407.8" cy="366" r="1.3"/><circle cx="396.9" cy="365.5" r="1.3"/><circle cx="454.3" cy="443.5" r="1.3"/><circle cx="238" cy="468.7" r="1.3"/><circle cx="290.3" cy="379.4" r="1.3"/><circle cx="448.8" cy="438.5" r="1.3"/><circle cx="267.8" cy="626.5" r="1.3"/><circle cx="403.5" cy="504.4" r="1.3"/><circle cx="400.3" cy="514.7" r="1.3"/><circle cx="281" cy="613.9" r="1.3"/><circle cx="431.4" cy="470.4" r="1.3"/><circle cx="466.3" cy="482.6" r="1.3"/><circle cx="476.7" cy="486.2" r="1.3"/><circle cx="473.8" cy="462.6" r="1.3"/><circle cx="368.4" cy="457.8" r="1.3"/><circle cx="274.4" cy="491.7" r="1.3"/><circle cx="250.4" cy="512.5" r="1.3"/><circle cx="256.1" cy="504.6" r="1.3"/><circle cx="441.6" cy="412.3" r="1.3"/><circle cx="366.3" cy="569.7" r="1.3"/><circle cx="410.4" cy="587.8" r="1.3"/><circle cx="330" cy="608.9" r="1.3"/><circle cx="404.1" cy="394.7" r="1.3"/><circle cx="410.1" cy="389.1" r="1.3"/><circle cx="249.5" cy="631.4" r="1.3"/><circle cx="241.3" cy="633.7" r="1.3"/><circle cx="402.2" cy="401" r="1.3"/><circle cx="399.8" cy="411.5" r="1.3"/><circle cx="374.1" cy="615.3" r="1.3"/><circle cx="292.5" cy="433.9" r="1.3"/><circle cx="422.7" cy="478.8" r="1.3"/><circle cx="261.3" cy="520.4" r="1.3"/><circle cx="481.1" cy="417.2" r="1.3"/><circle cx="327.5" cy="364.6" r="1.3"/><circle cx="338.1" cy="588.7" r="1.3"/><circle cx="342.5" cy="598.4" r="1.3"/><circle cx="268.3" cy="528.2" r="1.3"/><circle cx="403.2" cy="483" r="1.3"/><circle cx="289.6" cy="587.1" r="1.3"/><circle cx="280.4" cy="581" r="1.3"/><circle cx="304.8" cy="430" r="1.3"/><circle cx="310.8" cy="422.1" r="1.3"/><circle cx="398.8" cy="447.8" r="1.3"/><circle cx="389.4" cy="443.6" r="1.3"/><circle cx="317.4" cy="611.1" r="1.3"/><circle cx="307" cy="614.9" r="1.3"/><circle cx="381" cy="609.5" r="1.3"/><circle cx="466" cy="591.7" r="1.3"/><circle cx="476.7" cy="589.5" r="1.3"/><circle cx="250.4" cy="535.7" r="1.3"/><circle cx="249.6" cy="546.7" r="1.3"/><circle cx="270.6" cy="467.3" r="1.3"/><circle cx="500.1" cy="573.6" r="1.3"/><circle cx="493.4" cy="566.4" r="1.3"/><circle cx="433.5" cy="379.1" r="1.3"/><circle cx="277.7" cy="494.4" r="1.3"/><circle cx="287.5" cy="508.4" r="1.3"/><circle cx="233.7" cy="429.5" r="1.3"/><circle cx="453.7" cy="576.4" r="1.3"/><circle cx="452.5" cy="565.6" r="1.3"/><circle cx="497" cy="635.4" r="1.3"/><circle cx="317.9" cy="464.1" r="1.3"/><circle cx="235.6" cy="436.2" r="1.3"/><circle cx="408.9" cy="449.1" r="1.3"/><circle cx="497.4" cy="466.9" r="1.3"/><circle cx="257.6" cy="428.9" r="1.3"/><circle cx="268.5" cy="429.7" r="1.3"/><circle cx="381.3" cy="522.1" r="1.3"/><circle cx="401" cy="517.4" r="1.3"/><circle cx="392.4" cy="510.4" r="1.3"/><circle cx="504.3" cy="452" r="1.3"/><circle cx="497" cy="443.7" r="1.3"/><circle cx="376.7" cy="632.2" r="1.3"/><circle cx="378.1" cy="570.4" r="1.3"/><circle cx="496.7" cy="628.3" r="1.3"/><circle cx="345.1" cy="603.5" r="1.3"/><circle cx="337.4" cy="610.8" r="1.3"/><circle cx="318.6" cy="617" r="1.3"/><circle cx="403.2" cy="415.7" r="1.3"/><circle cx="414.1" cy="417.4" r="1.3"/><circle cx="355.6" cy="450" r="1.3"/><circle cx="308.5" cy="502.4" r="1.3"/><circle cx="423.2" cy="452.2" r="1.3"/><circle cx="473" cy="626.2" r="1.3"/><circle cx="445.1" cy="430" r="1.3"/><circle cx="479.6" cy="378.1" r="1.3"/><circle cx="482.6" cy="368.7" r="1.3"/><circle cx="355.5" cy="475.6" r="1.3"/><circle cx="355" cy="484.9" r="1.3"/><circle cx="347" cy="640.2" r="1.3"/><circle cx="337.1" cy="637.8" r="1.3"/><circle cx="220.5" cy="356.4" r="1.3"/><circle cx="222.9" cy="364.7" r="1.3"/><circle cx="231.1" cy="438.3" r="1.3"/><circle cx="441.6" cy="477.9" r="1.3"/><circle cx="451.3" cy="415.6" r="1.3"/><circle cx="272.5" cy="376.2" r="1.3"/><circle cx="272.4" cy="365.5" r="1.3"/><circle cx="334.9" cy="562" r="1.3"/><circle cx="398.4" cy="616.1" r="1.3"/><circle cx="313.9" cy="372.5" r="1.3"/><circle cx="433.5" cy="543.9" r="1.3"/><circle cx="318.4" cy="383.3" r="1.3"/><circle cx="307.6" cy="383.1" r="1.3"/><circle cx="273.9" cy="489.4" r="1.3"/><circle cx="278.4" cy="499.1" r="1.3"/><circle cx="491.6" cy="514.5" r="1.3"/><circle cx="363.2" cy="537.1" r="1.3"/><circle cx="355.8" cy="541.9" r="1.3"/><circle cx="419" cy="468.8" r="1.3"/><circle cx="417.2" cy="458" r="1.3"/><circle cx="452.7" cy="596.9" r="1.3"/><circle cx="358.9" cy="566.5" r="1.3"/><circle cx="277.5" cy="449.9" r="1.3"/><circle cx="326.9" cy="514.2" r="1.3"/><circle cx="337.4" cy="516.8" r="1.3"/><circle cx="436.4" cy="467.5" r="1.3"/><circle cx="438.7" cy="457" r="1.3"/><circle cx="373.7" cy="511" r="1.3"/><circle cx="257.7" cy="356" r="1.3"/><circle cx="281.7" cy="529.5" r="1.3"/><circle cx="371" cy="572.3" r="1.3"/><circle cx="410.2" cy="549.2" r="1.3"/><circle cx="412.8" cy="556" r="1.3"/></g>
<path d="M500.7 574.1L501.9 572.2M500.7 574.1L502.7 577M367.4 577.4L369.7 579.5M367.4 577.4L369.2 574.4M500.2 387.3L499.6 385.2M500.2 387.3L503 386M478.8 583.4L478.8 582.1M478.8 583.4L479.5 586.8M274.2 399.2L271.7 397.9M274.2 399.2L274.4 397M346.8 543.1L350.1 544M346.8 543.1L345.5 545.8M437.1 637.2L437.4 638.1M437.1 637.2L435.2 638.8M223.6 393.5L221.8 396.1M223.6 393.5L224.5 391.8M325.8 609.2L328.9 610.7M325.8 609.2L325.6 609.1M341 446.9L342.5 450.1M341 446.9L337.7 447.4M300.2 451.6L301.5 451.7M300.2 451.6L302.1 453.9M359.5 373.5L356 373.2M359.5 373.5L359.8 373.8M412.3 535.9L411.9 539.1M412.3 535.9L415.2 536.3M502.1 404.6L500.1 405.9M502.1 404.6L504.1 405.4M238.1 521.4L235.8 523.9M238.1 521.4L241.2 522.8M258.6 550L255.9 548.5M258.6 550L258.5 548.5M308.1 394.6L308.8 395.3M308.1 394.6L307.3 391.2M299 396.6L295.7 397.5M299 396.6L300 395M387 485.2L387 487.1M387 485.2L385.1 482.3M500.3 615L501.1 615.9M500.3 615L497 613.8M336.7 379.9L338 382.4M336.7 379.9L333.3 380.8M454.7 500.3L453.3 498M454.7 500.3L454.3 503.4M452.9 539.7L451.9 536.4M452.9 539.7L455.1 540.1M226.1 423.7L225.2 426.5M226.1 423.7L228.2 421.9M361.7 435.3L363.1 432M361.7 435.3L362.3 436.2M289.3 496.2L286.6 498.3M289.3 496.2L290.1 497.1M502.8 432.8L503.2 432.8M502.8 432.8L504.4 434M273.7 521.1L276.9 521.5M273.7 521.1L271.6 523M243.6 481.4L243.6 480.4M243.6 481.4L243.4 484.9M290.4 565.8L293.5 564.6M290.4 565.8L290.6 565.9M501.3 379.4L500.8 378.5M501.3 379.4L498.7 381.6M223.4 601.2L224.8 601.6M223.4 601.2L226.2 600.4M223.5 618.8L225.7 616.1M223.5 618.8L222.1 618.4M432.3 623.1L433.4 623.5M432.3 623.1L435.3 622.5M335.9 359.1L332.5 360M335.9 359.1L336 357.6M251.7 577.2L250.6 579.6M251.7 577.2L253.5 579.1M488.1 625.4L487.6 625.1M488.1 625.4L487 622.4M449.3 391.2L451.9 392.4M449.3 391.2L448.8 387.9M263.6 375.9L266.7 377.2M263.6 375.9L261.2 377.8M483.3 415.2L484.2 417.3M483.3 415.2L483.3 417.3M272 409.1L275.3 410.4M272 409.1L272.5 405.9M414.9 637L412.9 636.9M414.9 637L417.6 638.7M437.4 536.7L438.6 533.5M437.4 536.7L439.9 538.9M502.9 481.5L504.3 483.6M502.9 481.5L504.1 478.3M325.6 504.9L323.6 502.9M325.6 504.9L323.5 507.6M223.6 476.1L226.7 474.9M223.6 476.1L224.3 479M417 506.8L413.9 508.1M417 506.8L416.6 506.7M314.5 402.3L316.1 405.3M314.5 402.3L311.3 402.7M333.5 620.9L331.6 623.7M333.5 620.9L333.9 619M322.9 420.9L323.2 420M322.9 420.9L319.6 420M282.7 367.4L283.8 364.9M282.7 367.4L285.2 367.8M350.7 413.8L352.2 411M350.7 413.8L348 412.5M485.4 611L486.9 608.3M485.4 611L484.1 612.9M343.4 633.1L340.6 634.6M343.4 633.1L343.5 629.9M244.8 629.5L245.6 631.1M244.8 629.5L246.1 631.5M387.1 527.2L388 523.8M387.1 527.2L384.7 527.1M384.7 407.2L386.8 410M384.7 407.2L385.5 405.6M465.3 448.4L468.2 449.5M465.3 448.4L465.4 444.9M387 478.7L386.3 479.8M387 478.7L386.1 481.3M326.1 501L326 497.6M326.1 501L327.3 501.2M458.3 385.7L457.8 383.2M458.3 385.7L460.9 384.4M401 606.1L401.1 609.3M401 606.1L398 606M358.6 603.7L357.5 607M358.6 603.7L361.2 604.2M411.4 495L408.1 495.4M411.4 495L411.7 491.5M229.5 550.6L229.9 551.8M229.5 550.6L230.3 553.3M380.8 414L383.8 412.4M380.8 414L381.3 414.8M414.6 468.3L417.1 470.7M414.6 468.3L414.8 467.2M414 621.2L412 621.8M414 621.2L417.2 621.1M323.7 543.7L326.1 546.2M323.7 543.7L325.5 541.3M235.9 541.9L238 542.9M235.9 541.9L233.4 540M264.4 460.3L260.9 459.7M264.4 460.3L264.7 462.7M389.1 533.1L391.3 535.1M389.1 533.1L388 535.1M374.9 434.3L372.6 436.4M374.9 434.3L373 432.1M325.7 405.5L322.3 404.8M325.7 405.5L326.9 406.9M477.7 383.9L481.1 384.1M477.7 383.9L477.5 380.8M302 524.9L305.2 525.5M302 524.9L302.6 523.7M422.2 419L420.5 422M422.2 419L421.6 417.5M414.6 456.2L414.3 457.4M414.6 456.2L411.8 457.4M364.3 364.8L367.2 363.6M364.3 364.8L361.7 363.7M234.4 536.2L233.3 536.2M234.4 536.2L234.9 539.6M327.2 600.2L328.5 599.8M327.2 600.2L323.8 600.7M442 618.6L442.9 621.2M442 618.6L438.7 617.7M374.1 636.4L372.6 634.8M374.1 636.4L372.6 635.1M281 374L283.5 371.8M281 374L278.3 371.8M290.4 414.3L292.5 412.9M290.4 414.3L287.2 413.2M225.8 403.9L228.1 406M225.8 403.9L222.9 404.9M401.5 522L401.5 522M401.5 522L399.7 524.8M273.5 625.9L273.8 628.9M273.5 625.9L273.3 623.4M225.6 636.5L224.5 636.7M225.6 636.5L223.8 638.5M446.3 635.8L449.3 634.7M446.3 635.8L446.9 638.1M304.8 599.3L303.6 596.8M304.8 599.3L307 601.1M326.3 588.1L323.3 586.9M326.3 588.1L327.3 585.6M401.2 414.4L404 416.3M401.2 414.4L398.6 416.8M449 404.3L451 402.7M449 404.3L448.1 401.9M223 536.3L223.6 539.6M223 536.3L221.5 536M242.4 514.7L240.5 513.4M242.4 514.7L243.5 517.8M488.8 399.5L486.6 398M488.8 399.5L491.8 397.9M265.7 610.8L267.2 613.3M265.7 610.8L263.9 608.9M252.9 359.4L249.5 359.9M252.9 359.4L253.1 357.7M251.3 555.6L252.2 552.2M251.3 555.6L252 557.1M350.3 469.1L348.3 466.2M350.3 469.1L348.1 471.7M255.4 417.6L258.3 419.1M255.4 417.6L253.2 420.3M337.5 516.3L336.6 519.6M337.5 516.3L335.1 514.3M433.7 489.5L433.5 487.6M433.7 489.5L433.3 487.1M339.2 573.8L336.2 572.1M339.2 573.8L338.3 577M485.7 535.7L488 537M485.7 535.7L486.9 532.4M354.4 597.1L357.7 596.5M354.4 597.1L353.3 599.8M462.4 437.8L460.4 435M462.4 437.8L461.1 439.9M469.8 549.7L467.2 549.2M469.8 549.7L468.7 548.4M263.7 546.8L260.9 547.7M263.7 546.8L266.4 546.9M465.8 518.3L464.4 515.1M465.8 518.3L469.1 518M223.7 513.5L226.9 514.4M223.7 513.5L224.1 511.2M300.3 439.5L297.7 441.8M300.3 439.5L300.3 437.2M487.6 485.6L487.6 488M487.6 485.6L489.4 487.1M387.4 464.1L387.2 465.8M387.4 464.1L388.8 466.4M275.9 602.4L275.5 601.6M275.9 602.4L272.8 603.8M276.2 463L274.1 460.7M276.2 463L274.4 463.9M319.1 401.8L318.2 403.2M319.1 401.8L320.1 404.5M386.4 363.5L384.4 364.1M386.4 363.5L384.1 363.4M491.3 388.8L489.5 391.8M491.3 388.8L494.6 389.8M470.7 398.5L467.6 397.6M470.7 398.5L472.3 395.5M397.9 636.4L398.6 637.7M397.9 636.4L396.3 633.4M396.1 567.4L393.6 568.4M396.1 567.4L399 567.2M474.8 624.1L474.5 627M474.8 624.1L478.3 623.9M223.4 371.7L225.6 369.3M223.4 371.7L225.3 373.5M468.6 430.5L471.4 430.8M468.6 430.5L466.6 428.1M450.4 533.2L452.9 535.7M450.4 533.2L448.7 534M270.8 636.9L268.1 634.7M270.8 636.9L271.1 637.5M475.7 523.2L477.9 523.4M475.7 523.2L475.7 526.4M435.7 628.8L436.6 625.4M435.7 628.8L433.8 629.5M252.6 522.6L250.8 522.4M252.6 522.6L255.9 521.7M441.4 518.2L438.4 516.8M441.4 518.2L441.7 521.3M454.7 451.5L453.5 450.6M454.7 451.5L456.3 448.6M377.3 461.8L377.4 462.6M377.3 461.8L374.4 463.3M224.2 455.7L224 459.2M224.2 455.7L226 454.8M244 578.5L241.5 579.7M244 578.5L244.5 581.1M252.8 587.1L250.7 588.7M252.8 587.1L250.5 585.6M285.2 545.6L282.9 546.3M285.2 545.6L283.4 545.7M264.8 560.7L267.6 558.5M264.8 560.7L263.1 559.4M492.5 572.5L490.5 570.1M492.5 572.5L490.3 574M355.1 601.2L355.3 602.8M355.1 601.2L355.7 597.8M313.7 364.3L313.5 361.4M313.7 364.3L311.7 363.8M313.7 635.1L314.8 634.8M313.7 635.1L316.5 636.3M244.9 612.1L241.9 611M244.9 612.1L245.6 609.8M383.6 435.3L385.7 438.1M383.6 435.3L380.9 436.2M476 461.9L475.7 463.9M476 461.9L477.1 464M382.2 419.7L382.9 417.8M382.2 419.7L383.2 422.9M235 362.9L233 360.1M235 362.9L233.3 365.6M307.4 554.8L309.4 557.7M307.4 554.8L309.7 552.2M471.3 393.7L474.5 394.1M471.3 393.7L470.9 390.2" stroke="#d84040" stroke-width="0.8" fill="none"/>
<path d="M501.9 572.2L503.1 570.3M502.7 577L504.7 579.8M369.7 579.5L372 581.7M369.2 574.4L371 571.5M499.6 385.2L499.1 383.1M503 386L505.8 384.7M478.8 582.1L478.8 580.8M479.5 586.8L480.1 590.2M271.7 397.9L269.2 396.5M274.4 397L274.5 394.8M350.1 544L353.4 544.9M345.5 545.8L344.1 548.5M437.4 638.1L437.7 639.1M435.2 638.8L433.2 640.5M221.8 396.1L220 398.6M224.5 391.8L225.4 390M328.9 610.7L332 612.3M325.6 609.1L325.3 609.1M342.5 450.1L343.9 453.3M337.7 447.4L334.4 447.8M301.5 451.7L302.7 451.9M302.1 453.9L304.1 456.2M356 373.2L352.6 372.9M359.8 373.8L360 374.1M411.9 539.1L411.4 542.2M415.2 536.3L418.1 536.6M500.1 405.9L498.1 407.1M504.1 405.4L506 406.2M235.8 523.9L233.6 526.4M241.2 522.8L244.4 524.2M255.9 548.5L253.2 547.1M258.5 548.5L258.4 547M308.8 395.3L309.6 395.9M307.3 391.2L306.5 387.8M295.7 397.5L292.3 398.3M300 395L300.9 393.4M387 487.1L387.1 489M385.1 482.3L383.3 479.5M501.1 615.9L501.9 616.8M497 613.8L493.7 612.7M338 382.4L339.3 384.9M333.3 380.8L330 381.6M453.3 498L451.9 495.6M454.3 503.4L454 506.4M451.9 536.4L450.9 533M455.1 540.1L457.3 540.5M225.2 426.5L224.3 429.4M228.2 421.9L230.3 420M363.1 432L364.4 428.8M362.3 436.2L362.9 437.1M286.6 498.3L284 500.5M290.1 497.1L291 497.9M503.2 432.8L503.6 432.8M504.4 434L506 435.2M276.9 521.5L280.1 521.9M271.6 523L269.5 524.8M243.6 480.4L243.7 479.3M243.4 484.9L243.2 488.4M293.5 564.6L296.6 563.3M290.6 565.9L290.8 566M500.8 378.5L500.3 377.7M498.7 381.6L496.1 383.8M224.8 601.6L226.1 601.9M226.2 600.4L229 599.7M225.7 616.1L227.9 613.4M222.1 618.4L220.6 618M433.4 623.5L434.4 624M435.3 622.5L438.2 621.9M332.5 360L329.2 360.9M336 357.6L336.1 356M250.6 579.6L249.6 581.9M253.5 579.1L255.4 580.9M487.6 625.1L487.1 624.7M487 622.4L486 619.4M451.9 392.4L454.6 393.6M448.8 387.9L448.2 384.7M266.7 377.2L269.7 378.6M261.2 377.8L258.7 379.7M484.2 417.3L485.1 419.4M483.3 417.3L483.3 419.4M275.3 410.4L278.5 411.6M272.5 405.9L272.9 402.7M412.9 636.9L410.9 636.9M417.6 638.7L420.3 640.5M438.6 533.5L439.8 530.3M439.9 538.9L442.3 541.1M504.3 483.6L505.7 485.6M504.1 478.3L505.2 475.1M323.6 502.9L321.6 500.9M323.5 507.6L321.5 510.3M226.7 474.9L229.9 473.6M224.3 479L225.1 481.9M413.9 508.1L410.9 509.3M416.6 506.7L416.2 506.5M316.1 405.3L317.8 408.3M311.3 402.7L308.1 403.2M331.6 623.7L329.8 626.5M333.9 619L334.3 617M323.2 420L323.5 419M319.6 420L316.3 419.1M283.8 364.9L284.9 362.3M285.2 367.8L287.7 368.1M352.2 411L353.8 408.2M348 412.5L345.3 411.1M486.9 608.3L488.5 605.5M484.1 612.9L482.8 614.8M340.6 634.6L337.9 636.1M343.5 629.9L343.7 626.7M245.6 631.1L246.3 632.8M246.1 631.5L247.5 633.6M388 523.8L388.8 520.4M384.7 527.1L382.4 527.1M386.8 410L388.9 412.8M385.5 405.6L386.4 404M468.2 449.5L471 450.7M465.4 444.9L465.5 441.4M386.3 479.8L385.6 480.9M386.1 481.3L385.1 484M326 497.6L325.9 494.1M327.3 501.2L328.5 501.3M457.8 383.2L457.2 380.7M460.9 384.4L463.6 383.2M401.1 609.3L401.3 612.5M398 606L394.9 605.9M357.5 607L356.4 610.2M361.2 604.2L363.8 604.6M408.1 495.4L404.8 495.9M411.7 491.5L412 488.1M229.9 551.8L230.4 553M230.3 553.3L231.2 556M383.8 412.4L386.7 410.8M381.3 414.8L381.9 415.5M417.1 470.7L419.6 473.2M414.8 467.2L415 466M412 621.8L409.9 622.3M417.2 621.1L420.5 620.9M326.1 546.2L328.4 548.6M325.5 541.3L327.3 538.9M238 542.9L240.1 544M233.4 540L230.9 538.2M260.9 459.7L257.5 459.2M264.7 462.7L264.9 465.2M391.3 535.1L393.6 537.1M388 535.1L387 537.2M372.6 436.4L370.3 438.4M373 432.1L371 429.8M322.3 404.8L319 404.1M326.9 406.9L328.1 408.2M481.1 384.1L484.4 384.4M477.5 380.8L477.3 377.8M305.2 525.5L308.4 526.2M302.6 523.7L303.1 522.5M420.5 422L418.8 425.1M421.6 417.5L421.1 416M414.3 457.4L414.1 458.5M411.8 457.4L408.9 458.7M367.2 363.6L370 362.4M361.7 363.7L359 362.5M233.3 536.2L232.1 536.1M234.9 539.6L235.3 543.1M328.5 599.8L329.7 599.3M323.8 600.7L320.4 601.2M442.9 621.2L443.8 623.8M438.7 617.7L435.5 616.8M372.6 634.8L371 633.2M372.6 635.1L371.1 633.8M283.5 371.8L286.1 369.6M278.3 371.8L275.6 369.7M292.5 412.9L294.7 411.5M287.2 413.2L284 412.2M228.1 406L230.5 408M222.9 404.9L220 405.9M401.5 522L401.4 522.1M399.7 524.8L397.9 527.7M273.8 628.9L274.1 631.9M273.3 623.4L273.1 620.9M224.5 636.7L223.5 637M223.8 638.5L221.9 640.5M449.3 634.7L452.3 633.6M446.9 638.1L447.5 640.5M303.6 596.8L302.3 594.2M307 601.1L309.3 602.9M323.3 586.9L320.3 585.7M327.3 585.6L328.3 583.1M404 416.3L406.9 418.2M398.6 416.8L396 419.1M451 402.7L453 401M448.1 401.9L447.1 399.4M223.6 539.6L224.1 543M221.5 536L220 535.7M240.5 513.4L238.5 512M243.5 517.8L244.6 520.9M486.6 398L484.3 396.6M491.8 397.9L494.9 396.2M267.2 613.3L268.7 615.9M263.9 608.9L262.1 607M249.5 359.9L246.1 360.4M253.1 357.7L253.2 356M252.2 552.2L253.2 548.9M252 557.1L252.7 558.5M348.3 466.2L346.4 463.3M348.1 471.7L346 474.4M258.3 419.1L261.3 420.6M253.2 420.3L250.9 422.9M336.6 519.6L335.8 522.9M335.1 514.3L332.6 512.3M433.5 487.6L433.3 485.8M433.3 487.1L432.9 484.7M336.2 572.1L333.1 570.4M338.3 577L337.3 580.3M488 537L490.2 538.3M486.9 532.4L488 529.2M357.7 596.5L360.9 595.9M353.3 599.8L352.2 602.4M460.4 435L458.4 432.1M461.1 439.9L459.8 442.1M467.2 549.2L464.6 548.7M468.7 548.4L467.5 547.1M260.9 547.7L258.2 548.6M266.4 546.9L269.2 547M464.4 515.1L463 511.9M469.1 518L472.3 517.7M226.9 514.4L230.2 515.2M224.1 511.2L224.5 508.8M297.7 441.8L295.2 444M300.3 437.2L300.3 434.9M487.6 488L487.6 490.3M489.4 487.1L491.2 488.7M387.2 465.8L387 467.6M388.8 466.4L390.1 468.6M275.5 601.6L275.1 600.8M272.8 603.8L269.8 605.3M274.1 460.7L272 458.4M274.4 463.9L272.7 464.7M318.2 403.2L317.4 404.6M320.1 404.5L321 407.3M384.4 364.1L382.4 364.8M384.1 363.4L381.9 363.3M489.5 391.8L487.6 394.7M494.6 389.8L498 390.9M467.6 397.6L464.6 396.6M472.3 395.5L473.8 392.5M398.6 637.7L399.3 639M396.3 633.4L394.7 630.3M393.6 568.4L391 569.5M399 567.2L401.8 567M474.5 627L474.3 629.9M478.3 623.9L481.7 623.6M225.6 369.3L227.7 366.9M225.3 373.5L227.3 375.3M471.4 430.8L474.3 431.2M466.6 428.1L464.7 425.7M452.9 535.7L455.3 538.1M448.7 534L447 534.8M268.1 634.7L265.5 632.4M271.1 637.5L271.4 638M477.9 523.4L480.2 523.5M475.7 526.4L475.6 529.7M436.6 625.4L437.5 622M433.8 629.5L431.9 630.2M250.8 522.4L248.9 522.2M255.9 521.7L259.1 520.8M438.4 516.8L435.5 515.5M441.7 521.3L442 524.5M453.5 450.6L452.3 449.8M456.3 448.6L457.9 445.7M377.4 462.6L377.4 463.4M374.4 463.3L371.4 464.7M224 459.2L223.8 462.7M226 454.8L227.7 453.8M241.5 579.7L239 580.9M244.5 581.1L244.9 583.6M250.7 588.7L248.7 590.3M250.5 585.6L248.2 584.1M282.9 546.3L280.6 547M283.4 545.7L281.6 545.7M267.6 558.5L270.3 556.3M263.1 559.4L261.4 558.1M490.5 570.1L488.6 567.7M490.3 574L488.2 575.5M355.3 602.8L355.4 604.5M355.7 597.8L356.4 594.5M313.5 361.4L313.3 358.4M311.7 363.8L309.7 363.2M314.8 634.8L315.9 634.6M316.5 636.3L319.2 637.6M241.9 611L238.9 609.8M245.6 609.8L246.4 607.4M385.7 438.1L387.7 440.9M380.9 436.2L378.1 437.2M475.7 463.9L475.5 465.9M477.1 464L478.2 466.2M382.9 417.8L383.7 415.8M383.2 422.9L384.2 426.1M233 360.1L231 357.3M233.3 365.6L231.7 368.3M309.4 557.7L311.4 560.6M309.7 552.2L312 549.6M474.5 394.1L477.8 394.6M470.9 390.2L470.5 386.8" stroke="#d8d8d8" stroke-width="0.7" fill="none"/>
<g fill="url(#hg)"><circle cx="503.1" cy="570.3" r="1.3"/><circle cx="372" cy="581.7" r="1.3"/><circle cx="505.8" cy="384.7" r="1.3"/><circle cx="478.8" cy="580.8" r="1.3"/><circle cx="274.5" cy="394.8" r="1.3"/><circle cx="344.1" cy="548.5" r="1.3"/><circle cx="437.7" cy="639.1" r="1.3"/><circle cx="220" cy="398.6" r="1.3"/><circle cx="225.4" cy="390" r="1.3"/><circle cx="334.4" cy="447.8" r="1.3"/><circle cx="304.1" cy="456.2" r="1.3"/><circle cx="411.4" cy="542.2" r="1.3"/><circle cx="498.1" cy="407.1" r="1.3"/><circle cx="506" cy="406.2" r="1.3"/><circle cx="233.6" cy="526.4" r="1.3"/><circle cx="258.4" cy="547" r="1.3"/><circle cx="309.6" cy="395.9" r="1.3"/><circle cx="387.1" cy="489" r="1.3"/><circle cx="383.3" cy="479.5" r="1.3"/><circle cx="339.3" cy="384.9" r="1.3"/><circle cx="451.9" cy="495.6" r="1.3"/><circle cx="454" cy="506.4" r="1.3"/><circle cx="457.3" cy="540.5" r="1.3"/><circle cx="224.3" cy="429.4" r="1.3"/><circle cx="230.3" cy="420" r="1.3"/><circle cx="362.9" cy="437.1" r="1.3"/><circle cx="291" cy="497.9" r="1.3"/><circle cx="506" cy="435.2" r="1.3"/><circle cx="280.1" cy="521.9" r="1.3"/><circle cx="269.5" cy="524.8" r="1.3"/><circle cx="290.8" cy="566" r="1.3"/><circle cx="496.1" cy="383.8" r="1.3"/><circle cx="226.1" cy="601.9" r="1.3"/><circle cx="438.2" cy="621.9" r="1.3"/><circle cx="249.6" cy="581.9" r="1.3"/><circle cx="486" cy="619.4" r="1.3"/><circle cx="269.7" cy="378.6" r="1.3"/><circle cx="258.7" cy="379.7" r="1.3"/><circle cx="485.1" cy="419.4" r="1.3"/><circle cx="410.9" cy="636.9" r="1.3"/><circle cx="420.3" cy="640.5" r="1.3"/><circle cx="439.8" cy="530.3" r="1.3"/><circle cx="442.3" cy="541.1" r="1.3"/><circle cx="505.7" cy="485.6" r="1.3"/><circle cx="505.2" cy="475.1" r="1.3"/><circle cx="321.6" cy="500.9" r="1.3"/><circle cx="225.1" cy="481.9" r="1.3"/><circle cx="410.9" cy="509.3" r="1.3"/><circle cx="316.3" cy="419.1" r="1.3"/><circle cx="287.7" cy="368.1" r="1.3"/><circle cx="353.8" cy="408.2" r="1.3"/><circle cx="488.5" cy="605.5" r="1.3"/><circle cx="482.8" cy="614.8" r="1.3"/><circle cx="337.9" cy="636.1" r="1.3"/><circle cx="343.7" cy="626.7" r="1.3"/><circle cx="247.5" cy="633.6" r="1.3"/><circle cx="385.1" cy="484" r="1.3"/><circle cx="325.9" cy="494.1" r="1.3"/><circle cx="463.6" cy="383.2" r="1.3"/><circle cx="394.9" cy="605.9" r="1.3"/><circle cx="363.8" cy="604.6" r="1.3"/><circle cx="231.2" cy="556" r="1.3"/><circle cx="386.7" cy="410.8" r="1.3"/><circle cx="327.3" cy="538.9" r="1.3"/><circle cx="240.1" cy="544" r="1.3"/><circle cx="230.9" cy="538.2" r="1.3"/><circle cx="387" cy="537.2" r="1.3"/><circle cx="370.3" cy="438.4" r="1.3"/><circle cx="328.1" cy="408.2" r="1.3"/><circle cx="484.4" cy="384.4" r="1.3"/><circle cx="308.4" cy="526.2" r="1.3"/><circle cx="421.1" cy="416" r="1.3"/><circle cx="408.9" cy="458.7" r="1.3"/><circle cx="232.1" cy="536.1" r="1.3"/><circle cx="329.7" cy="599.3" r="1.3"/><circle cx="371.1" cy="633.8" r="1.3"/><circle cx="275.6" cy="369.7" r="1.3"/><circle cx="294.7" cy="411.5" r="1.3"/><circle cx="284" cy="412.2" r="1.3"/><circle cx="230.5" cy="408" r="1.3"/><circle cx="220" cy="405.9" r="1.3"/><circle cx="397.9" cy="527.7" r="1.3"/><circle cx="221.9" cy="640.5" r="1.3"/><circle cx="452.3" cy="633.6" r="1.3"/><circle cx="302.3" cy="594.2" r="1.3"/><circle cx="309.3" cy="602.9" r="1.3"/><circle cx="320.3" cy="585.7" r="1.3"/><circle cx="406.9" cy="418.2" r="1.3"/><circle cx="447.1" cy="399.4" r="1.3"/><circle cx="484.3" cy="396.6" r="1.3"/><circle cx="268.7" cy="615.9" r="1.3"/><circle cx="262.1" cy="607" r="1.3"/><circle cx="253.2" cy="356" r="1.3"/><circle cx="252.7" cy="558.5" r="1.3"/><circle cx="432.9" cy="484.7" r="1.3"/><circle cx="337.3" cy="580.3" r="1.3"/><circle cx="360.9" cy="595.9" r="1.3"/><circle cx="352.2" cy="602.4" r="1.3"/><circle cx="459.8" cy="442.1" r="1.3"/><circle cx="467.5" cy="547.1" r="1.3"/><circle cx="258.2" cy="548.6" r="1.3"/><circle cx="269.2" cy="547" r="1.3"/><circle cx="472.3" cy="517.7" r="1.3"/><circle cx="224.5" cy="508.8" r="1.3"/><circle cx="491.2" cy="488.7" r="1.3"/><circle cx="387" cy="467.6" r="1.3"/><circle cx="269.8" cy="605.3" r="1.3"/><circle cx="272.7" cy="464.7" r="1.3"/><circle cx="317.4" cy="404.6" r="1.3"/><circle cx="381.9" cy="363.3" r="1.3"/><circle cx="473.8" cy="392.5" r="1.3"/><circle cx="391" cy="569.5" r="1.3"/><circle cx="401.8" cy="567" r="1.3"/><circle cx="474.3" cy="629.9" r="1.3"/><circle cx="227.3" cy="375.3" r="1.3"/><circle cx="271.4" cy="638" r="1.3"/><circle cx="475.6" cy="529.7" r="1.3"/><circle cx="431.9" cy="630.2" r="1.3"/><circle cx="248.9" cy="522.2" r="1.3"/><circle cx="259.1" cy="520.8" r="1.3"/><circle cx="435.5" cy="515.5" r="1.3"/><circle cx="442" cy="524.5" r="1.3"/><circle cx="452.3" cy="449.8" r="1.3"/><circle cx="377.4" cy="463.4" r="1.3"/><circle cx="227.7" cy="453.8" r="1.3"/><circle cx="239" cy="580.9" r="1.3"/><circle cx="248.7" cy="590.3" r="1.3"/><circle cx="281.6" cy="545.7" r="1.3"/><circle cx="488.6" cy="567.7" r="1.3"/><circle cx="355.4" cy="604.5" r="1.3"/><circle cx="356.4" cy="594.5" r="1.3"/><circle cx="309.7" cy="363.2" r="1.3"/><circle cx="315.9" cy="634.6" r="1.3"/><circle cx="238.9" cy="609.8" r="1.3"/><circle cx="378.1" cy="437.2" r="1.3"/><circle cx="475.5" cy="465.9" r="1.3"/></g>
<g fill="url(#og)"><circle cx="500.7" cy="574.1" r="3.7"/><circle cx="367.4" cy="577.4" r="3.7"/><circle cx="500.2" cy="387.3" r="3.7"/><circle cx="478.8" cy="583.4" r="3.7"/><circle cx="274.2" cy="399.2" r="3.7"/><circle cx="346.8" cy="543.1" r="3.7"/><circle cx="437.1" cy="637.2" r="3.7"/><circle cx="223.6" cy="393.5" r="3.7"/><circle cx="325.8" cy="609.2" r="3.7"/><circle cx="341" cy="446.9" r="3.7"/><circle cx="300.2" cy="451.6" r="3.7"/><circle cx="359.5" cy="373.5" r="3.7"/><circle cx="412.3" cy="535.9" r="3.7"/><circle cx="502.1" cy="404.6" r="3.7"/><circle cx="238.1" cy="521.4" r="3.7"/><circle cx="258.6" cy="550" r="3.7"/><circle cx="308.1" cy="394.6" r="3.7"/><circle cx="299" cy="396.6" r="3.7"/><circle cx="387" cy="485.2" r="3.7"/><circle cx="500.3" cy="615" r="3.7"/><circle cx="336.7" cy="379.9" r="3.7"/><circle cx="454.7" cy="500.3" r="3.7"/><circle cx="452.9" cy="539.7" r="3.7"/><circle cx="226.1" cy="423.7" r="3.7"/><circle cx="361.7" cy="435.3" r="3.7"/><circle cx="289.3" cy="496.2" r="3.7"/><circle cx="502.8" cy="432.8" r="3.7"/><circle cx="273.7" cy="521.1" r="3.7"/><circle cx="243.6" cy="481.4" r="3.7"/><circle cx="290.4" cy="565.8" r="3.7"/><circle cx="501.3" cy="379.4" r="3.7"/><circle cx="223.4" cy="601.2" r="3.7"/><circle cx="223.5" cy="618.8" r="3.7"/><circle cx="432.3" cy="623.1" r="3.7"/><circle cx="335.9" cy="359.1" r="3.7"/><circle cx="251.7" cy="577.2" r="3.7"/><circle cx="488.1" cy="625.4" r="3.7"/><circle cx="449.3" cy="391.2" r="3.7"/><circle cx="263.6" cy="375.9" r="3.7"/><circle cx="483.3" cy="415.2" r="3.7"/><circle cx="272" cy="409.1" r="3.7"/><circle cx="414.9" cy="637" r="3.7"/><circle cx="437.4" cy="536.7" r="3.7"/><circle cx="502.9" cy="481.5" r="3.7"/><circle cx="325.6" cy="504.9" r="3.7"/><circle cx="223.6" cy="476.1" r="3.7"/><circle cx="417" cy="506.8" r="3.7"/><circle cx="314.5" cy="402.3" r="3.7"/><circle cx="333.5" cy="620.9" r="3.7"/><circle cx="322.9" cy="420.9" r="3.7"/><circle cx="282.7" cy="367.4" r="3.7"/><circle cx="350.7" cy="413.8" r="3.7"/><circle cx="485.4" cy="611" r="3.7"/><circle cx="343.4" cy="633.1" r="3.7"/><circle cx="244.8" cy="629.5" r="3.7"/><circle cx="387.1" cy="527.2" r="3.7"/><circle cx="384.7" cy="407.2" r="3.7"/><circle cx="465.3" cy="448.4" r="3.7"/><circle cx="387" cy="478.7" r="3.7"/><circle cx="326.1" cy="501" r="3.7"/><circle cx="458.3" cy="385.7" r="3.7"/><circle cx="401" cy="606.1" r="3.7"/><circle cx="358.6" cy="603.7" r="3.7"/><circle cx="411.4" cy="495" r="3.7"/><circle cx="229.5" cy="550.6" r="3.7"/><circle cx="380.8" cy="414" r="3.7"/><circle cx="414.6" cy="468.3" r="3.7"/><circle cx="414" cy="621.2" r="3.7"/><circle cx="323.7" cy="543.7" r="3.7"/><circle cx="235.9" cy="541.9" r="3.7"/><circle cx="264.4" cy="460.3" r="3.7"/><circle cx="389.1" cy="533.1" r="3.7"/><circle cx="374.9" cy="434.3" r="3.7"/><circle cx="325.7" cy="405.5" r="3.7"/><circle cx="477.7" cy="383.9" r="3.7"/><circle cx="302" cy="524.9" r="3.7"/><circle cx="422.2" cy="419" r="3.7"/><circle cx="414.6" cy="456.2" r="3.7"/><circle cx="364.3" cy="364.8" r="3.7"/><circle cx="234.4" cy="536.2" r="3.7"/><circle cx="327.2" cy="600.2" r="3.7"/><circle cx="442" cy="618.6" r="3.7"/><circle cx="374.1" cy="636.4" r="3.7"/><circle cx="281" cy="374" r="3.7"/><circle cx="290.4" cy="414.3" r="3.7"/><circle cx="225.8" cy="403.9" r="3.7"/><circle cx="401.5" cy="522" r="3.7"/><circle cx="273.5" cy="625.9" r="3.7"/><circle cx="225.6" cy="636.5" r="3.7"/><circle cx="446.3" cy="635.8" r="3.7"/><circle cx="304.8" cy="599.3" r="3.7"/><circle cx="326.3" cy="588.1" r="3.7"/><circle cx="401.2" cy="414.4" r="3.7"/><circle cx="449" cy="404.3" r="3.7"/><circle cx="223" cy="536.3" r="3.7"/><circle cx="242.4" cy="514.7" r="3.7"/><circle cx="488.8" cy="399.5" r="3.7"/><circle cx="265.7" cy="610.8" r="3.7"/><circle cx="252.9" cy="359.4" r="3.7"/><circle cx="251.3" cy="555.6" r="3.7"/><circle cx="350.3" cy="469.1" r="3.7"/><circle cx="255.4" cy="417.6" r="3.7"/><circle cx="337.5" cy="516.3" r="3.7"/><circle cx="433.7" cy="489.5" r="3.7"/><circle cx="339.2" cy="573.8" r="3.7"/><circle cx="485.7" cy="535.7" r="3.7"/><circle cx="354.4" cy="597.1" r="3.7"/><circle cx="462.4" cy="437.8" r="3.7"/><circle cx="469.8" cy="549.7" r="3.7"/><circle cx="263.7" cy="546.8" r="3.7"/><circle cx="465.8" cy="518.3" r="3.7"/><circle cx="223.7" cy="513.5" r="3.7"/><circle cx="300.3" cy="439.5" r="3.7"/><circle cx="487.6" cy="485.6" r="3.7"/><circle cx="387.4" cy="464.1" r="3.7"/><circle cx="275.9" cy="602.4" r="3.7"/><circle cx="276.2" cy="463" r="3.7"/><circle cx="319.1" cy="401.8" r="3.7"/><circle cx="386.4" cy="363.5" r="3.7"/><circle cx="491.3" cy="388.8" r="3.7"/><circle cx="470.7" cy="398.5" r="3.7"/><circle cx="397.9" cy="636.4" r="3.7"/><circle cx="396.1" cy="567.4" r="3.7"/><circle cx="474.8" cy="624.1" r="3.8"/><circle cx="223.4" cy="371.7" r="3.8"/><circle cx="468.6" cy="430.5" r="3.8"/><circle cx="450.4" cy="533.2" r="3.8"/><circle cx="270.8" cy="636.9" r="3.8"/><circle cx="475.7" cy="523.2" r="3.8"/><circle cx="435.7" cy="628.8" r="3.8"/><circle cx="252.6" cy="522.6" r="3.8"/><circle cx="441.4" cy="518.2" r="3.8"/><circle cx="454.7" cy="451.5" r="3.8"/><circle cx="377.3" cy="461.8" r="3.8"/><circle cx="224.2" cy="455.7" r="3.8"/><circle cx="244" cy="578.5" r="3.8"/><circle cx="252.8" cy="587.1" r="3.8"/><circle cx="285.2" cy="545.6" r="3.8"/><circle cx="264.8" cy="560.7" r="3.8"/><circle cx="492.5" cy="572.5" r="3.8"/><circle cx="355.1" cy="601.2" r="3.8"/><circle cx="313.7" cy="364.3" r="3.8"/><circle cx="313.7" cy="635.1" r="3.8"/><circle cx="244.9" cy="612.1" r="3.8"/><circle cx="383.6" cy="435.3" r="3.8"/><circle cx="476" cy="461.9" r="3.8"/><circle cx="382.2" cy="419.7" r="3.8"/><circle cx="235" cy="362.9" r="3.8"/><circle cx="307.4" cy="554.8" r="3.8"/><circle cx="471.3" cy="393.7" r="3.8"/></g>
<g fill="url(#hg)"><circle cx="504.7" cy="579.8" r="1.3"/><circle cx="371" cy="571.5" r="1.3"/><circle cx="499.1" cy="383.1" r="1.3"/><circle cx="480.1" cy="590.2" r="1.3"/><circle cx="269.2" cy="396.5" r="1.3"/><circle cx="353.4" cy="544.9" r="1.3"/><circle cx="433.2" cy="640.5" r="1.3"/><circle cx="332" cy="612.3" r="1.3"/><circle cx="325.3" cy="609.1" r="1.3"/><circle cx="343.9" cy="453.3" r="1.3"/><circle cx="302.7" cy="451.9" r="1.3"/><circle cx="352.6" cy="372.9" r="1.3"/><circle cx="360" cy="374.1" r="1.3"/><circle cx="418.1" cy="536.6" r="1.3"/><circle cx="244.4" cy="524.2" r="1.3"/><circle cx="253.2" cy="547.1" r="1.3"/><circle cx="306.5" cy="387.8" r="1.3"/><circle cx="292.3" cy="398.3" r="1.3"/><circle cx="300.9" cy="393.4" r="1.3"/><circle cx="501.9" cy="616.8" r="1.3"/><circle cx="493.7" cy="612.7" r="1.3"/><circle cx="330" cy="381.6" r="1.3"/><circle cx="450.9" cy="533" r="1.3"/><circle cx="364.4" cy="428.8" r="1.3"/><circle cx="284" cy="500.5" r="1.3"/><circle cx="503.6" cy="432.8" r="1.3"/><circle cx="243.7" cy="479.3" r="1.3"/><circle cx="243.2" cy="488.4" r="1.3"/><circle cx="296.6" cy="563.3" r="1.3"/><circle cx="500.3" cy="377.7" r="1.3"/><circle cx="229" cy="599.7" r="1.3"/><circle cx="227.9" cy="613.4" r="1.3"/><circle cx="220.6" cy="618" r="1.3"/><circle cx="434.4" cy="624" r="1.3"/><circle cx="329.2" cy="360.9" r="1.3"/><circle cx="336.1" cy="356" r="1.3"/><circle cx="255.4" cy="580.9" r="1.3"/><circle cx="487.1" cy="624.7" r="1.3"/><circle cx="454.6" cy="393.6" r="1.3"/><circle cx="448.2" cy="384.7" r="1.3"/><circle cx="483.3" cy="419.4" r="1.3"/><circle cx="278.5" cy="411.6" r="1.3"/><circle cx="272.9" cy="402.7" r="1.3"/><circle cx="321.5" cy="510.3" r="1.3"/><circle cx="229.9" cy="473.6" r="1.3"/><circle cx="416.2" cy="506.5" r="1.3"/><circle cx="317.8" cy="408.3" r="1.3"/><circle cx="308.1" cy="403.2" r="1.3"/><circle cx="329.8" cy="626.5" r="1.3"/><circle cx="334.3" cy="617" r="1.3"/><circle cx="323.5" cy="419" r="1.3"/><circle cx="284.9" cy="362.3" r="1.3"/><circle cx="345.3" cy="411.1" r="1.3"/><circle cx="246.3" cy="632.8" r="1.3"/><circle cx="388.8" cy="520.4" r="1.3"/><circle cx="382.4" cy="527.1" r="1.3"/><circle cx="388.9" cy="412.8" r="1.3"/><circle cx="386.4" cy="404" r="1.3"/><circle cx="471" cy="450.7" r="1.3"/><circle cx="465.5" cy="441.4" r="1.3"/><circle cx="385.6" cy="480.9" r="1.3"/><circle cx="328.5" cy="501.3" r="1.3"/><circle cx="457.2" cy="380.7" r="1.3"/><circle cx="401.3" cy="612.5" r="1.3"/><circle cx="356.4" cy="610.2" r="1.3"/><circle cx="404.8" cy="495.9" r="1.3"/><circle cx="412" cy="488.1" r="1.3"/><circle cx="230.4" cy="553" r="1.3"/><circle cx="381.9" cy="415.5" r="1.3"/><circle cx="419.6" cy="473.2" r="1.3"/><circle cx="415" cy="466" r="1.3"/><circle cx="409.9" cy="622.3" r="1.3"/><circle cx="420.5" cy="620.9" r="1.3"/><circle cx="328.4" cy="548.6" r="1.3"/><circle cx="257.5" cy="459.2" r="1.3"/><circle cx="264.9" cy="465.2" r="1.3"/><circle cx="393.6" cy="537.1" r="1.3"/><circle cx="371" cy="429.8" r="1.3"/><circle cx="319" cy="404.1" r="1.3"/><circle cx="477.3" cy="377.8" r="1.3"/><circle cx="303.1" cy="522.5" r="1.3"/><circle cx="418.8" cy="425.1" r="1.3"/><circle cx="414.1" cy="458.5" r="1.3"/><circle cx="370" cy="362.4" r="1.3"/><circle cx="359" cy="362.5" r="1.3"/><circle cx="235.3" cy="543.1" r="1.3"/><circle cx="320.4" cy="601.2" r="1.3"/><circle cx="443.8" cy="623.8" r="1.3"/><circle cx="435.5" cy="616.8" r="1.3"/><circle cx="371" cy="633.2" r="1.3"/><circle cx="286.1" cy="369.6" r="1.3"/><circle cx="401.4" cy="522.1" r="1.3"/><circle cx="274.1" cy="631.9" r="1.3"/><circle cx="273.1" cy="620.9" r="1.3"/><circle cx="223.5" cy="637" r="1.3"/><circle cx="447.5" cy="640.5" r="1.3"/><circle cx="328.3" cy="583.1" r="1.3"/><circle cx="396" cy="419.1" r="1.3"/><circle cx="453" cy="401" r="1.3"/><circle cx="224.1" cy="543" r="1.3"/><circle cx="220" cy="535.7" r="1.3"/><circle cx="238.5" cy="512" r="1.3"/><circle cx="244.6" cy="520.9" r="1.3"/><circle cx="494.9" cy="396.2" r="1.3"/><circle cx="246.1" cy="360.4" r="1.3"/><circle cx="253.2" cy="548.9" r="1.3"/><circle cx="346.4" cy="463.3" r="1.3"/><circle cx="346" cy="474.4" r="1.3"/><circle cx="261.3" cy="420.6" r="1.3"/><circle cx="250.9" cy="422.9" r="1.3"/><circle cx="335.8" cy="522.9" r="1.3"/><circle cx="332.6" cy="512.3" r="1.3"/><circle cx="433.3" cy="485.8" r="1.3"/><circle cx="333.1" cy="570.4" r="1.3"/><circle cx="490.2" cy="538.3" r="1.3"/><circle cx="488" cy="529.2" r="1.3"/><circle cx="458.4" cy="432.1" r="1.3"/><circle cx="464.6" cy="548.7" r="1.3"/><circle cx="463" cy="511.9" r="1.3"/><circle cx="230.2" cy="515.2" r="1.3"/><circle cx="295.2" cy="444" r="1.3"/><circle cx="300.3" cy="434.9" r="1.3"/><circle cx="487.6" cy="490.3" r="1.3"/><circle cx="390.1" cy="468.6" r="1.3"/><circle cx="275.1" cy="600.8" r="1.3"/><circle cx="272" cy="458.4" r="1.3"/><circle cx="321" cy="407.3" r="1.3"/><circle cx="382.4" cy="364.8" r="1.3"/><circle cx="487.6" cy="394.7" r="1.3"/><circle cx="498" cy="390.9" r="1.3"/><circle cx="464.6" cy="396.6" r="1.3"/><circle cx="399.3" cy="639" r="1.3"/><circle cx="394.7" cy="630.3" r="1.3"/><circle cx="481.7" cy="623.6" r="1.3"/><circle cx="227.7" cy="366.9" r="1.3"/><circle cx="474.3" cy="431.2" r="1.3"/><circle cx="464.7" cy="425.7" r="1.3"/><circle cx="455.3" cy="538.1" r="1.3"/><circle cx="447" cy="534.8" r="1.3"/><circle cx="265.5" cy="632.4" r="1.3"/><circle cx="480.2" cy="523.5" r="1.3"/><circle cx="437.5" cy="622" r="1.3"/><circle cx="457.9" cy="445.7" r="1.3"/><circle cx="371.4" cy="464.7" r="1.3"/><circle cx="223.8" cy="462.7" r="1.3"/><circle cx="244.9" cy="583.6" r="1.3"/><circle cx="248.2" cy="584.1" r="1.3"/><circle cx="280.6" cy="547" r="1.3"/><circle cx="270.3" cy="556.3" r="1.3"/><circle cx="261.4" cy="558.1" r="1.3"/><circle cx="488.2" cy="575.5" r="1.3"/><circle cx="313.3" cy="358.4" r="1.3"/><circle cx="319.2" cy="637.6" r="1.3"/><circle cx="246.4" cy="607.4" r="1.3"/><circle cx="387.7" cy="440.9" r="1.3"/><circle cx="478.2" cy="466.2" r="1.3"/><circle cx="383.7" cy="415.8" r="1.3"/><circle cx="384.2" cy="426.1" r="1.3"/><circle cx="231" cy="357.3" r="1.3"/><circle cx="231.7" cy="368.3" r="1.3"/><circle cx="311.4" cy="560.6" r="1.3"/><circle cx="312" cy="549.6" r="1.3"/><circle cx="477.8" cy="394.6" r="1.3"/><circle cx="470.5" cy="386.8" r="1.3"/></g>
<path d="M274.6 390.3L275.7 389.7M274.6 390.3L275.8 393.6M225.8 398.9L225.1 397M225.8 398.9L222.9 398.7M292.2 550.6L291.8 548.9M292.2 550.6L294.5 548.6M425.3 412.3L424.4 411.8M425.3 412.3L422.3 412.8M234.2 360.2L235 358.1M234.2 360.2L237.2 361.5M399.8 365.9L399 364.2M399.8 365.9L403.3 366.3M458.1 553.3L455.2 554.5M458.1 553.3L457.6 553.9M317.7 449.6L318.4 446.5M317.7 449.6L318.1 451.8M375 396.7L377.2 394.8M375 396.7L375.8 400M245.3 445.6L244 445.7M245.3 445.6L247 442.6M264.7 360.6L267.1 363.1M264.7 360.6L261.8 362.4M423.7 633.9L424.8 635.1M423.7 633.9L426.5 632.4M286.5 583.5L287.7 583.7M286.5 583.5L283.2 582.3M250.3 622.1L252.1 623.3M250.3 622.1L247.1 621.4M284.1 470.3L282.2 467.7M284.1 470.3L281.8 472.7M252.7 637.3L255.2 638.9M252.7 637.3L249.7 638.9M316.9 593.5L316.2 593.5M316.9 593.5L314.4 595.6M501.8 611L500 608.5M501.8 611L502.8 609.5M499.6 377.4L502.6 375.6M499.6 377.4L500.4 380.7M502.8 628.3L500.5 629.6M502.8 628.3L500.9 626.7M367.6 418.5L367.2 416.9M367.6 418.5L367.7 415.9M288.7 456.3L286 457.1M288.7 456.3L287.7 457.1M502.6 384.4L500.3 385.9M502.6 384.4L504.3 383.3M379.6 537.9L377.1 540.2M379.6 537.9L381.7 539.2M391.3 595.6L389.9 594.7M391.3 595.6L390.2 593.2M361.2 462.5L359.7 464.4M361.2 462.5L358.6 461.7M461 479L462.3 481.7M461 479L462.9 478.9M231.6 422.2L232.8 418.9M231.6 422.2L229.7 422.6M348.8 512L350.2 508.9M348.8 512L349.2 512.8M296.7 610L296.9 611.9M296.7 610L295.1 607M484.8 637.2L488 638.1M484.8 637.2L484.5 633.9M320 579.2L318.7 577.3M320 579.2L322.3 581.4M333.4 420.6L330.3 421.5M333.4 420.6L333 421.2M397 376L397.5 373.3M397 376L394.9 378.1M317.2 474.1L316 477.4M317.2 474.1L314.6 472.3M420.3 611.6L420.3 608.2M420.3 611.6L420.5 612M349.7 472.9L348 470.1M349.7 472.9L347.2 475.2M258.6 425.8L261.4 426.1M258.6 425.8L257.5 422.5M315.8 494.2L317.4 496.8M315.8 494.2L315.2 491.7M445.7 391.5L448.9 390.2M445.7 391.5L444.9 393.2M454.4 521.7L453 518.5M454.4 521.7L454.6 522.6M267.9 492.8L264.4 492.4M267.9 492.8L269 489.9M453.1 487.2L453.6 486.7M453.1 487.2L456.3 488.2M341.5 410.8L344.9 410.7M341.5 410.8L340 408.4M342.1 620.4L342.4 623.8M342.1 620.4L344.1 619.8M365.4 606L364.8 606M365.4 606L365.9 602.6M243.8 380.1L241.8 382.4M243.8 380.1L241.6 378.5M223.7 420.5L224.6 423.6M223.7 420.5L221.9 421.4M334 574.6L330.9 576.2M334 574.6L334.3 573.2M297.7 386.7L295.5 385.5M297.7 386.7L297.1 390.1M291 636.3L287.7 636.9M291 636.3L291.1 633M457.5 599.9L460.5 601.4M457.5 599.9L455.9 599.4M489.2 474.5L488.7 473.3M489.2 474.5L490.2 477.8M493.9 384L496.6 384.2M493.9 384L491.2 385.6M478.7 403.7L475.8 404.4M478.7 403.7L480.9 402.2M434.9 400.5L432.1 398.8M434.9 400.5L434.1 401.3M296.4 481.2L297.8 483.6M296.4 481.2L297.1 478.1M355.1 398.5L352.6 396.7M355.1 398.5L358 398M284.1 627.9L281.1 629.2M284.1 627.9L286.4 628.2M321.5 603.4L321.6 600.6M321.5 603.4L318.7 605.2M425.6 557.4L423.2 558.8M425.6 557.4L423.9 556.7M324.7 626L327 626.5M324.7 626L326.4 623.9M251.7 491.2L254.6 492M251.7 491.2L250.9 494.2M486.5 548.9L488.8 550.9M486.5 548.9L486.1 546.1M426.9 635.7L427.3 632.2M426.9 635.7L427.3 636.2M381 473.2L384.3 472M381 473.2L380.1 474.1M256.8 403.5L259.4 401.7M256.8 403.5L257.9 403.7M338.5 364.8L336.8 367.9M338.5 364.8L336.4 363.2M498.7 512.4L501.5 514.2M498.7 512.4L497.4 511.3M456.4 620.5L457.8 620.4M456.4 620.5L459.1 620.3M297.4 547.9L295.9 546.5M297.4 547.9L297.1 551.4M450 562.9L446.8 561.8M450 562.9L450.2 562.4M303 377.4L303 376M303 377.4L300.2 379.5M224.2 594.5L225.8 597.3M224.2 594.5L222.1 594.3M223.1 468L224.5 465.1M223.1 468L222.7 470.1M254.2 551.8L254.5 548.4M254.2 551.8L256.5 552.3M340.9 428.5L340.4 425.1M340.9 428.5L343.9 428.6M337.6 547.1L339 550.2M337.6 547.1L338.3 545.4M275.3 360.2L275.3 362M275.3 360.2L272.3 358.4M316.3 555.7L314.9 553.8M316.3 555.7L315.6 553.9M421.6 487.3L421.5 490.8M421.6 487.3L419.6 486.4M474.6 609.8L473.3 609.2M474.6 609.8L472.7 607.8M465.2 535.1L466.7 537.9M465.2 535.1L466 535.3M277.6 369L279.9 366.6M277.6 369L278.6 371.9M460.3 373.9L460.4 376.9M460.3 373.9L457.1 372.6M448 407.7L449.1 407.9M448 407.7L449.3 410.6M309.4 360.7L309.5 363.8M309.4 360.7L312.7 359.6M325.8 425.6L325 429M325.8 425.6L327.8 424.8M401.8 492.9L398.7 493.9M401.8 492.9L402.7 490.2M432.7 521.4L431.2 522.5M432.7 521.4L435.9 520.4M452.8 419.4L453.3 418.3M452.8 419.4L455.1 422M359.1 499.3L357.9 502.5M359.1 499.3L356.9 497.4M268.9 635.4L267.3 638M268.9 635.4L266.5 632.9M424.6 451.1L427.7 450.1M424.6 451.1L423.6 448.3M350.7 592.9L348.3 593.3M350.7 592.9L349.6 590.3M477.5 556.8L480.9 556.4M477.5 556.8L476.4 558M223.4 417.4L224.2 420.4M223.4 417.4L226.3 416.9M447.2 629.6L446.8 626.7M447.2 629.6L450.7 629.7M454.5 393.5L451.6 391.9M454.5 393.5L453.6 395.5M310.5 379.2L308.5 379.1M310.5 379.2L313.4 380.8M297.1 589.8L293.9 589.3M297.1 589.8L298.6 586.7M310.7 595.5L314.1 596.3M310.7 595.5L309.9 595.2M340.1 471.1L340.8 472.7M340.1 471.1L337.1 469.4M335.5 582.5L334.4 585.2M335.5 582.5L334.8 583.3M502.6 508L502.6 509M502.6 508L501.5 504.7M243.9 498.7L244.1 495.5M243.9 498.7L247.2 499.8M422.3 397.3L423.1 398.4M422.3 397.3L419.4 399.1M370.7 637.5L371.4 634.2M370.7 637.5L373.3 638.2M427 387.4L428.4 388.4M427 387.4L429 389M461.7 395.2L459.8 397.4M461.7 395.2L464.8 394.9M440.5 636L438.6 638.3M440.5 636L438.2 633.4M457.3 442.8L455.6 445.4M457.3 442.8L455.9 442.7M477.4 450.7L474.9 449.1M477.4 450.7L477 449.5M411.3 601.7L408.5 603.8M411.3 601.7L410.7 599.4M458.4 581.1L458.1 580.4M458.4 581.1L461.4 582.9M438.5 589.5L441.3 590.2M438.5 589.5L437.6 586.2M302.3 636.6L302.5 637.3M302.3 636.6L299.1 635.4M332.6 519.6L332.7 522.6M332.6 519.6L329.5 519.8M331.8 396.2L331.2 398.9M331.8 396.2L334.5 394.5M457.8 629.8L456.3 631.5M457.8 629.8L460.4 632M238.9 526.6L238.4 523.7M238.9 526.6L242.2 527.6M252.8 529.4L252.4 526.2M252.8 529.4L250.7 529.4M392.3 442.6L393 442.9M392.3 442.6L390.9 439.5M364.3 410.1L360.9 410.4M364.3 410.1L365.4 407.3M223.8 606L224.3 604.6M223.8 606L225.4 609.1M477.4 600L480.8 599.2M477.4 600L476.5 598.6M282.7 421.3L283.8 418.1M282.7 421.3L281.5 422.3M262.3 414.2L265.2 414.1M262.3 414.2L259.8 415M412.4 611.7L415.6 612.8M412.4 611.7L412.9 608.2M249.1 602.1L252.2 602.9M249.1 602.1L249.8 601.3M309.6 574.2L308.5 574.5M309.6 574.2L306.8 574.9M268.4 361.3L265.2 362.7M268.4 361.3L270.5 364M268.4 605.8L270.2 608M268.4 605.8L269.4 602.6M451.2 412.9L447.8 413.1M451.2 412.9L451.4 413.7M269.3 612L270.1 609.6M269.3 612L265.8 611.6M293.5 493.5L294.7 493.5M293.5 493.5L290.5 495.4M421.7 539.1L424.9 540.3M421.7 539.1L420.3 541.2M390.8 359.6L390.8 358.6M390.8 359.6L387.5 360.6M340.7 619.5L338.2 618.4M340.7 619.5L342 622.4M289.8 514L288.8 517.4M289.8 514L291.6 514M319.6 503.7L321.6 501.4M319.6 503.7L317.6 505.3M267.7 628L268.3 631.4M267.7 628L269.2 626.5M408.3 624.6L411.7 624.4M408.3 624.6L406.7 624.1M279.9 570.4L280.5 573M279.9 570.4L282.8 570.4M237.5 634.1L239.7 633.1M237.5 634.1L239.6 635M480.6 621.6L477.7 623.1M480.6 621.6L479.9 618.2M439.6 509L436.3 508.6M439.6 509L439.7 507.3M342.5 555.8L343.4 553.1M342.5 555.8L340.1 557.6" stroke="#d84040" stroke-width="0.8" fill="none"/>
<path d="M275.7 389.7L276.8 389.1M275.8 393.6L276.9 396.8M225.1 397L224.3 395.2M222.9 398.7L220 398.6M291.8 548.9L291.5 547.3M294.5 548.6L296.8 546.7M424.4 411.8L423.4 411.4M422.3 412.8L419.3 413.4M235 358.1L235.7 356M237.2 361.5L240.3 362.9M399 364.2L398.2 362.5M403.3 366.3L406.8 366.7M455.2 554.5L452.3 555.7M457.6 553.9L457.2 554.5M318.4 446.5L319 443.3M318.1 451.8L318.5 454M377.2 394.8L379.5 392.9M375.8 400L376.5 403.4M244 445.7L242.7 445.9M247 442.6L248.7 439.5M267.1 363.1L269.5 365.6M261.8 362.4L259 364.2M424.8 635.1L425.9 636.4M426.5 632.4L429.3 630.9M287.7 583.7L288.9 583.9M283.2 582.3L279.9 581.1M252.1 623.3L253.8 624.6M247.1 621.4L243.9 620.8M282.2 467.7L280.2 465.1M281.8 472.7L279.5 475.1M255.2 638.9L257.7 640.5M249.7 638.9L246.7 640.5M316.2 593.5L315.6 593.5M314.4 595.6L311.9 597.6M500 608.5L498.1 606.1M502.8 609.5L503.7 608M502.6 375.6L505.5 373.9M500.4 380.7L501.2 384M500.5 629.6L498.2 630.8M500.9 626.7L498.9 625.1M367.2 416.9L366.9 415.3M367.7 415.9L367.8 413.3M286 457.1L283.3 457.9M287.7 457.1L286.7 457.9M500.3 385.9L498 387.4M504.3 383.3L506 382.1M377.1 540.2L374.5 542.6M381.7 539.2L383.7 540.6M389.9 594.7L388.5 593.9M390.2 593.2L389 590.7M359.7 464.4L358.2 466.3M358.6 461.7L356 460.9M462.3 481.7L463.5 484.4M462.9 478.9L464.8 478.8M232.8 418.9L234 415.6M229.7 422.6L227.9 423M350.2 508.9L351.7 505.7M349.2 512.8L349.6 513.6M296.9 611.9L297.1 613.9M295.1 607L293.5 604.1M488 638.1L491.2 639.1M484.5 633.9L484.1 630.6M318.7 577.3L317.4 575.5M322.3 581.4L324.6 583.5M330.3 421.5L327.2 422.3M333 421.2L332.6 421.8M397.5 373.3L398 370.6M394.9 378.1L392.8 380.3M316 477.4L314.7 480.7M314.6 472.3L312 470.4M420.3 608.2L420.2 604.7M420.5 612L420.6 612.3M348 470.1L346.2 467.3M347.2 475.2L344.7 477.6M261.4 426.1L264.2 426.3M257.5 422.5L256.4 419.2M317.4 496.8L319 499.3M315.2 491.7L314.6 489.3M448.9 390.2L452.1 388.9M444.9 393.2L444.1 394.9M453 518.5L451.5 515.3M454.6 522.6L454.9 523.5M264.4 492.4L261 492M269 489.9L270.2 487M453.6 486.7L454.1 486.1M456.3 488.2L459.4 489.1M344.9 410.7L348.3 410.6M340 408.4L338.5 405.9M342.4 623.8L342.6 627.2M344.1 619.8L346.1 619.3M364.8 606L364.1 606.1M365.9 602.6L366.4 599.2M241.8 382.4L239.8 384.7M241.6 378.5L239.4 377M224.6 423.6L225.5 426.6M221.9 421.4L220 422.3M330.9 576.2L327.8 577.8M334.3 573.2L334.6 571.8M295.5 385.5L293.4 384.3M297.1 390.1L296.5 393.6M287.7 636.9L284.3 637.5M291.1 633L291.1 629.6M460.5 601.4L463.5 603M455.9 599.4L454.2 598.9M488.7 473.3L488.2 472.1M490.2 477.8L491.2 481.1M496.6 384.2L499.2 384.4M491.2 385.6L488.6 387.2M475.8 404.4L472.9 405M480.9 402.2L483.1 400.7M432.1 398.8L429.3 397.1M434.1 401.3L433.3 402.1M297.8 483.6L299.2 486.1M297.1 478.1L297.9 475.1M352.6 396.7L350.2 395M358 398L360.9 397.6M281.1 629.2L278.1 630.5M286.4 628.2L288.7 628.5M321.6 600.6L321.6 597.7M318.7 605.2L315.8 606.9M423.2 558.8L420.8 560.3M423.9 556.7L422.1 556.1M327 626.5L329.4 627M326.4 623.9L328 621.8M254.6 492L257.5 492.7M250.9 494.2L250.1 497.1M488.8 550.9L491.1 553M486.1 546.1L485.8 543.3M427.3 632.2L427.6 628.8M427.3 636.2L427.7 636.7M384.3 472L387.5 470.8M380.1 474.1L379.2 475.1M259.4 401.7L261.9 400M257.9 403.7L259 404M336.8 367.9L335.2 370.9M336.4 363.2L334.3 361.6M501.5 514.2L504.4 516M497.4 511.3L496.1 510.1M457.8 620.4L459.3 620.2M459.1 620.3L461.8 620M295.9 546.5L294.5 545.1M297.1 551.4L296.9 554.9M446.8 561.8L443.6 560.7M450.2 562.4L450.4 561.8M303 376L303.1 374.7M300.2 379.5L297.4 381.7M225.8 597.3L227.4 600.1M222.1 594.3L220 594.2M224.5 465.1L226 462.2M222.7 470.1L222.3 472.1M254.5 548.4L254.7 545M256.5 552.3L258.9 552.8M340.4 425.1L340 421.7M343.9 428.6L346.9 428.7M339 550.2L340.5 553.4M338.3 545.4L339 543.7M275.3 362L275.3 363.8M272.3 358.4L269.3 356.6M314.9 553.8L313.4 552M315.6 553.9L314.9 552.1M421.5 490.8L421.4 494.3M419.6 486.4L417.6 485.5M473.3 609.2L471.9 608.7M472.7 607.8L470.7 605.8M466.7 537.9L468.2 540.7M466 535.3L466.8 535.5M279.9 366.6L282.1 364.1M278.6 371.9L279.5 374.8M460.4 376.9L460.4 379.9M457.1 372.6L454 371.2M449.1 407.9L450.2 408M449.3 410.6L450.6 413.5M309.5 363.8L309.6 366.9M312.7 359.6L316 358.4M325 429L324.2 432.4M327.8 424.8L329.9 424M398.7 493.9L395.6 494.9M402.7 490.2L403.7 487.5M431.2 522.5L429.7 523.6M435.9 520.4L439.1 519.4M453.3 418.3L453.7 417.2M455.1 422L457.3 424.7M357.9 502.5L356.7 505.8M356.9 497.4L354.8 495.4M267.3 638L265.7 640.5M266.5 632.9L264 630.4M427.7 450.1L430.8 449.2M423.6 448.3L422.6 445.6M348.3 593.3L345.8 593.7M349.6 590.3L348.5 587.6M480.9 556.4L484.4 555.9M476.4 558L475.4 559.1M224.2 420.4L224.9 423.3M226.3 416.9L229.1 416.3M446.8 626.7L446.3 623.8M450.7 629.7L454.1 629.8M451.6 391.9L448.6 390.4M453.6 395.5L452.6 397.5M308.5 379.1L306.6 378.9M313.4 380.8L316.4 382.4M293.9 589.3L290.7 588.7M298.6 586.7L300.2 583.5M314.1 596.3L317.5 597.1M309.9 595.2L309.2 595M340.8 472.7L341.4 474.4M337.1 469.4L334 467.8M334.4 585.2L333.3 588M334.8 583.3L334.1 584.2M502.6 509L502.6 510M501.5 504.7L500.4 501.3M244.1 495.5L244.4 492.2M247.2 499.8L250.5 500.9M423.1 398.4L423.9 399.5M419.4 399.1L416.5 400.9M371.4 634.2L372 631M373.3 638.2L376 638.9M428.4 388.4L429.8 389.4M429 389L430.9 390.7M459.8 397.4L458 399.5M464.8 394.9L467.8 394.5M438.6 638.3L436.7 640.5M438.2 633.4L436 630.7M455.6 445.4L453.8 448M455.9 442.7L454.5 442.6M474.9 449.1L472.4 447.5M477 449.5L476.5 448.4M408.5 603.8L405.7 605.9M410.7 599.4L410.1 597M458.1 580.4L457.8 579.8M461.4 582.9L464.4 584.7M441.3 590.2L444 590.9M437.6 586.2L436.6 583M302.5 637.3L302.8 638M299.1 635.4L295.8 634.2M332.7 522.6L332.8 525.5M329.5 519.8L326.5 520M331.2 398.9L330.7 401.7M334.5 394.5L337.2 392.9M456.3 631.5L454.8 633.1M460.4 632L463 634.1M238.4 523.7L237.9 520.9M242.2 527.6L245.5 528.6M252.4 526.2L251.9 523.1M250.7 529.4L248.7 529.4M393 442.9L393.7 443.2M390.9 439.5L389.4 436.3M360.9 410.4L357.5 410.7M365.4 407.3L366.5 404.5M224.3 604.6L224.8 603.2M225.4 609.1L227 612.2M480.8 599.2L484.2 598.4M476.5 598.6L475.5 597.1M283.8 418.1L284.9 414.8M281.5 422.3L280.3 423.3M265.2 414.1L268.2 414.1M259.8 415L257.2 415.8M415.6 612.8L418.8 614M412.9 608.2L413.4 604.8M252.2 602.9L255.3 603.6M249.8 601.3L250.5 600.4M308.5 574.5L307.4 574.8M306.8 574.9L303.9 575.6M265.2 362.7L262 364.1M270.5 364L272.7 366.7M270.2 608L272 610.1M269.4 602.6L270.4 599.4M447.8 413.1L444.4 413.3M451.4 413.7L451.7 414.5M270.1 609.6L270.9 607.1M265.8 611.6L262.4 611.2M294.7 493.5L296 493.4M290.5 495.4L287.5 497.2M424.9 540.3L428.2 541.5M420.3 541.2L419 543.3M390.8 358.6L390.9 357.6M387.5 360.6L384.1 361.5M338.2 618.4L335.7 617.2M342 622.4L343.3 625.3M288.8 517.4L287.8 520.7M291.6 514L293.4 514M321.6 501.4L323.6 499.2M317.6 505.3L315.7 507M268.3 631.4L269 634.8M269.2 626.5L270.7 624.9M411.7 624.4L415.1 624.3M406.7 624.1L405 623.6M280.5 573L281 575.6M282.8 570.4L285.6 570.3M239.7 633.1L241.9 632.1M239.6 635L241.7 635.9M477.7 623.1L474.9 624.5M479.9 618.2L479.3 614.8M436.3 508.6L433 508.2M439.7 507.3L439.8 505.6M343.4 553.1L344.3 550.4M340.1 557.6L337.7 559.3" stroke="#d8d8d8" stroke-width="0.7" fill="none"/>
<g fill="url(#hg)"><circle cx="276.8" cy="389.1" r="1.3"/><circle cx="224.3" cy="395.2" r="1.3"/><circle cx="291.5" cy="547.3" r="1.3"/><circle cx="423.4" cy="411.4" r="1.3"/><circle cx="235.7" cy="356" r="1.3"/><circle cx="398.2" cy="362.5" r="1.3"/><circle cx="452.3" cy="555.7" r="1.3"/><circle cx="379.5" cy="392.9" r="1.3"/><circle cx="376.5" cy="403.4" r="1.3"/><circle cx="242.7" cy="445.9" r="1.3"/><circle cx="259" cy="364.2" r="1.3"/><circle cx="429.3" cy="630.9" r="1.3"/><circle cx="253.8" cy="624.6" r="1.3"/><circle cx="243.9" cy="620.8" r="1.3"/><circle cx="280.2" cy="465.1" r="1.3"/><circle cx="311.9" cy="597.6" r="1.3"/><circle cx="503.7" cy="608" r="1.3"/><circle cx="498.9" cy="625.1" r="1.3"/><circle cx="366.9" cy="415.3" r="1.3"/><circle cx="283.3" cy="457.9" r="1.3"/><circle cx="383.7" cy="540.6" r="1.3"/><circle cx="389" cy="590.7" r="1.3"/><circle cx="358.2" cy="466.3" r="1.3"/><circle cx="463.5" cy="484.4" r="1.3"/><circle cx="297.1" cy="613.9" r="1.3"/><circle cx="293.5" cy="604.1" r="1.3"/><circle cx="332.6" cy="421.8" r="1.3"/><circle cx="398" cy="370.6" r="1.3"/><circle cx="392.8" cy="380.3" r="1.3"/><circle cx="420.6" cy="612.3" r="1.3"/><circle cx="344.7" cy="477.6" r="1.3"/><circle cx="264.2" cy="426.3" r="1.3"/><circle cx="319" cy="499.3" r="1.3"/><circle cx="314.6" cy="489.3" r="1.3"/><circle cx="454.1" cy="486.1" r="1.3"/><circle cx="348.3" cy="410.6" r="1.3"/><circle cx="338.5" cy="405.9" r="1.3"/><circle cx="366.4" cy="599.2" r="1.3"/><circle cx="239.4" cy="377" r="1.3"/><circle cx="225.5" cy="426.6" r="1.3"/><circle cx="334.6" cy="571.8" r="1.3"/><circle cx="293.4" cy="384.3" r="1.3"/><circle cx="284.3" cy="637.5" r="1.3"/><circle cx="499.2" cy="384.4" r="1.3"/><circle cx="488.6" cy="387.2" r="1.3"/><circle cx="433.3" cy="402.1" r="1.3"/><circle cx="321.6" cy="597.7" r="1.3"/><circle cx="315.8" cy="606.9" r="1.3"/><circle cx="422.1" cy="556.1" r="1.3"/><circle cx="329.4" cy="627" r="1.3"/><circle cx="250.1" cy="497.1" r="1.3"/><circle cx="491.1" cy="553" r="1.3"/><circle cx="485.8" cy="543.3" r="1.3"/><circle cx="259" cy="404" r="1.3"/><circle cx="334.3" cy="361.6" r="1.3"/><circle cx="504.4" cy="516" r="1.3"/><circle cx="496.1" cy="510.1" r="1.3"/><circle cx="459.3" cy="620.2" r="1.3"/><circle cx="294.5" cy="545.1" r="1.3"/><circle cx="450.4" cy="561.8" r="1.3"/><circle cx="254.7" cy="545" r="1.3"/><circle cx="346.9" cy="428.7" r="1.3"/><circle cx="275.3" cy="363.8" r="1.3"/><circle cx="314.9" cy="552.1" r="1.3"/><circle cx="471.9" cy="608.7" r="1.3"/><circle cx="468.2" cy="540.7" r="1.3"/><circle cx="460.4" cy="379.9" r="1.3"/><circle cx="450.2" cy="408" r="1.3"/><circle cx="309.6" cy="366.9" r="1.3"/><circle cx="329.9" cy="424" r="1.3"/><circle cx="354.8" cy="495.4" r="1.3"/><circle cx="430.8" cy="449.2" r="1.3"/><circle cx="348.5" cy="587.6" r="1.3"/><circle cx="475.4" cy="559.1" r="1.3"/><circle cx="229.1" cy="416.3" r="1.3"/><circle cx="452.6" cy="397.5" r="1.3"/><circle cx="306.6" cy="378.9" r="1.3"/><circle cx="316.4" cy="382.4" r="1.3"/><circle cx="290.7" cy="588.7" r="1.3"/><circle cx="309.2" cy="595" r="1.3"/><circle cx="341.4" cy="474.4" r="1.3"/><circle cx="334.1" cy="584.2" r="1.3"/><circle cx="244.4" cy="492.2" r="1.3"/><circle cx="423.9" cy="399.5" r="1.3"/><circle cx="372" cy="631" r="1.3"/><circle cx="430.9" cy="390.7" r="1.3"/><circle cx="453.8" cy="448" r="1.3"/><circle cx="476.5" cy="448.4" r="1.3"/><circle cx="457.8" cy="579.8" r="1.3"/><circle cx="444" cy="590.9" r="1.3"/><circle cx="436.6" cy="583" r="1.3"/><circle cx="332.8" cy="525.5" r="1.3"/><circle cx="330.7" cy="401.7" r="1.3"/><circle cx="337.2" cy="392.9" r="1.3"/><circle cx="454.8" cy="633.1" r="1.3"/><circle cx="237.9" cy="520.9" r="1.3"/><circle cx="245.5" cy="528.6" r="1.3"/><circle cx="248.7" cy="529.4" r="1.3"/><circle cx="393.7" cy="443.2" r="1.3"/><circle cx="357.5" cy="410.7" r="1.3"/><circle cx="366.5" cy="404.5" r="1.3"/><circle cx="224.8" cy="603.2" r="1.3"/><circle cx="475.5" cy="597.1" r="1.3"/><circle cx="280.3" cy="423.3" r="1.3"/><circle cx="268.2" cy="414.1" r="1.3"/><circle cx="257.2" cy="415.8" r="1.3"/><circle cx="418.8" cy="614" r="1.3"/><circle cx="250.5" cy="600.4" r="1.3"/><circle cx="307.4" cy="574.8" r="1.3"/><circle cx="451.7" cy="414.5" r="1.3"/><circle cx="296" cy="493.4" r="1.3"/><circle cx="419" cy="543.3" r="1.3"/><circle cx="293.4" cy="514" r="1.3"/><circle cx="323.6" cy="499.2" r="1.3"/><circle cx="315.7" cy="507" r="1.3"/><circle cx="270.7" cy="624.9" r="1.3"/><circle cx="415.1" cy="624.3" r="1.3"/><circle cx="405" cy="623.6" r="1.3"/><circle cx="285.6" cy="570.3" r="1.3"/><circle cx="241.7" cy="635.9" r="1.3"/><circle cx="433" cy="508.2" r="1.3"/><circle cx="344.3" cy="550.4" r="1.3"/><circle cx="337.7" cy="559.3" r="1.3"/></g>
<g fill="url(#og)"><circle cx="274.6" cy="390.3" r="3.8"/><circle cx="225.8" cy="398.9" r="3.8"/><circle cx="292.2" cy="550.6" r="3.8"/><circle cx="425.3" cy="412.3" r="3.8"/><circle cx="234.2" cy="360.2" r="3.8"/><circle cx="399.8" cy="365.9" r="3.8"/><circle cx="458.1" cy="553.3" r="3.8"/><circle cx="317.7" cy="449.6" r="3.8"/><circle cx="375" cy="396.7" r="3.8"/><circle cx="245.3" cy="445.6" r="3.8"/><circle cx="264.7" cy="360.6" r="3.8"/><circle cx="423.7" cy="633.9" r="3.8"/><circle cx="286.5" cy="583.5" r="3.8"/><circle cx="250.3" cy="622.1" r="3.8"/><circle cx="284.1" cy="470.3" r="3.8"/><circle cx="252.7" cy="637.3" r="3.8"/><circle cx="316.9" cy="593.5" r="3.8"/><circle cx="501.8" cy="611" r="3.8"/><circle cx="499.6" cy="377.4" r="3.8"/><circle cx="502.8" cy="628.3" r="3.8"/><circle cx="367.6" cy="418.5" r="3.8"/><circle cx="288.7" cy="456.3" r="3.8"/><circle cx="502.6" cy="384.4" r="3.8"/><circle cx="379.6" cy="537.9" r="3.8"/><circle cx="391.3" cy="595.6" r="3.8"/><circle cx="361.2" cy="462.5" r="3.8"/><circle cx="461" cy="479" r="3.8"/><circle cx="231.6" cy="422.2" r="3.8"/><circle cx="348.8" cy="512" r="3.8"/><circle cx="296.7" cy="610" r="3.8"/><circle cx="484.8" cy="637.2" r="3.8"/><circle cx="320" cy="579.2" r="3.8"/><circle cx="333.4" cy="420.6" r="3.8"/><circle cx="397" cy="376" r="3.8"/><circle cx="317.2" cy="474.1" r="3.8"/><circle cx="420.3" cy="611.6" r="3.8"/><circle cx="349.7" cy="472.9" r="3.8"/><circle cx="258.6" cy="425.8" r="3.8"/><circle cx="315.8" cy="494.2" r="3.8"/><circle cx="445.7" cy="391.5" r="3.8"/><circle cx="454.4" cy="521.7" r="3.8"/><circle cx="267.9" cy="492.8" r="3.8"/><circle cx="453.1" cy="487.2" r="3.8"/><circle cx="341.5" cy="410.8" r="3.8"/><circle cx="342.1" cy="620.4" r="3.8"/><circle cx="365.4" cy="606" r="3.8"/><circle cx="243.8" cy="380.1" r="3.8"/><circle cx="223.7" cy="420.5" r="3.8"/><circle cx="334" cy="574.6" r="3.8"/><circle cx="297.7" cy="386.7" r="3.8"/><circle cx="291" cy="636.3" r="3.8"/><circle cx="457.5" cy="599.9" r="3.8"/><circle cx="489.2" cy="474.5" r="3.8"/><circle cx="493.9" cy="384" r="3.8"/><circle cx="478.7" cy="403.7" r="3.8"/><circle cx="434.9" cy="400.5" r="3.8"/><circle cx="296.4" cy="481.2" r="3.8"/><circle cx="355.1" cy="398.5" r="3.8"/><circle cx="284.1" cy="627.9" r="3.8"/><circle cx="321.5" cy="603.4" r="3.8"/><circle cx="425.6" cy="557.4" r="3.8"/><circle cx="324.7" cy="626" r="3.8"/><circle cx="251.7" cy="491.2" r="3.8"/><circle cx="486.5" cy="548.9" r="3.8"/><circle cx="426.9" cy="635.7" r="3.8"/><circle cx="381" cy="473.2" r="3.8"/><circle cx="256.8" cy="403.5" r="3.8"/><circle cx="338.5" cy="364.8" r="3.8"/><circle cx="498.7" cy="512.4" r="3.8"/><circle cx="456.4" cy="620.5" r="3.8"/><circle cx="297.4" cy="547.9" r="3.8"/><circle cx="450" cy="562.9" r="3.8"/><circle cx="303" cy="377.4" r="3.8"/><circle cx="224.2" cy="594.5" r="3.8"/><circle cx="223.1" cy="468" r="3.8"/><circle cx="254.2" cy="551.8" r="3.8"/><circle cx="340.9" cy="428.5" r="3.8"/><circle cx="337.6" cy="547.1" r="3.8"/><circle cx="275.3" cy="360.2" r="3.8"/><circle cx="316.3" cy="555.7" r="3.8"/><circle cx="421.6" cy="487.3" r="3.8"/><circle cx="474.6" cy="609.8" r="3.8"/><circle cx="465.2" cy="535.1" r="3.8"/><circle cx="277.6" cy="369" r="3.8"/><circle cx="460.3" cy="373.9" r="3.8"/><circle cx="448" cy="407.7" r="3.8"/><circle cx="309.4" cy="360.7" r="3.8"/><circle cx="325.8" cy="425.6" r="3.8"/><circle cx="401.8" cy="492.9" r="3.8"/><circle cx="432.7" cy="521.4" r="3.8"/><circle cx="452.8" cy="419.4" r="3.8"/><circle cx="359.1" cy="499.3" r="3.8"/><circle cx="268.9" cy="635.4" r="3.8"/><circle cx="424.6" cy="451.1" r="3.8"/><circle cx="350.7" cy="592.9" r="3.8"/><circle cx="477.5" cy="556.8" r="3.8"/><circle cx="223.4" cy="417.4" r="3.8"/><circle cx="447.2" cy="629.6" r="3.8"/><circle cx="454.5" cy="393.5" r="3.8"/><circle cx="310.5" cy="379.2" r="3.8"/><circle cx="297.1" cy="589.8" r="3.8"/><circle cx="310.7" cy="595.5" r="3.8"/><circle cx="340.1" cy="471.1" r="3.8"/><circle cx="335.5" cy="582.5" r="3.8"/><circle cx="502.6" cy="508" r="3.8"/><circle cx="243.9" cy="498.7" r="3.8"/><circle cx="422.3" cy="397.3" r="3.8"/><circle cx="370.7" cy="637.5" r="3.8"/><circle cx="427" cy="387.4" r="3.8"/><circle cx="461.7" cy="395.2" r="3.8"/><circle cx="440.5" cy="636" r="3.8"/><circle cx="457.3" cy="442.8" r="3.8"/><circle cx="477.4" cy="450.7" r="3.8"/><circle cx="411.3" cy="601.7" r="3.8"/><circle cx="458.4" cy="581.1" r="3.8"/><circle cx="438.5" cy="589.5" r="3.8"/><circle cx="302.3" cy="636.6" r="3.8"/><circle cx="332.6" cy="519.6" r="3.8"/><circle cx="331.8" cy="396.2" r="3.8"/><circle cx="457.8" cy="629.8" r="3.8"/><circle cx="238.9" cy="526.6" r="3.8"/><circle cx="252.8" cy="529.4" r="3.8"/><circle cx="392.3" cy="442.6" r="3.8"/><circle cx="364.3" cy="410.1" r="3.8"/><circle cx="223.8" cy="606" r="3.8"/><circle cx="477.4" cy="600" r="3.8"/><circle cx="282.7" cy="421.3" r="3.8"/><circle cx="262.3" cy="414.2" r="3.8"/><circle cx="412.4" cy="611.7" r="3.8"/><circle cx="249.1" cy="602.1" r="3.8"/><circle cx="309.6" cy="574.2" r="3.8"/><circle cx="268.4" cy="361.3" r="3.8"/><circle cx="268.4" cy="605.8" r="3.8"/><circle cx="451.2" cy="412.9" r="3.8"/><circle cx="269.3" cy="612" r="3.8"/><circle cx="293.5" cy="493.5" r="3.8"/><circle cx="421.7" cy="539.1" r="3.8"/><circle cx="390.8" cy="359.6" r="3.8"/><circle cx="340.7" cy="619.5" r="3.8"/><circle cx="289.8" cy="514" r="3.8"/><circle cx="319.6" cy="503.7" r="3.8"/><circle cx="267.7" cy="628" r="3.8"/><circle cx="408.3" cy="624.6" r="3.8"/><circle cx="279.9" cy="570.4" r="3.8"/><circle cx="237.5" cy="634.1" r="3.8"/><circle cx="480.6" cy="621.6" r="3.8"/><circle cx="439.6" cy="509" r="3.8"/><circle cx="342.5" cy="555.8" r="3.8"/></g>
<g fill="url(#hg)"><circle cx="276.9" cy="396.8" r="1.3"/><circle cx="220" cy="398.6" r="1.3"/><circle cx="296.8" cy="546.7" r="1.3"/><circle cx="419.3" cy="413.4" r="1.3"/><circle cx="240.3" cy="362.9" r="1.3"/><circle cx="406.8" cy="366.7" r="1.3"/><circle cx="457.2" cy="554.5" r="1.3"/><circle cx="319" cy="443.3" r="1.3"/><circle cx="318.5" cy="454" r="1.3"/><circle cx="248.7" cy="439.5" r="1.3"/><circle cx="269.5" cy="365.6" r="1.3"/><circle cx="425.9" cy="636.4" r="1.3"/><circle cx="288.9" cy="583.9" r="1.3"/><circle cx="279.9" cy="581.1" r="1.3"/><circle cx="279.5" cy="475.1" r="1.3"/><circle cx="257.7" cy="640.5" r="1.3"/><circle cx="246.7" cy="640.5" r="1.3"/><circle cx="315.6" cy="593.5" r="1.3"/><circle cx="498.1" cy="606.1" r="1.3"/><circle cx="505.5" cy="373.9" r="1.3"/><circle cx="501.2" cy="384" r="1.3"/><circle cx="498.2" cy="630.8" r="1.3"/><circle cx="367.8" cy="413.3" r="1.3"/><circle cx="286.7" cy="457.9" r="1.3"/><circle cx="498" cy="387.4" r="1.3"/><circle cx="506" cy="382.1" r="1.3"/><circle cx="374.5" cy="542.6" r="1.3"/><circle cx="388.5" cy="593.9" r="1.3"/><circle cx="356" cy="460.9" r="1.3"/><circle cx="464.8" cy="478.8" r="1.3"/><circle cx="234" cy="415.6" r="1.3"/><circle cx="227.9" cy="423" r="1.3"/><circle cx="351.7" cy="505.7" r="1.3"/><circle cx="349.6" cy="513.6" r="1.3"/><circle cx="491.2" cy="639.1" r="1.3"/><circle cx="484.1" cy="630.6" r="1.3"/><circle cx="317.4" cy="575.5" r="1.3"/><circle cx="324.6" cy="583.5" r="1.3"/><circle cx="327.2" cy="422.3" r="1.3"/><circle cx="314.7" cy="480.7" r="1.3"/><circle cx="312" cy="470.4" r="1.3"/><circle cx="420.2" cy="604.7" r="1.3"/><circle cx="346.2" cy="467.3" r="1.3"/><circle cx="256.4" cy="419.2" r="1.3"/><circle cx="452.1" cy="388.9" r="1.3"/><circle cx="444.1" cy="394.9" r="1.3"/><circle cx="451.5" cy="515.3" r="1.3"/><circle cx="454.9" cy="523.5" r="1.3"/><circle cx="261" cy="492" r="1.3"/><circle cx="270.2" cy="487" r="1.3"/><circle cx="459.4" cy="489.1" r="1.3"/><circle cx="342.6" cy="627.2" r="1.3"/><circle cx="346.1" cy="619.3" r="1.3"/><circle cx="364.1" cy="606.1" r="1.3"/><circle cx="239.8" cy="384.7" r="1.3"/><circle cx="220" cy="422.3" r="1.3"/><circle cx="327.8" cy="577.8" r="1.3"/><circle cx="296.5" cy="393.6" r="1.3"/><circle cx="291.1" cy="629.6" r="1.3"/><circle cx="463.5" cy="603" r="1.3"/><circle cx="454.2" cy="598.9" r="1.3"/><circle cx="488.2" cy="472.1" r="1.3"/><circle cx="491.2" cy="481.1" r="1.3"/><circle cx="472.9" cy="405" r="1.3"/><circle cx="483.1" cy="400.7" r="1.3"/><circle cx="429.3" cy="397.1" r="1.3"/><circle cx="299.2" cy="486.1" r="1.3"/><circle cx="297.9" cy="475.1" r="1.3"/><circle cx="350.2" cy="395" r="1.3"/><circle cx="360.9" cy="397.6" r="1.3"/><circle cx="278.1" cy="630.5" r="1.3"/><circle cx="288.7" cy="628.5" r="1.3"/><circle cx="420.8" cy="560.3" r="1.3"/><circle cx="328" cy="621.8" r="1.3"/><circle cx="257.5" cy="492.7" r="1.3"/><circle cx="427.6" cy="628.8" r="1.3"/><circle cx="427.7" cy="636.7" r="1.3"/><circle cx="387.5" cy="470.8" r="1.3"/><circle cx="379.2" cy="475.1" r="1.3"/><circle cx="261.9" cy="400" r="1.3"/><circle cx="335.2" cy="370.9" r="1.3"/><circle cx="461.8" cy="620" r="1.3"/><circle cx="296.9" cy="554.9" r="1.3"/><circle cx="443.6" cy="560.7" r="1.3"/><circle cx="303.1" cy="374.7" r="1.3"/><circle cx="297.4" cy="381.7" r="1.3"/><circle cx="227.4" cy="600.1" r="1.3"/><circle cx="220" cy="594.2" r="1.3"/><circle cx="226" cy="462.2" r="1.3"/><circle cx="222.3" cy="472.1" r="1.3"/><circle cx="258.9" cy="552.8" r="1.3"/><circle cx="340" cy="421.7" r="1.3"/><circle cx="340.5" cy="553.4" r="1.3"/><circle cx="339" cy="543.7" r="1.3"/><circle cx="269.3" cy="356.6" r="1.3"/><circle cx="313.4" cy="552" r="1.3"/><circle cx="421.4" cy="494.3" r="1.3"/><circle cx="417.6" cy="485.5" r="1.3"/><circle cx="470.7" cy="605.8" r="1.3"/><circle cx="466.8" cy="535.5" r="1.3"/><circle cx="282.1" cy="364.1" r="1.3"/><circle cx="279.5" cy="374.8" r="1.3"/><circle cx="454" cy="371.2" r="1.3"/><circle cx="450.6" cy="413.5" r="1.3"/><circle cx="316" cy="358.4" r="1.3"/><circle cx="324.2" cy="432.4" r="1.3"/><circle cx="395.6" cy="494.9" r="1.3"/><circle cx="403.7" cy="487.5" r="1.3"/><circle cx="429.7" cy="523.6" r="1.3"/><circle cx="439.1" cy="519.4" r="1.3"/><circle cx="453.7" cy="417.2" r="1.3"/><circle cx="457.3" cy="424.7" r="1.3"/><circle cx="356.7" cy="505.8" r="1.3"/><circle cx="265.7" cy="640.5" r="1.3"/><circle cx="264" cy="630.4" r="1.3"/><circle cx="422.6" cy="445.6" r="1.3"/><circle cx="345.8" cy="593.7" r="1.3"/><circle cx="484.4" cy="555.9" r="1.3"/><circle cx="224.9" cy="423.3" r="1.3"/><circle cx="446.3" cy="623.8" r="1.3"/><circle cx="454.1" cy="629.8" r="1.3"/><circle cx="448.6" cy="390.4" r="1.3"/><circle cx="300.2" cy="583.5" r="1.3"/><circle cx="317.5" cy="597.1" r="1.3"/><circle cx="334" cy="467.8" r="1.3"/><circle cx="333.3" cy="588" r="1.3"/><circle cx="502.6" cy="510" r="1.3"/><circle cx="500.4" cy="501.3" r="1.3"/><circle cx="250.5" cy="500.9" r="1.3"/><circle cx="416.5" cy="400.9" r="1.3"/><circle cx="376" cy="638.9" r="1.3"/><circle cx="429.8" cy="389.4" r="1.3"/><circle cx="458" cy="399.5" r="1.3"/><circle cx="467.8" cy="394.5" r="1.3"/><circle cx="436.7" cy="640.5" r="1.3"/><circle cx="436" cy="630.7" r="1.3"/><circle cx="454.5" cy="442.6" r="1.3"/><circle cx="472.4" cy="447.5" r="1.3"/><circle cx="405.7" cy="605.9" r="1.3"/><circle cx="410.1" cy="597" r="1.3"/><circle cx="464.4" cy="584.7" r="1.3"/><circle cx="302.8" cy="638" r="1.3"/><circle cx="295.8" cy="634.2" r="1.3"/><circle cx="326.5" cy="520" r="1.3"/><circle cx="463" cy="634.1" r="1.3"/><circle cx="251.9" cy="523.1" r="1.3"/><circle cx="389.4" cy="436.3" r="1.3"/><circle cx="227" cy="612.2" r="1.3"/><circle cx="484.2" cy="598.4" r="1.3"/><circle cx="284.9" cy="414.8" r="1.3"/><circle cx="413.4" cy="604.8" r="1.3"/><circle cx="255.3" cy="603.6" r="1.3"/><circle cx="303.9" cy="575.6" r="1.3"/><circle cx="262" cy="364.1" r="1.3"/><circle cx="272.7" cy="366.7" r="1.3"/><circle cx="272" cy="610.1" r="1.3"/><circle cx="270.4" cy="599.4" r="1.3"/><circle cx="444.4" cy="413.3" r="1.3"/><circle cx="270.9" cy="607.1" r="1.3"/><circle cx="262.4" cy="611.2" r="1.3"/><circle cx="287.5" cy="497.2" r="1.3"/><circle cx="428.2" cy="541.5" r="1.3"/><circle cx="390.9" cy="357.6" r="1.3"/><circle cx="384.1" cy="361.5" r="1.3"/><circle cx="335.7" cy="617.2" r="1.3"/><circle cx="343.3" cy="625.3" r="1.3"/><circle cx="287.8" cy="520.7" r="1.3"/><circle cx="269" cy="634.8" r="1.3"/><circle cx="281" cy="575.6" r="1.3"/><circle cx="241.9" cy="632.1" r="1.3"/><circle cx="474.9" cy="624.5" r="1.3"/><circle cx="479.3" cy="614.8" r="1.3"/><circle cx="439.8" cy="505.6" r="1.3"/></g>
</svg>
<!--/MOLECULE-->
  <div id="fm" style="right:5.0px;letter-spacing:-0.19px">C3 H1800 O898</div>
</div>
<div id="bottombar">
  <!--TOOLBAR-->
<svg class="abs" style="left:0;top:0" width="891" height="48" viewBox="0 858 891 48">
<defs><clipPath id="pc"><rect x="224.5" y="868" width="441" height="28.2" rx="14.1"/></clipPath><radialGradient id="glow"><stop offset="0" stop-color="#fff" stop-opacity="0.6"/><stop offset="0.5" stop-color="#fff" stop-opacity="0.28"/><stop offset="1" stop-color="#fff" stop-opacity="0"/></radialGradient><linearGradient id="refl" x1="0" y1="0" x2="0" y2="1"><stop offset="0" stop-color="#4a4040" stop-opacity="0.62"/><stop offset="0.1" stop-color="#5a5050" stop-opacity="0.4"/><stop offset="0.22" stop-color="#6a6060" stop-opacity="0.26"/><stop offset="1" stop-color="#6a6060" stop-opacity="0.2"/></linearGradient></defs>
<clipPath id="rc"><rect x="200" y="900.6" width="500" height="10"/></clipPath>
<rect x="222.6" y="899.2" width="444.8" height="33.4" rx="16.7" fill="url(#refl)"/>
<rect x="222.6" y="899.2" width="444.8" height="33.4" rx="16.7" fill="none" stroke="#ffffff" stroke-opacity="0.55" stroke-width="1.6" clip-path="url(#rc)"/>
<rect x="221.8" y="865.4" width="446.3" height="33.4" rx="16.7" fill="#fdfdfd"/>
<g clip-path="url(#pc)"><rect x="220" y="860" width="450" height="40" fill="#2a0808"/><rect x="224" y="853" width="442" height="30" rx="10" ry="5.5" fill="#5f4f4f"/></g>
<circle cx="246" cy="883" r="10.5" fill="url(#glow)" clip-path="url(#pc)"/>
<polygon points="242.2,875.5 252.4,885.9 246,883.7 242.2,889.3" fill="#e9e4e4"/>
<text x="276.4" y="888.9" text-anchor="middle" font-family="DejaVu Sans, Liberation Sans, sans-serif" font-size="17.5" fill="#ddd6d6" stroke="#ddd6d6" stroke-width="0.3">C</text>
<text x="309.1" y="888.9" text-anchor="middle" font-family="DejaVu Sans, Liberation Sans, sans-serif" font-size="17.5" fill="#ddd6d6" stroke="#ddd6d6" stroke-width="0.3">O</text>
<text x="341.2" y="888.9" text-anchor="middle" font-family="DejaVu Sans, Liberation Sans, sans-serif" font-size="17.5" fill="#ddd6d6" stroke="#ddd6d6" stroke-width="0.3">N</text>
<text x="373.5" y="888.9" text-anchor="middle" font-family="DejaVu Sans, Liberation Sans, sans-serif" font-size="17.5" fill="#ddd6d6" stroke="#ddd6d6" stroke-width="0.3">H</text>
<text x="401.5" y="888.9" text-anchor="middle" font-family="DejaVu Sans, Liberation Sans, sans-serif" font-size="17.5" fill="#ddd6d6" stroke="#ddd6d6" stroke-width="0.3">X</text>
<polygon points="409.4,884.3 416.2,884.3 412.8,889.9" fill="#ddd6d6"/>
<polygon points="436.80,875.55 442.65,878.92 442.65,885.67 436.80,889.05 430.95,885.67 430.95,878.92" fill="none" stroke="#ddd6d6" stroke-width="2.7" stroke-linejoin="miter"/>
<path d="M468.80 882.60L468.80 874.40M468.80 878.00L466.20 875.81M468.80 878.00L471.40 875.81M468.80 882.60L475.90 878.50M472.78 880.30L473.37 876.95M472.78 880.30L475.98 881.46M468.80 882.60L475.90 886.70M472.78 884.90L475.98 883.74M472.78 884.90L473.37 888.25M468.80 882.60L468.80 890.80M468.80 887.20L471.40 889.39M468.80 887.20L466.20 889.39M468.80 882.60L461.70 886.70M464.82 884.90L464.23 888.25M464.82 884.90L461.62 883.74M468.80 882.60L461.70 878.50M464.82 880.30L461.62 881.46M464.82 880.30L464.23 876.95" stroke="#ddd6d6" stroke-width="1.5" fill="none"/>
<polygon points="494,879.1 507.7,875.8 507.7,884.6 494,887.9" fill="none" stroke="#ddd6d6" stroke-width="1.5"/>
<polygon points="580.40,874.00 582.46,879.77 588.58,879.94 583.73,883.68 585.45,889.56 580.40,886.10 575.35,889.56 577.07,883.68 572.22,879.94 578.34,879.77" fill="#e2dcdc"/>
<rect x="604.6" y="873.3" width="16.8" height="16.8" fill="#fff" fill-opacity="0.16" stroke="#ddd6d6" stroke-width="1.3"/>
<rect x="609.2" y="877.9" width="7.8" height="7.8" fill="none" stroke="#ddd6d6" stroke-width="1.2"/>
<path d="M604.6 873.3L609.2 877.9M621.4 873.3L617 877.9M604.6 890.1L609.2 885.7M621.4 890.1L617 885.7" stroke="#ddd6d6" stroke-width="1.1"/>
<g fill="#ddd6d6"><circle cx="639.1" cy="877.9" r="3.3"/><circle cx="639.1" cy="886.8" r="3.3"/><circle cx="648.5" cy="886.8" r="3.3"/></g>
<circle cx="648.5" cy="877.9" r="2.9" fill="none" stroke="#ddd6d6" stroke-width="1.1"/>
</svg>
<!--/TOOLBAR-->
</div>

<div id="panel"></div>
<div id="tabbar">
  <div id="ff"><span id="t1" style="left:4.5px;letter-spacing:-0.63px">Force Field</span></div>
  <div class="tab" style="left:111px;width:52px;border-right:1px solid #7d7d7d;height:35px;"><span id="t2" style="left:5.9px;letter-spacing:-0.90px">Main</span></div>
  <div class="tab sel" style="left:163px;width:61px;"><span id="t3" style="left:4.3px;letter-spacing:-0.80px">Model</span></div>
  <div class="tab" style="left:224px;border-left:1px solid #7d7d7d;height:35px;width:100px"><span id="t4" style="left:3.7px;letter-spacing:-0.80px">Properties</span></div>
  <div class="tab" style="left:322px;"><span id="t5" style="left:3.5px;letter-spacing:-0.78px">Details</span></div>
  <svg class="abs" style="left:594px;top:8px" width="20" height="20" viewBox="0 0 20 20"><circle cx="8.4" cy="8.2" r="5.6" fill="none" stroke="#111" stroke-width="1.5"/><path d="M12.4 12.2 L16.4 15.2" stroke="#111" stroke-width="2.2" stroke-linecap="butt"/></svg>
</div>
<!--FORM-->
<div class="txt" id="f1" style="left:1187.6px;top:84px;font-weight:bold;letter-spacing:-0.90px">MD</div>
<svg class="abs" style="left:1459px;top:82px" width="18" height="18" viewBox="0 0 18 18"><circle cx="9" cy="9" r="9" fill="#b9b9b9"/><path d="M4.8 5.8H13.2M4.8 9.6H13.2M4.8 13.4H13.2" stroke="#d9d9d9" stroke-width="1.2"/></svg>
<svg class="abs" style="left:1485px;top:82px" width="18" height="18" viewBox="0 0 18 18"><circle cx="9" cy="9" r="9" fill="#4f4f4f"/><text x="9.2" y="13.9" text-anchor="middle" font-family="DejaVu Sans, Liberation Sans, sans-serif" font-size="13.5" fill="#f2f2f2" stroke="#f2f2f2" stroke-width="0.55">?</text></svg>

<div class="lbl" id="f2" style="left:900.0px;top:126px;letter-spacing:-0.41px">Number of steps:</div>
<div class="inp y" style="top:125px"><span id="f22" style="right:2.2px;letter-spacing:-0.30px">100000</span></div>
<div class="lbl" id="f3" style="left:901.2px;top:152px;letter-spacing:-0.46px">Time step:</div>
<div class="inp y" style="top:151px"><span id="f23" style="right:2.4px;letter-spacing:-0.90px">0.5</span></div>
<div class="txt" id="f4" style="left:1278.6px;top:152px;letter-spacing:-0.90px">fs</div>
<div class="dd" style="left:1297px;top:159px"></div>

<div class="lbl" id="f5" style="left:901.0px;top:204px;letter-spacing:-0.43px">Trajectory Options</div>
<svg class="go" style="top:205px" viewBox="0 0 18 18"><circle cx="9" cy="9" r="9" fill="#4d4d4d"/><path d="M7.2 4.6 L12.4 9 L7.2 13.6" fill="none" stroke="#ececec" stroke-width="1.6"/></svg>
<div class="lbl" id="f6" style="left:900.2px;top:230px;letter-spacing:-0.39px">Sample frequency:</div>
<div class="inp" style="top:229px"><span id="f24" style="right:2.4px;letter-spacing:-0.54px">100</span></div>

<div class="lbl" id="f7" style="left:901.0px;top:282px;letter-spacing:-0.60px">Thermostat</div>
<svg class="go" style="top:283px" viewBox="0 0 18 18"><circle cx="9" cy="9" r="9" fill="#4d4d4d"/><path d="M7.2 4.6 L12.4 9 L7.2 13.6" fill="none" stroke="#ececec" stroke-width="1.6"/></svg>
<div class="lbl" id="f8" style="left:900.2px;top:308px;letter-spacing:-0.64px">Barostat</div>
<svg class="go" style="top:309px" viewBox="0 0 18 18"><circle cx="9" cy="9" r="9" fill="#4d4d4d"/><path d="M7.2 4.6 L12.4 9 L7.2 13.6" fill="none" stroke="#ececec" stroke-width="1.6"/></svg>

<div class="lbl" id="f9" style="left:900.6px;top:360px;letter-spacing:-0.36px">Adsorption support region:</div>
<div class="combo" style="top:359px;width:158px"><b></b><i></i><em></em></div>

<div class="lbl" id="f10" style="left:900.8px;top:423px;letter-spacing:-0.22px">Shake</div>
<div class="btn" style="left:900px;top:450px"><svg class="abs" style="left:8px;top:4px" width="10" height="10" viewBox="0 0 10 10"><path d="M5 0.7V9.3M0.7 5H9.3" stroke="#2e2e2e" stroke-width="1.9"/></svg></div>
<div class="txt" id="f11" style="left:933.8px;top:451px;letter-spacing:-0.48px">Constrain all:</div>
<div class="inp" style="left:1076px;top:450px;width:424px"></div>

<div class="lbl" id="f12" style="left:899.8px;top:506px;letter-spacing:-0.40px">Initial velocities:</div>
<div class="combo" style="top:505px;width:218px"><b></b><i></i><em></em><span id="f99" style="left:10.0px;letter-spacing:-0.66px">Random</span></div>
<div class="lbl dis" id="f13" style="left:899.8px;top:543px;letter-spacing:0.33px">File:</div>
<svg class="abs" style="left:1164px;top:544px" width="27" height="19" viewBox="0 0 27 19"><defs><pattern id="st" width="2" height="2" patternUnits="userSpaceOnUse"><rect width="1" height="1" fill="#4c4c4c"/><rect x="1" y="1" width="1" height="1" fill="#4c4c4c"/></pattern><pattern id="st2" width="2" height="2" patternUnits="userSpaceOnUse"><rect width="1" height="1" fill="#f6f6f6"/><rect x="1" y="1" width="1" height="1" fill="#f6f6f6"/></pattern></defs><rect x="1" y="1" width="25" height="17" fill="url(#st2)" opacity="0.5"/><path d="M0 0.5H27" stroke="#8c8c8c" stroke-dasharray="1 1"/><path d="M0.5 0V19" stroke="#a8a8a8" stroke-dasharray="1 1"/><path d="M26.5 0V19" stroke="#6e6e6e" stroke-dasharray="1 1"/><path d="M0 18.5H27" stroke="#585858" stroke-dasharray="1 1"/><g transform="translate(1 1)"><path d="M8.2 4.2H13.7V6.2H8.2Z" fill="url(#st)"/><path d="M13.5 5.5H18.8Q19.9 5.5 19.9 6.6V12.7H18.6" fill="none" stroke="url(#st)" stroke-width="1.15"/><path d="M6.1 7.3H17.4L18.7 12.9H7.3Z" fill="url(#st)"/></g></svg>
<div class="inp" style="left:1196px;top:542px;width:304px;background:#e9e9e9"></div>
<div class="lbl" id="f14" style="left:899.8px;top:570px;letter-spacing:-0.39px">Initial temperature:</div>
<div class="inp y" style="top:569px"><span id="f25" style="right:2.8px;letter-spacing:-0.90px">300</span></div>
<div id="cur" class="abs" style="left:1264px;top:571px;width:2px;height:18px;background:#000"></div>
<div class="txt" id="f15" style="left:1278.8px;top:570px;letter-spacing:0.00px">K</div>
<div class="dd" style="left:1294px;top:576px"></div>

<div class="lbl" id="f16" style="left:899.8px;top:622px;letter-spacing:-0.46px">Preserve:</div>
<div class="cb" style="top:627px"></div><div class="txt" id="f17" style="left:1179.4px;top:622px;letter-spacing:-0.40px">Total momentum</div>
<div class="cb" style="top:653px"></div><div class="txt" id="f18" style="left:1179.4px;top:648px;letter-spacing:-0.54px">Angular momentum</div>
<div class="cb off" style="top:679px"></div><div class="txt" id="f19" style="left:1178.2px;top:674px;letter-spacing:-0.61px">Center of mass</div>

<div class="lbl" id="f20" style="left:900.8px;top:726px;letter-spacing:-0.39px">Checkpoint frequency:</div>
<div class="inp" style="top:725px"><span id="f26" style="right:1.4px;letter-spacing:-0.18px">1000</span></div>
<div class="lbl" id="f21" style="left:900.4px;top:752px;letter-spacing:-0.43px">Restart from:</div>
<div class="btn" style="left:1164px;top:753px"><svg class="abs" style="left:0;top:0" width="25" height="17" viewBox="0 0 25 17"><path d="M8.2 4.2H13.7V6.2H8.2Z" fill="#555"/><path d="M13.5 5.5H18.8Q19.9 5.5 19.9 6.6V12.7H18.6" fill="none" stroke="#555" stroke-width="1.15"/><path d="M6.1 7.3H17.4L18.7 12.9H7.3Z" fill="#555"/></svg></div>
<div class="inp" style="left:1196px;top:751px;width:304px"></div>
<!--/FORM-->
</body>
</html>
